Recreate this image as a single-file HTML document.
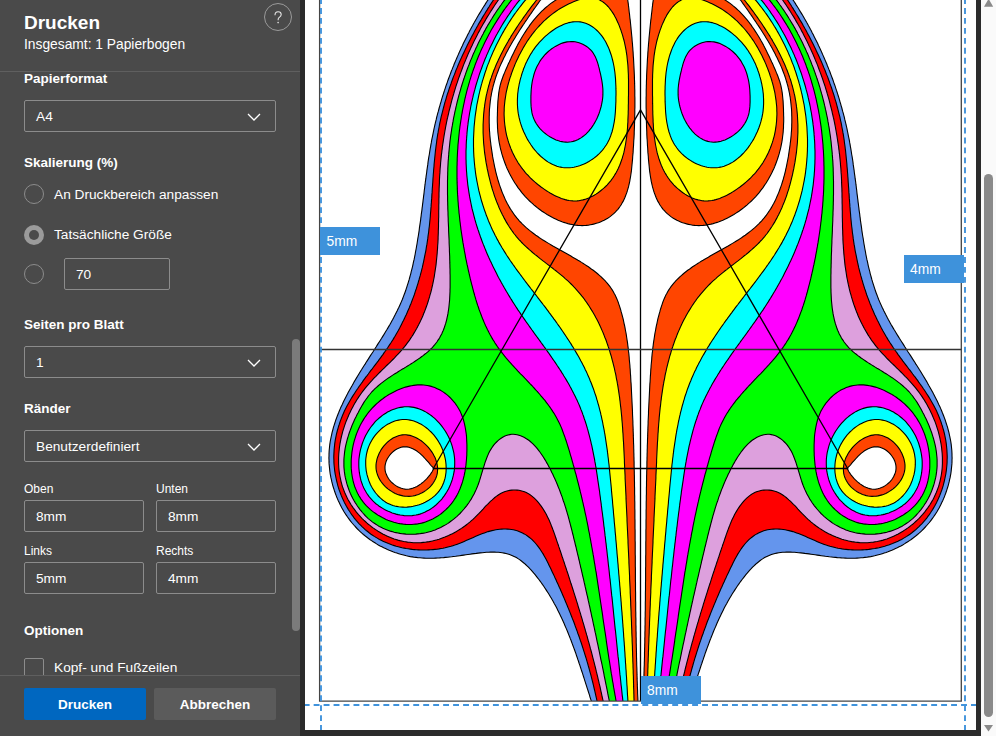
<!DOCTYPE html>
<html><head><meta charset="utf-8">
<style>
*{margin:0;padding:0;box-sizing:border-box}
html,body{width:996px;height:736px;overflow:hidden;background:#2b2b2b;font-family:"Liberation Sans",sans-serif}
.abs{position:absolute}
#panel{position:absolute;left:0;top:0;width:300px;height:736px;background:#4a4a4a;color:#fff;overflow:hidden}
.t{position:absolute;white-space:nowrap;line-height:1}
.h{font-weight:bold;font-size:13.5px}
.n{font-size:13.7px}
.s{font-size:12px}
.box{position:absolute;border:1px solid #8c8c8c;border-radius:2px}
.chev{position:absolute;width:14px;height:8px}
.radio{position:absolute;width:20px;height:20px;border-radius:50%;border:1px solid #8c8c8c}
#page{position:absolute;left:305px;top:0;width:671px;height:730px;background:#fff;overflow:hidden}
#sb{position:absolute;left:981px;top:0;width:15px;height:736px;background:#fafafa}
</style></head><body>
<div id="panel">
  <div class="t" style="left:24px;top:12.5px;font-size:19px;font-weight:bold">Drucken</div>
  <div class="t" style="left:24px;top:38px;font-size:13.8px">Insgesamt: 1 Papierbogen</div>
  <div class="abs" style="left:264px;top:3px;width:28px;height:28px;border:1px solid #9a9a9a;border-radius:50%"></div>
  <svg class="abs" style="left:264px;top:3px" width="28" height="28" viewBox="264 3 28 28"><path d="M275 15.2 C275 12.9 276.4 11.8 278.1 11.8 C279.9 11.8 281.2 13 281.2 14.6 C281.2 16.3 279.8 17 278.9 17.7 C278.2 18.3 278.1 18.8 278.1 20.2" fill="none" stroke="#e6e6e6" stroke-width="1.1"/><circle cx="278.1" cy="22.6" r="0.8" fill="#e6e6e6"/></svg>
  <div class="abs" style="left:0;top:71px;width:300px;height:1px;background:#5f5f5f"></div>

  <div class="t h" style="left:24px;top:72px">Papierformat</div>
  <div class="box" style="left:24px;top:100px;width:252px;height:32px"></div>
  <div class="t n" style="left:36px;top:110px">A4</div>
  <svg class="chev" style="left:247px;top:113px" viewBox="0 0 14 8"><path d="M1 1 L7 7 L13 1" fill="none" stroke="#fff" stroke-width="1.3"/></svg>

  <div class="t h" style="left:24px;top:156px">Skalierung (%)</div>
  <div class="radio" style="left:24px;top:184px"></div>
  <div class="t n" style="left:54px;top:188px">An Druckbereich anpassen</div>
  <div class="radio" style="left:24px;top:224.5px;border:none;background:#9b9b9b"></div>
  <div class="abs" style="left:29px;top:229.5px;width:10px;height:10px;border-radius:50%;background:#4a4a4a"></div>
  <div class="t n" style="left:54px;top:228px">Tatsächliche Größe</div>
  <div class="radio" style="left:24px;top:264px"></div>
  <div class="box" style="left:64px;top:258px;width:106px;height:32px"></div>
  <div class="t n" style="left:76px;top:268px">70</div>

  <div class="t h" style="left:24px;top:318px">Seiten pro Blatt</div>
  <div class="box" style="left:24px;top:346px;width:252px;height:32px"></div>
  <div class="t n" style="left:36px;top:356px">1</div>
  <svg class="chev" style="left:247px;top:359px" viewBox="0 0 14 8"><path d="M1 1 L7 7 L13 1" fill="none" stroke="#fff" stroke-width="1.3"/></svg>

  <div class="t h" style="left:24px;top:402px">Ränder</div>
  <div class="box" style="left:24px;top:430px;width:252px;height:32px"></div>
  <div class="t n" style="left:36px;top:440px">Benutzerdefiniert</div>
  <svg class="chev" style="left:247px;top:443px" viewBox="0 0 14 8"><path d="M1 1 L7 7 L13 1" fill="none" stroke="#fff" stroke-width="1.3"/></svg>

  <div class="t s" style="left:24px;top:483px">Oben</div>
  <div class="t s" style="left:156px;top:483px">Unten</div>
  <div class="box" style="left:24px;top:500px;width:120px;height:32px"></div>
  <div class="box" style="left:156px;top:500px;width:120px;height:32px"></div>
  <div class="t n" style="left:36px;top:510px">8mm</div>
  <div class="t n" style="left:168px;top:510px">8mm</div>
  <div class="t s" style="left:24px;top:545px">Links</div>
  <div class="t s" style="left:156px;top:545px">Rechts</div>
  <div class="box" style="left:24px;top:562px;width:120px;height:32px"></div>
  <div class="box" style="left:156px;top:562px;width:120px;height:32px"></div>
  <div class="t n" style="left:36px;top:572px">5mm</div>
  <div class="t n" style="left:168px;top:572px">4mm</div>

  <div class="t h" style="left:24px;top:624px">Optionen</div>
  <div class="abs" style="left:0;top:650px;width:300px;height:25px;overflow:hidden">
    <div class="box" style="left:24px;top:8px;width:20px;height:20px"></div>
    <div class="t n" style="left:54px;top:11px">Kopf- und Fußzeilen</div>
  </div>
  <div class="abs" style="left:292px;top:339px;width:8px;height:292px;border-radius:4px;background:#7b7b7b"></div>
  <div class="abs" style="left:0;top:675px;width:300px;height:1px;background:#5f5f5f"></div>
  <div class="abs" style="left:24px;top:688px;width:122px;height:32px;background:#0067c0;border-radius:2px"></div>
  <div class="t h" style="left:24px;top:698px;width:122px;text-align:center">Drucken</div>
  <div class="abs" style="left:154px;top:688px;width:122px;height:32px;background:#5b5b5b;border-radius:2px"></div>
  <div class="t h" style="left:154px;top:698px;width:122px;text-align:center">Abbrechen</div>
</div>

<div id="page">
<svg width="671" height="730" viewBox="305 0 671 730" style="position:absolute;left:0;top:0">
  <defs><clipPath id="cc"><rect x="320" y="-10" width="642" height="711"/></clipPath></defs>
  <g clip-path="url(#cc)">
<path fill="#6495ED" stroke="#000" stroke-width="1.1" d="M538.1 -40.0 L487.9 0.0 L486.8 1.7 L485.7 3.4 L484.7 5.1 L483.6 6.8 L482.5 8.5 L481.5 10.2 L480.5 11.9 L479.4 13.6 L478.4 15.3 L477.4 17.0 L476.4 18.8 L475.4 20.5 L474.4 22.3 L473.4 24.0 L472.5 25.8 L471.5 27.5 L470.6 29.3 L469.6 31.1 L468.7 32.9 L467.8 34.6 L466.9 36.4 L466.0 38.2 L465.1 40.0 L464.2 41.8 L463.3 43.6 L462.5 45.5 L461.6 47.3 L460.8 49.1 L459.9 50.9 L459.1 52.8 L458.3 54.6 L457.5 56.4 L456.7 58.3 L455.9 60.1 L455.1 62.0 L454.3 63.8 L453.6 65.7 L452.8 67.6 L452.1 69.4 L451.3 71.3 L450.6 73.2 L449.9 75.1 L449.2 77.0 L448.5 78.8 L447.8 80.7 L447.2 82.6 L446.5 84.5 L445.8 86.4 L445.2 88.3 L444.6 90.2 L443.9 92.2 L443.3 94.1 L442.7 96.0 L442.1 97.9 L441.5 99.8 L441.0 101.8 L440.4 103.7 L439.9 105.6 L439.3 107.5 L438.8 109.5 L438.3 111.4 L437.7 113.4 L437.2 115.3 L436.7 117.2 L436.3 119.2 L435.8 121.1 L435.3 123.1 L434.9 125.0 L434.4 127.0 L434.0 128.9 L433.6 130.9 L433.2 132.9 L432.8 134.8 L432.4 136.8 L432.0 138.7 L431.6 140.7 L431.3 142.7 L430.9 144.6 L430.6 146.6 L430.2 148.6 L429.9 150.5 L429.6 152.5 L429.3 154.5 L428.9 156.5 L428.6 158.4 L428.3 160.4 L428.0 162.4 L427.8 164.4 L427.5 166.3 L427.2 168.3 L426.9 170.3 L426.7 172.3 L426.4 174.3 L426.1 176.3 L425.9 178.2 L425.6 180.2 L425.3 182.2 L425.1 184.2 L424.8 186.2 L424.6 188.2 L424.3 190.2 L424.1 192.2 L423.9 194.1 L423.6 196.1 L423.4 198.1 L423.1 200.1 L422.9 202.1 L422.6 204.1 L422.4 206.1 L422.1 208.1 L421.9 210.1 L421.6 212.1 L421.3 214.1 L421.1 216.1 L420.8 218.1 L420.6 220.1 L420.3 222.1 L420.0 224.1 L419.7 226.1 L419.4 228.1 L419.2 230.1 L418.9 232.1 L418.6 234.0 L418.3 236.0 L417.9 238.0 L417.6 240.0 L417.3 242.0 L417.0 244.0 L416.6 246.0 L416.3 248.0 L415.9 250.0 L415.5 252.0 L415.2 254.0 L414.8 256.0 L414.4 258.0 L414.0 259.9 L413.5 261.9 L413.1 263.9 L412.7 265.8 L412.2 267.8 L411.7 269.8 L411.2 271.7 L410.8 273.6 L410.2 275.6 L409.7 277.5 L409.2 279.4 L408.6 281.4 L408.0 283.3 L407.4 285.2 L406.8 287.1 L406.2 288.9 L405.6 290.8 L404.9 292.7 L404.2 294.5 L403.5 296.4 L402.8 298.2 L402.1 300.0 L401.3 301.9 L400.5 303.7 L399.7 305.4 L398.9 307.2 L398.0 309.0 L397.2 310.8 L396.3 312.5 L395.4 314.3 L394.5 316.0 L393.6 317.8 L392.7 319.5 L391.7 321.2 L390.8 322.9 L389.8 324.7 L388.8 326.4 L387.8 328.1 L386.8 329.8 L385.7 331.5 L384.7 333.2 L383.7 334.9 L382.6 336.6 L381.6 338.3 L380.5 340.0 L379.4 341.7 L378.3 343.4 L377.2 345.1 L376.2 346.8 L375.1 348.5 L374.0 350.2 L372.9 352.0 L371.7 353.7 L370.6 355.4 L369.5 357.1 L368.4 358.9 L367.3 360.6 L366.2 362.3 L365.1 364.1 L364.0 365.8 L362.9 367.5 L361.8 369.3 L360.7 371.0 L359.6 372.8 L358.6 374.5 L357.5 376.3 L356.4 378.1 L355.4 379.8 L354.3 381.6 L353.3 383.4 L352.3 385.2 L351.3 386.9 L350.3 388.7 L349.3 390.5 L348.3 392.3 L347.4 394.1 L346.4 395.9 L345.5 397.7 L344.6 399.5 L343.7 401.3 L342.8 403.2 L342.0 405.0 L341.1 406.8 L340.3 408.6 L339.5 410.5 L338.8 412.3 L338.0 414.2 L337.3 416.0 L336.6 417.9 L335.9 419.7 L335.3 421.6 L334.7 423.5 L334.1 425.3 L333.5 427.2 L333.0 429.1 L332.5 431.0 L332.0 432.9 L331.6 434.8 L331.2 436.7 L330.8 438.6 L330.4 440.5 L330.1 442.4 L329.8 444.4 L329.6 446.3 L329.4 448.2 L329.2 450.2 L329.1 452.1 L329.0 454.1 L329.0 456.0 L328.9 458.0 L329.0 460.0 L329.0 461.9 L329.1 463.9 L329.3 465.9 L329.5 467.9 L329.7 469.9 L329.9 471.8 L330.2 473.8 L330.6 475.8 L330.9 477.7 L331.4 479.7 L331.8 481.7 L332.3 483.6 L332.8 485.6 L333.4 487.5 L334.0 489.4 L334.6 491.3 L335.3 493.2 L336.0 495.1 L336.7 497.0 L337.5 498.9 L338.3 500.7 L339.2 502.6 L340.1 504.4 L341.0 506.2 L341.9 508.0 L342.9 509.7 L343.9 511.5 L345.0 513.2 L346.1 514.9 L347.2 516.5 L348.4 518.2 L349.6 519.8 L350.8 521.4 L352.1 523.0 L353.4 524.5 L354.7 526.0 L356.1 527.5 L357.5 529.0 L358.9 530.4 L360.4 531.8 L361.9 533.2 L363.4 534.5 L365.0 535.8 L366.6 537.0 L368.2 538.3 L369.8 539.5 L371.5 540.6 L373.2 541.7 L374.9 542.8 L376.6 543.9 L378.3 544.9 L380.1 545.9 L381.9 546.8 L383.7 547.8 L385.5 548.6 L387.4 549.5 L389.2 550.3 L391.1 551.0 L393.0 551.8 L394.9 552.5 L396.8 553.1 L398.7 553.7 L400.6 554.3 L402.5 554.8 L404.5 555.3 L406.4 555.8 L408.3 556.2 L410.3 556.6 L412.2 556.9 L414.2 557.2 L416.1 557.4 L418.1 557.7 L420.0 557.8 L422.0 558.0 L423.9 558.1 L425.9 558.2 L427.8 558.2 L429.8 558.2 L431.8 558.2 L433.7 558.2 L435.7 558.1 L437.7 558.0 L439.6 557.9 L441.6 557.7 L443.6 557.6 L445.6 557.4 L447.6 557.2 L449.6 557.0 L451.6 556.8 L453.6 556.5 L455.6 556.3 L457.7 556.0 L459.7 555.7 L461.7 555.4 L463.8 555.1 L465.9 554.8 L467.9 554.5 L470.0 554.2 L472.0 553.9 L474.1 553.6 L476.2 553.4 L478.3 553.1 L480.3 552.9 L482.4 552.7 L484.4 552.5 L486.5 552.3 L488.5 552.2 L490.5 552.1 L492.5 552.1 L494.5 552.1 L496.5 552.2 L498.4 552.3 L500.3 552.5 L502.2 552.8 L504.1 553.1 L506.0 553.5 L507.8 554.0 L509.6 554.5 L511.3 555.2 L513.0 555.9 L514.7 556.7 L516.4 557.6 L518.0 558.6 L519.6 559.6 L521.1 560.8 L522.6 562.0 L524.1 563.2 L525.6 564.5 L527.0 565.8 L528.4 567.2 L529.8 568.7 L531.2 570.1 L532.5 571.6 L533.8 573.2 L535.1 574.7 L536.4 576.3 L537.6 577.9 L538.9 579.5 L540.1 581.1 L541.3 582.7 L542.4 584.4 L543.6 586.0 L544.7 587.7 L545.8 589.4 L546.9 591.1 L548.0 592.8 L549.1 594.5 L550.1 596.2 L551.2 598.0 L552.2 599.7 L553.2 601.5 L554.1 603.3 L555.1 605.0 L556.1 606.8 L557.0 608.6 L557.9 610.4 L558.8 612.3 L559.7 614.1 L560.6 615.9 L561.5 617.8 L562.3 619.6 L563.2 621.5 L564.0 623.3 L564.8 625.2 L565.6 627.1 L566.4 628.9 L567.2 630.8 L568.0 632.7 L568.7 634.6 L569.5 636.5 L570.2 638.4 L571.0 640.3 L571.7 642.2 L572.4 644.1 L573.1 646.0 L573.8 647.9 L574.5 649.8 L575.2 651.7 L575.9 653.6 L576.5 655.6 L577.2 657.5 L577.8 659.4 L578.5 661.3 L579.1 663.2 L579.8 665.1 L580.4 667.0 L581.0 668.9 L581.6 670.8 L582.3 672.7 L582.9 674.6 L583.5 676.5 L584.1 678.4 L584.7 680.3 L585.3 682.2 L585.9 684.1 L586.5 685.9 L587.1 687.8 L587.7 689.7 L588.3 691.5 L588.9 693.4 L589.5 695.2 L590.0 697.0 L590.6 698.9 L591.2 700.7 L597.3 731.0 L683.7 731.0 L689.8 700.7 L690.4 698.9 L691.0 697.0 L691.5 695.2 L692.1 693.4 L692.7 691.5 L693.3 689.7 L693.9 687.8 L694.5 685.9 L695.1 684.1 L695.7 682.2 L696.3 680.3 L696.9 678.4 L697.5 676.5 L698.1 674.6 L698.7 672.7 L699.4 670.8 L700.0 668.9 L700.6 667.0 L701.2 665.1 L701.9 663.2 L702.5 661.3 L703.2 659.4 L703.8 657.5 L704.5 655.6 L705.1 653.6 L705.8 651.7 L706.5 649.8 L707.2 647.9 L707.9 646.0 L708.6 644.1 L709.3 642.2 L710.0 640.3 L710.8 638.4 L711.5 636.5 L712.3 634.6 L713.0 632.7 L713.8 630.8 L714.6 628.9 L715.4 627.1 L716.2 625.2 L717.0 623.3 L717.8 621.5 L718.7 619.6 L719.5 617.8 L720.4 615.9 L721.3 614.1 L722.2 612.3 L723.1 610.4 L724.0 608.6 L724.9 606.8 L725.9 605.0 L726.9 603.3 L727.8 601.5 L728.8 599.7 L729.8 598.0 L730.9 596.2 L731.9 594.5 L733.0 592.8 L734.1 591.1 L735.2 589.4 L736.3 587.7 L737.4 586.0 L738.6 584.4 L739.7 582.7 L740.9 581.1 L742.1 579.5 L743.4 577.9 L744.6 576.3 L745.9 574.7 L747.2 573.2 L748.5 571.6 L749.8 570.1 L751.2 568.7 L752.6 567.2 L754.0 565.8 L755.4 564.5 L756.9 563.2 L758.4 562.0 L759.9 560.8 L761.4 559.6 L763.0 558.6 L764.6 557.6 L766.3 556.7 L768.0 555.9 L769.7 555.2 L771.4 554.5 L773.2 554.0 L775.0 553.5 L776.9 553.1 L778.8 552.8 L780.7 552.5 L782.6 552.3 L784.5 552.2 L786.5 552.1 L788.5 552.1 L790.5 552.1 L792.5 552.2 L794.5 552.3 L796.6 552.5 L798.6 552.7 L800.7 552.9 L802.7 553.1 L804.8 553.4 L806.9 553.6 L809.0 553.9 L811.0 554.2 L813.1 554.5 L815.1 554.8 L817.2 555.1 L819.3 555.4 L821.3 555.7 L823.3 556.0 L825.4 556.3 L827.4 556.5 L829.4 556.8 L831.4 557.0 L833.4 557.2 L835.4 557.4 L837.4 557.6 L839.4 557.7 L841.4 557.9 L843.3 558.0 L845.3 558.1 L847.3 558.2 L849.2 558.2 L851.2 558.2 L853.2 558.2 L855.1 558.2 L857.1 558.1 L859.0 558.0 L861.0 557.8 L862.9 557.7 L864.9 557.4 L866.8 557.2 L868.8 556.9 L870.7 556.6 L872.7 556.2 L874.6 555.8 L876.5 555.3 L878.5 554.8 L880.4 554.3 L882.3 553.7 L884.2 553.1 L886.1 552.5 L888.0 551.8 L889.9 551.0 L891.8 550.3 L893.6 549.5 L895.5 548.6 L897.3 547.8 L899.1 546.8 L900.9 545.9 L902.7 544.9 L904.4 543.9 L906.1 542.8 L907.8 541.7 L909.5 540.6 L911.2 539.5 L912.8 538.3 L914.4 537.0 L916.0 535.8 L917.6 534.5 L919.1 533.2 L920.6 531.8 L922.1 530.4 L923.5 529.0 L924.9 527.5 L926.3 526.0 L927.6 524.5 L928.9 523.0 L930.2 521.4 L931.4 519.8 L932.6 518.2 L933.8 516.5 L934.9 514.9 L936.0 513.2 L937.1 511.5 L938.1 509.7 L939.1 508.0 L940.0 506.2 L940.9 504.4 L941.8 502.6 L942.7 500.7 L943.5 498.9 L944.3 497.0 L945.0 495.1 L945.7 493.2 L946.4 491.3 L947.0 489.4 L947.6 487.5 L948.2 485.6 L948.7 483.6 L949.2 481.7 L949.6 479.7 L950.1 477.7 L950.4 475.8 L950.8 473.8 L951.1 471.8 L951.3 469.9 L951.5 467.9 L951.7 465.9 L951.9 463.9 L952.0 461.9 L952.0 460.0 L952.1 458.0 L952.0 456.0 L952.0 454.1 L951.9 452.1 L951.8 450.2 L951.6 448.2 L951.4 446.3 L951.2 444.4 L950.9 442.4 L950.6 440.5 L950.2 438.6 L949.8 436.7 L949.4 434.8 L949.0 432.9 L948.5 431.0 L948.0 429.1 L947.5 427.2 L946.9 425.3 L946.3 423.5 L945.7 421.6 L945.1 419.7 L944.4 417.9 L943.7 416.0 L943.0 414.2 L942.2 412.3 L941.5 410.5 L940.7 408.6 L939.9 406.8 L939.0 405.0 L938.2 403.2 L937.3 401.3 L936.4 399.5 L935.5 397.7 L934.6 395.9 L933.6 394.1 L932.7 392.3 L931.7 390.5 L930.7 388.7 L929.7 386.9 L928.7 385.2 L927.7 383.4 L926.7 381.6 L925.6 379.8 L924.6 378.1 L923.5 376.3 L922.4 374.5 L921.4 372.8 L920.3 371.0 L919.2 369.3 L918.1 367.5 L917.0 365.8 L915.9 364.1 L914.8 362.3 L913.7 360.6 L912.6 358.9 L911.5 357.1 L910.4 355.4 L909.3 353.7 L908.1 352.0 L907.0 350.2 L905.9 348.5 L904.8 346.8 L903.8 345.1 L902.7 343.4 L901.6 341.7 L900.5 340.0 L899.4 338.3 L898.4 336.6 L897.3 334.9 L896.3 333.2 L895.3 331.5 L894.2 329.8 L893.2 328.1 L892.2 326.4 L891.2 324.7 L890.2 322.9 L889.3 321.2 L888.3 319.5 L887.4 317.8 L886.5 316.0 L885.6 314.3 L884.7 312.5 L883.8 310.8 L883.0 309.0 L882.1 307.2 L881.3 305.4 L880.5 303.7 L879.7 301.9 L878.9 300.0 L878.2 298.2 L877.5 296.4 L876.8 294.5 L876.1 292.7 L875.4 290.8 L874.8 288.9 L874.2 287.1 L873.6 285.2 L873.0 283.3 L872.4 281.4 L871.8 279.4 L871.3 277.5 L870.8 275.6 L870.2 273.6 L869.8 271.7 L869.3 269.8 L868.8 267.8 L868.3 265.8 L867.9 263.9 L867.5 261.9 L867.0 259.9 L866.6 258.0 L866.2 256.0 L865.8 254.0 L865.5 252.0 L865.1 250.0 L864.7 248.0 L864.4 246.0 L864.0 244.0 L863.7 242.0 L863.4 240.0 L863.1 238.0 L862.7 236.0 L862.4 234.0 L862.1 232.1 L861.8 230.1 L861.6 228.1 L861.3 226.1 L861.0 224.1 L860.7 222.1 L860.4 220.1 L860.2 218.1 L859.9 216.1 L859.7 214.1 L859.4 212.1 L859.1 210.1 L858.9 208.1 L858.6 206.1 L858.4 204.1 L858.1 202.1 L857.9 200.1 L857.6 198.1 L857.4 196.1 L857.1 194.1 L856.9 192.2 L856.7 190.2 L856.4 188.2 L856.2 186.2 L855.9 184.2 L855.7 182.2 L855.4 180.2 L855.1 178.2 L854.9 176.3 L854.6 174.3 L854.3 172.3 L854.1 170.3 L853.8 168.3 L853.5 166.3 L853.2 164.4 L853.0 162.4 L852.7 160.4 L852.4 158.4 L852.1 156.5 L851.7 154.5 L851.4 152.5 L851.1 150.5 L850.8 148.6 L850.4 146.6 L850.1 144.6 L849.7 142.7 L849.4 140.7 L849.0 138.7 L848.6 136.8 L848.2 134.8 L847.8 132.9 L847.4 130.9 L847.0 128.9 L846.6 127.0 L846.1 125.0 L845.7 123.1 L845.2 121.1 L844.7 119.2 L844.3 117.2 L843.8 115.3 L843.3 113.4 L842.7 111.4 L842.2 109.5 L841.7 107.5 L841.1 105.6 L840.6 103.7 L840.0 101.8 L839.5 99.8 L838.9 97.9 L838.3 96.0 L837.7 94.1 L837.1 92.2 L836.4 90.2 L835.8 88.3 L835.2 86.4 L834.5 84.5 L833.8 82.6 L833.2 80.7 L832.5 78.8 L831.8 77.0 L831.1 75.1 L830.4 73.2 L829.7 71.3 L828.9 69.4 L828.2 67.6 L827.4 65.7 L826.7 63.8 L825.9 62.0 L825.1 60.1 L824.3 58.3 L823.5 56.4 L822.7 54.6 L821.9 52.8 L821.1 50.9 L820.2 49.1 L819.4 47.3 L818.5 45.5 L817.7 43.6 L816.8 41.8 L815.9 40.0 L815.0 38.2 L814.1 36.4 L813.2 34.6 L812.3 32.9 L811.4 31.1 L810.4 29.3 L809.5 27.5 L808.5 25.8 L807.6 24.0 L806.6 22.3 L805.6 20.5 L804.6 18.8 L803.6 17.0 L802.6 15.3 L801.6 13.6 L800.5 11.9 L799.5 10.2 L798.5 8.5 L797.4 6.8 L796.3 5.1 L795.3 3.4 L794.2 1.7 L793.1 0.0 L742.9 -40.0 Z"/>
<path fill="#FF0000" stroke="#000" stroke-width="1.1" d="M544.8 -40.0 L493.4 0.0 L492.3 1.7 L491.2 3.4 L490.1 5.0 L489.1 6.7 L488.0 8.4 L487.0 10.1 L485.9 11.8 L484.9 13.5 L483.8 15.2 L482.8 16.9 L481.8 18.6 L480.8 20.4 L479.7 22.1 L478.7 23.8 L477.8 25.6 L476.8 27.3 L475.8 29.1 L474.8 30.8 L473.9 32.6 L472.9 34.4 L472.0 36.1 L471.0 37.9 L470.1 39.7 L469.2 41.5 L468.3 43.3 L467.4 45.1 L466.5 46.9 L465.6 48.7 L464.8 50.5 L463.9 52.4 L463.0 54.2 L462.2 56.0 L461.4 57.8 L460.5 59.7 L459.7 61.5 L458.9 63.4 L458.1 65.2 L457.4 67.1 L456.6 68.9 L455.8 70.8 L455.1 72.7 L454.4 74.6 L453.6 76.4 L452.9 78.3 L452.2 80.2 L451.5 82.1 L450.9 84.0 L450.2 85.9 L449.5 87.8 L448.9 89.7 L448.3 91.6 L447.6 93.5 L447.0 95.4 L446.4 97.3 L445.9 99.3 L445.3 101.2 L444.7 103.1 L444.2 105.1 L443.7 107.0 L443.2 108.9 L442.7 110.9 L442.2 112.8 L441.7 114.8 L441.2 116.7 L440.8 118.7 L440.4 120.6 L439.9 122.6 L439.5 124.6 L439.2 126.5 L438.8 128.5 L438.4 130.5 L438.1 132.4 L437.7 134.4 L437.4 136.4 L437.1 138.4 L436.8 140.3 L436.6 142.3 L436.3 144.3 L436.0 146.3 L435.8 148.3 L435.5 150.3 L435.3 152.3 L435.1 154.3 L434.9 156.3 L434.7 158.3 L434.5 160.3 L434.3 162.3 L434.1 164.3 L434.0 166.3 L433.8 168.3 L433.6 170.3 L433.5 172.3 L433.3 174.3 L433.2 176.3 L433.0 178.3 L432.9 180.3 L432.8 182.3 L432.6 184.3 L432.5 186.4 L432.3 188.4 L432.2 190.4 L432.1 192.4 L431.9 194.4 L431.8 196.4 L431.7 198.4 L431.5 200.4 L431.4 202.4 L431.2 204.4 L431.1 206.4 L430.9 208.5 L430.8 210.5 L430.6 212.5 L430.4 214.5 L430.3 216.5 L430.1 218.5 L429.9 220.5 L429.7 222.5 L429.5 224.5 L429.3 226.5 L429.0 228.5 L428.8 230.5 L428.6 232.5 L428.3 234.4 L428.0 236.4 L427.8 238.4 L427.5 240.4 L427.2 242.4 L426.9 244.4 L426.5 246.3 L426.2 248.3 L425.9 250.3 L425.5 252.3 L425.1 254.2 L424.7 256.2 L424.3 258.2 L423.9 260.1 L423.5 262.1 L423.1 264.0 L422.6 266.0 L422.2 267.9 L421.7 269.9 L421.2 271.8 L420.7 273.7 L420.2 275.7 L419.6 277.6 L419.1 279.5 L418.5 281.4 L418.0 283.3 L417.4 285.2 L416.8 287.1 L416.2 289.0 L415.5 290.9 L414.9 292.8 L414.3 294.7 L413.6 296.6 L412.9 298.4 L412.2 300.3 L411.5 302.1 L410.8 304.0 L410.0 305.8 L409.3 307.7 L408.5 309.5 L407.7 311.3 L406.9 313.2 L406.1 315.0 L405.2 316.8 L404.4 318.6 L403.5 320.4 L402.6 322.1 L401.7 323.9 L400.8 325.7 L399.9 327.5 L399.0 329.2 L398.0 331.0 L397.0 332.7 L396.0 334.4 L395.0 336.2 L394.0 337.9 L393.0 339.6 L391.9 341.3 L390.8 343.0 L389.7 344.6 L388.6 346.3 L387.5 348.0 L386.4 349.6 L385.2 351.3 L384.0 352.9 L382.9 354.6 L381.7 356.2 L380.5 357.8 L379.3 359.4 L378.1 361.1 L376.9 362.7 L375.6 364.3 L374.4 365.9 L373.2 367.5 L372.0 369.1 L370.7 370.7 L369.5 372.3 L368.3 374.0 L367.1 375.6 L365.8 377.2 L364.6 378.8 L363.4 380.4 L362.3 382.1 L361.1 383.7 L359.9 385.4 L358.7 387.0 L357.6 388.7 L356.5 390.3 L355.4 392.0 L354.3 393.7 L353.2 395.4 L352.1 397.1 L351.1 398.8 L350.1 400.5 L349.1 402.2 L348.1 404.0 L347.1 405.8 L346.2 407.5 L345.3 409.3 L344.4 411.1 L343.6 413.0 L342.8 414.8 L342.0 416.7 L341.3 418.5 L340.6 420.4 L339.9 422.3 L339.3 424.2 L338.6 426.1 L338.1 428.1 L337.5 430.0 L337.0 432.0 L336.5 433.9 L336.1 435.9 L335.7 437.9 L335.3 439.9 L335.0 441.9 L334.7 443.9 L334.5 445.9 L334.3 447.9 L334.1 449.9 L334.0 451.9 L333.9 453.9 L333.8 455.9 L333.8 458.0 L333.9 460.0 L333.9 462.0 L334.0 464.0 L334.2 466.0 L334.4 468.0 L334.6 470.1 L334.9 472.1 L335.2 474.1 L335.6 476.0 L336.0 478.0 L336.4 480.0 L336.9 482.0 L337.4 483.9 L337.9 485.9 L338.5 487.8 L339.1 489.7 L339.8 491.6 L340.5 493.5 L341.2 495.4 L342.0 497.2 L342.8 499.0 L343.7 500.9 L344.5 502.7 L345.5 504.4 L346.4 506.2 L347.4 507.9 L348.4 509.6 L349.5 511.3 L350.6 513.0 L351.7 514.6 L352.9 516.2 L354.1 517.8 L355.3 519.3 L356.6 520.8 L357.9 522.3 L359.2 523.8 L360.6 525.2 L362.0 526.6 L363.4 527.9 L364.9 529.3 L366.3 530.5 L367.9 531.8 L369.4 533.0 L371.0 534.2 L372.6 535.3 L374.3 536.4 L376.0 537.4 L377.7 538.4 L379.4 539.4 L381.2 540.3 L383.0 541.2 L384.8 542.0 L386.7 542.8 L388.5 543.6 L390.4 544.3 L392.3 545.0 L394.3 545.6 L396.2 546.2 L398.2 546.7 L400.1 547.2 L402.1 547.7 L404.1 548.1 L406.2 548.5 L408.2 548.8 L410.2 549.1 L412.3 549.4 L414.3 549.6 L416.4 549.8 L418.4 549.9 L420.5 550.0 L422.6 550.0 L424.6 550.0 L426.7 550.0 L428.8 549.9 L430.8 549.8 L432.9 549.6 L434.9 549.4 L437.0 549.2 L439.0 548.9 L441.0 548.5 L443.0 548.2 L445.0 547.8 L447.0 547.3 L449.0 546.8 L451.0 546.3 L452.9 545.7 L454.8 545.1 L456.7 544.4 L458.6 543.7 L460.5 543.0 L462.4 542.2 L464.2 541.4 L466.1 540.6 L467.9 539.8 L469.7 539.0 L471.5 538.2 L473.4 537.4 L475.2 536.6 L477.0 535.8 L478.8 535.0 L480.7 534.3 L482.5 533.6 L484.4 532.9 L486.2 532.2 L488.1 531.6 L490.0 531.1 L491.9 530.6 L493.9 530.2 L495.8 529.8 L497.8 529.5 L499.7 529.3 L501.7 529.1 L503.7 529.0 L505.7 529.0 L507.6 529.1 L509.6 529.3 L511.5 529.5 L513.4 529.8 L515.3 530.3 L517.2 530.8 L519.0 531.4 L520.8 532.2 L522.5 533.0 L524.2 533.9 L525.9 534.9 L527.5 536.0 L529.1 537.2 L530.6 538.4 L532.1 539.7 L533.5 541.1 L534.8 542.5 L536.1 544.0 L537.4 545.6 L538.6 547.2 L539.8 548.8 L540.9 550.5 L542.0 552.2 L543.1 553.9 L544.1 555.7 L545.1 557.5 L546.1 559.3 L547.1 561.2 L548.0 563.0 L548.9 564.9 L549.8 566.7 L550.7 568.6 L551.6 570.5 L552.5 572.4 L553.4 574.2 L554.3 576.1 L555.1 578.0 L556.0 579.8 L556.8 581.7 L557.7 583.6 L558.5 585.4 L559.3 587.3 L560.2 589.1 L561.0 591.0 L561.8 592.8 L562.6 594.7 L563.4 596.5 L564.2 598.4 L565.0 600.2 L565.7 602.0 L566.5 603.9 L567.3 605.7 L568.0 607.6 L568.8 609.4 L569.5 611.3 L570.3 613.1 L571.0 615.0 L571.7 616.8 L572.4 618.6 L573.2 620.5 L573.9 622.3 L574.6 624.2 L575.2 626.0 L575.9 627.9 L576.6 629.8 L577.3 631.6 L577.9 633.5 L578.6 635.3 L579.3 637.2 L579.9 639.1 L580.5 640.9 L581.2 642.8 L581.8 644.7 L582.4 646.5 L583.0 648.4 L583.6 650.3 L584.2 652.2 L584.8 654.1 L585.4 656.0 L586.0 657.9 L586.6 659.8 L587.1 661.7 L587.7 663.6 L588.2 665.5 L588.8 667.5 L589.3 669.4 L589.8 671.3 L590.4 673.3 L590.9 675.2 L591.4 677.1 L591.9 679.1 L592.4 681.1 L592.9 683.0 L593.4 685.0 L593.8 687.0 L594.3 689.0 L594.8 691.0 L595.2 693.0 L595.7 695.0 L596.1 697.0 L596.6 699.0 L597.0 701.0 L604.1 731.0 L676.9 731.0 L684.0 701.0 L684.4 699.0 L684.9 697.0 L685.3 695.0 L685.8 693.0 L686.2 691.0 L686.7 689.0 L687.2 687.0 L687.6 685.0 L688.1 683.0 L688.6 681.1 L689.1 679.1 L689.6 677.1 L690.1 675.2 L690.6 673.3 L691.2 671.3 L691.7 669.4 L692.2 667.5 L692.8 665.5 L693.3 663.6 L693.9 661.7 L694.4 659.8 L695.0 657.9 L695.6 656.0 L696.2 654.1 L696.8 652.2 L697.4 650.3 L698.0 648.4 L698.6 646.5 L699.2 644.7 L699.8 642.8 L700.5 640.9 L701.1 639.1 L701.7 637.2 L702.4 635.3 L703.1 633.5 L703.7 631.6 L704.4 629.8 L705.1 627.9 L705.8 626.0 L706.4 624.2 L707.1 622.3 L707.8 620.5 L708.6 618.6 L709.3 616.8 L710.0 615.0 L710.7 613.1 L711.5 611.3 L712.2 609.4 L713.0 607.6 L713.7 605.7 L714.5 603.9 L715.3 602.0 L716.0 600.2 L716.8 598.4 L717.6 596.5 L718.4 594.7 L719.2 592.8 L720.0 591.0 L720.8 589.1 L721.7 587.3 L722.5 585.4 L723.3 583.6 L724.2 581.7 L725.0 579.8 L725.9 578.0 L726.7 576.1 L727.6 574.2 L728.5 572.4 L729.4 570.5 L730.3 568.6 L731.2 566.7 L732.1 564.9 L733.0 563.0 L733.9 561.2 L734.9 559.3 L735.9 557.5 L736.9 555.7 L737.9 553.9 L739.0 552.2 L740.1 550.5 L741.2 548.8 L742.4 547.2 L743.6 545.6 L744.9 544.0 L746.2 542.5 L747.5 541.1 L748.9 539.7 L750.4 538.4 L751.9 537.2 L753.5 536.0 L755.1 534.9 L756.8 533.9 L758.5 533.0 L760.2 532.2 L762.0 531.4 L763.8 530.8 L765.7 530.3 L767.6 529.8 L769.5 529.5 L771.4 529.3 L773.4 529.1 L775.3 529.0 L777.3 529.0 L779.3 529.1 L781.3 529.3 L783.2 529.5 L785.2 529.8 L787.1 530.2 L789.1 530.6 L791.0 531.1 L792.9 531.6 L794.8 532.2 L796.6 532.9 L798.5 533.6 L800.3 534.3 L802.2 535.0 L804.0 535.8 L805.8 536.6 L807.6 537.4 L809.5 538.2 L811.3 539.0 L813.1 539.8 L814.9 540.6 L816.8 541.4 L818.6 542.2 L820.5 543.0 L822.4 543.7 L824.3 544.4 L826.2 545.1 L828.1 545.7 L830.0 546.3 L832.0 546.8 L834.0 547.3 L836.0 547.8 L838.0 548.2 L840.0 548.5 L842.0 548.9 L844.0 549.2 L846.1 549.4 L848.1 549.6 L850.2 549.8 L852.2 549.9 L854.3 550.0 L856.4 550.0 L858.4 550.0 L860.5 550.0 L862.6 549.9 L864.6 549.8 L866.7 549.6 L868.7 549.4 L870.8 549.1 L872.8 548.8 L874.8 548.5 L876.9 548.1 L878.9 547.7 L880.9 547.2 L882.8 546.7 L884.8 546.2 L886.7 545.6 L888.7 545.0 L890.6 544.3 L892.5 543.6 L894.3 542.8 L896.2 542.0 L898.0 541.2 L899.8 540.3 L901.6 539.4 L903.3 538.4 L905.0 537.4 L906.7 536.4 L908.4 535.3 L910.0 534.2 L911.6 533.0 L913.1 531.8 L914.7 530.5 L916.1 529.3 L917.6 527.9 L919.0 526.6 L920.4 525.2 L921.8 523.8 L923.1 522.3 L924.4 520.8 L925.7 519.3 L926.9 517.8 L928.1 516.2 L929.3 514.6 L930.4 513.0 L931.5 511.3 L932.6 509.6 L933.6 507.9 L934.6 506.2 L935.5 504.4 L936.5 502.7 L937.3 500.9 L938.2 499.0 L939.0 497.2 L939.8 495.4 L940.5 493.5 L941.2 491.6 L941.9 489.7 L942.5 487.8 L943.1 485.9 L943.6 483.9 L944.1 482.0 L944.6 480.0 L945.0 478.0 L945.4 476.0 L945.8 474.1 L946.1 472.1 L946.4 470.1 L946.6 468.0 L946.8 466.0 L947.0 464.0 L947.1 462.0 L947.1 460.0 L947.2 458.0 L947.2 455.9 L947.1 453.9 L947.0 451.9 L946.9 449.9 L946.7 447.9 L946.5 445.9 L946.3 443.9 L946.0 441.9 L945.7 439.9 L945.3 437.9 L944.9 435.9 L944.5 433.9 L944.0 432.0 L943.5 430.0 L942.9 428.1 L942.4 426.1 L941.7 424.2 L941.1 422.3 L940.4 420.4 L939.7 418.5 L939.0 416.7 L938.2 414.8 L937.4 413.0 L936.6 411.1 L935.7 409.3 L934.8 407.5 L933.9 405.8 L932.9 404.0 L931.9 402.2 L930.9 400.5 L929.9 398.8 L928.9 397.1 L927.8 395.4 L926.7 393.7 L925.6 392.0 L924.5 390.3 L923.4 388.7 L922.3 387.0 L921.1 385.4 L919.9 383.7 L918.7 382.1 L917.6 380.4 L916.4 378.8 L915.2 377.2 L913.9 375.6 L912.7 374.0 L911.5 372.3 L910.3 370.7 L909.0 369.1 L907.8 367.5 L906.6 365.9 L905.4 364.3 L904.1 362.7 L902.9 361.1 L901.7 359.4 L900.5 357.8 L899.3 356.2 L898.1 354.6 L897.0 352.9 L895.8 351.3 L894.6 349.6 L893.5 348.0 L892.4 346.3 L891.3 344.6 L890.2 343.0 L889.1 341.3 L888.0 339.6 L887.0 337.9 L886.0 336.2 L885.0 334.4 L884.0 332.7 L883.0 331.0 L882.0 329.2 L881.1 327.5 L880.2 325.7 L879.3 323.9 L878.4 322.1 L877.5 320.4 L876.6 318.6 L875.8 316.8 L874.9 315.0 L874.1 313.2 L873.3 311.3 L872.5 309.5 L871.7 307.7 L871.0 305.8 L870.2 304.0 L869.5 302.1 L868.8 300.3 L868.1 298.4 L867.4 296.6 L866.7 294.7 L866.1 292.8 L865.5 290.9 L864.8 289.0 L864.2 287.1 L863.6 285.2 L863.0 283.3 L862.5 281.4 L861.9 279.5 L861.4 277.6 L860.8 275.7 L860.3 273.7 L859.8 271.8 L859.3 269.9 L858.8 267.9 L858.4 266.0 L857.9 264.0 L857.5 262.1 L857.1 260.1 L856.7 258.2 L856.3 256.2 L855.9 254.2 L855.5 252.3 L855.1 250.3 L854.8 248.3 L854.5 246.3 L854.1 244.4 L853.8 242.4 L853.5 240.4 L853.2 238.4 L853.0 236.4 L852.7 234.4 L852.4 232.5 L852.2 230.5 L852.0 228.5 L851.7 226.5 L851.5 224.5 L851.3 222.5 L851.1 220.5 L850.9 218.5 L850.7 216.5 L850.6 214.5 L850.4 212.5 L850.2 210.5 L850.1 208.5 L849.9 206.4 L849.8 204.4 L849.6 202.4 L849.5 200.4 L849.3 198.4 L849.2 196.4 L849.1 194.4 L848.9 192.4 L848.8 190.4 L848.7 188.4 L848.5 186.4 L848.4 184.3 L848.2 182.3 L848.1 180.3 L848.0 178.3 L847.8 176.3 L847.7 174.3 L847.5 172.3 L847.4 170.3 L847.2 168.3 L847.0 166.3 L846.9 164.3 L846.7 162.3 L846.5 160.3 L846.3 158.3 L846.1 156.3 L845.9 154.3 L845.7 152.3 L845.5 150.3 L845.2 148.3 L845.0 146.3 L844.7 144.3 L844.4 142.3 L844.2 140.3 L843.9 138.4 L843.6 136.4 L843.3 134.4 L842.9 132.4 L842.6 130.5 L842.2 128.5 L841.8 126.5 L841.5 124.6 L841.1 122.6 L840.6 120.6 L840.2 118.7 L839.8 116.7 L839.3 114.8 L838.8 112.8 L838.3 110.9 L837.8 108.9 L837.3 107.0 L836.8 105.1 L836.3 103.1 L835.7 101.2 L835.1 99.3 L834.6 97.3 L834.0 95.4 L833.4 93.5 L832.7 91.6 L832.1 89.7 L831.5 87.8 L830.8 85.9 L830.1 84.0 L829.5 82.1 L828.8 80.2 L828.1 78.3 L827.4 76.4 L826.6 74.6 L825.9 72.7 L825.2 70.8 L824.4 68.9 L823.6 67.1 L822.9 65.2 L822.1 63.4 L821.3 61.5 L820.5 59.7 L819.6 57.8 L818.8 56.0 L818.0 54.2 L817.1 52.4 L816.2 50.5 L815.4 48.7 L814.5 46.9 L813.6 45.1 L812.7 43.3 L811.8 41.5 L810.9 39.7 L810.0 37.9 L809.0 36.1 L808.1 34.4 L807.1 32.6 L806.2 30.8 L805.2 29.1 L804.2 27.3 L803.2 25.6 L802.3 23.8 L801.3 22.1 L800.2 20.4 L799.2 18.6 L798.2 16.9 L797.2 15.2 L796.1 13.5 L795.1 11.8 L794.0 10.1 L793.0 8.4 L791.9 6.7 L790.9 5.0 L789.8 3.4 L788.7 1.7 L787.6 0.0 L736.2 -40.0 Z"/>
<path fill="#DDA0DD" stroke="#000" stroke-width="1.1" d="M549.7 -40.0 L498.3 0.0 L497.2 1.7 L496.0 3.4 L494.9 5.0 L493.8 6.7 L492.7 8.4 L491.6 10.1 L490.5 11.8 L489.5 13.5 L488.4 15.2 L487.3 16.9 L486.3 18.6 L485.3 20.4 L484.3 22.1 L483.3 23.8 L482.3 25.6 L481.3 27.3 L480.3 29.1 L479.4 30.9 L478.4 32.6 L477.5 34.4 L476.6 36.2 L475.7 38.0 L474.8 39.8 L473.9 41.6 L473.0 43.4 L472.2 45.2 L471.3 47.0 L470.5 48.8 L469.6 50.7 L468.8 52.5 L468.0 54.3 L467.2 56.2 L466.4 58.0 L465.7 59.9 L464.9 61.7 L464.1 63.6 L463.4 65.4 L462.7 67.3 L462.0 69.2 L461.3 71.1 L460.6 72.9 L459.9 74.8 L459.2 76.7 L458.5 78.6 L457.9 80.5 L457.3 82.4 L456.6 84.3 L456.0 86.2 L455.4 88.1 L454.8 90.1 L454.2 92.0 L453.7 93.9 L453.1 95.8 L452.5 97.8 L452.0 99.7 L451.5 101.6 L451.0 103.6 L450.5 105.5 L450.0 107.5 L449.5 109.4 L449.0 111.4 L448.6 113.3 L448.1 115.3 L447.7 117.2 L447.2 119.2 L446.8 121.2 L446.4 123.1 L446.0 125.1 L445.6 127.1 L445.3 129.0 L444.9 131.0 L444.6 133.0 L444.2 135.0 L443.9 137.0 L443.6 139.0 L443.3 140.9 L443.0 142.9 L442.7 144.9 L442.4 146.9 L442.2 148.9 L441.9 150.9 L441.7 152.9 L441.4 154.9 L441.2 156.9 L441.0 158.9 L440.8 160.9 L440.6 162.9 L440.5 164.9 L440.3 166.9 L440.1 168.9 L440.0 170.9 L439.9 172.9 L439.7 174.9 L439.6 176.9 L439.5 178.9 L439.4 180.9 L439.4 182.9 L439.3 184.9 L439.2 186.9 L439.1 188.9 L439.1 190.9 L439.0 192.9 L439.0 195.0 L439.0 197.0 L438.9 199.0 L438.9 201.0 L438.9 203.0 L438.8 205.0 L438.8 207.0 L438.8 209.0 L438.7 211.0 L438.7 213.0 L438.7 215.0 L438.7 217.0 L438.6 219.0 L438.6 221.1 L438.5 223.1 L438.5 225.1 L438.5 227.1 L438.4 229.1 L438.3 231.1 L438.3 233.1 L438.2 235.1 L438.1 237.1 L438.1 239.1 L438.0 241.1 L437.9 243.1 L437.7 245.1 L437.6 247.1 L437.5 249.1 L437.3 251.1 L437.2 253.1 L437.0 255.1 L436.8 257.1 L436.6 259.1 L436.4 261.1 L436.2 263.1 L436.0 265.1 L435.7 267.1 L435.4 269.0 L435.1 271.0 L434.8 273.0 L434.5 275.0 L434.2 277.0 L433.8 279.0 L433.4 281.0 L433.0 282.9 L432.6 284.9 L432.1 286.9 L431.7 288.9 L431.2 290.8 L430.7 292.8 L430.1 294.7 L429.6 296.7 L429.0 298.6 L428.4 300.6 L427.8 302.5 L427.2 304.4 L426.5 306.3 L425.8 308.2 L425.1 310.1 L424.4 312.0 L423.6 313.8 L422.9 315.7 L422.1 317.5 L421.2 319.4 L420.4 321.2 L419.5 323.0 L418.6 324.8 L417.7 326.5 L416.8 328.3 L415.8 330.0 L414.8 331.7 L413.8 333.4 L412.8 335.1 L411.7 336.8 L410.6 338.4 L409.5 340.1 L408.4 341.7 L407.2 343.2 L406.0 344.8 L404.8 346.4 L403.5 347.9 L402.3 349.4 L401.0 350.9 L399.7 352.3 L398.3 353.8 L397.0 355.2 L395.6 356.6 L394.3 358.1 L392.9 359.5 L391.5 360.9 L390.1 362.3 L388.7 363.7 L387.2 365.0 L385.8 366.4 L384.4 367.8 L383.0 369.2 L381.5 370.6 L380.1 372.0 L378.7 373.4 L377.3 374.8 L375.9 376.3 L374.5 377.7 L373.1 379.1 L371.8 380.6 L370.4 382.1 L369.1 383.6 L367.8 385.1 L366.5 386.6 L365.2 388.2 L363.9 389.8 L362.7 391.4 L361.5 393.0 L360.3 394.7 L359.1 396.4 L358.0 398.1 L356.9 399.8 L355.8 401.6 L354.8 403.3 L353.8 405.1 L352.8 406.9 L351.8 408.7 L350.9 410.6 L350.0 412.4 L349.1 414.3 L348.3 416.2 L347.5 418.1 L346.7 420.0 L345.9 421.9 L345.2 423.9 L344.5 425.8 L343.9 427.8 L343.3 429.7 L342.7 431.7 L342.2 433.7 L341.7 435.7 L341.2 437.7 L340.8 439.7 L340.4 441.7 L340.0 443.7 L339.7 445.7 L339.4 447.7 L339.2 449.7 L339.0 451.7 L338.8 453.7 L338.7 455.7 L338.6 457.7 L338.6 459.7 L338.6 461.7 L338.6 463.7 L338.7 465.7 L338.8 467.7 L339.0 469.7 L339.2 471.6 L339.5 473.6 L339.8 475.5 L340.2 477.5 L340.6 479.4 L341.0 481.3 L341.5 483.2 L342.0 485.1 L342.6 487.0 L343.3 488.9 L344.0 490.7 L344.7 492.5 L345.5 494.3 L346.3 496.1 L347.2 497.9 L348.1 499.7 L349.1 501.4 L350.1 503.1 L351.1 504.8 L352.2 506.4 L353.4 508.1 L354.6 509.7 L355.8 511.3 L357.0 512.8 L358.3 514.4 L359.7 515.9 L361.0 517.3 L362.4 518.8 L363.8 520.2 L365.3 521.5 L366.8 522.9 L368.3 524.2 L369.9 525.4 L371.5 526.7 L373.1 527.9 L374.7 529.0 L376.4 530.1 L378.1 531.2 L379.8 532.2 L381.5 533.2 L383.2 534.2 L385.0 535.1 L386.8 535.9 L388.6 536.7 L390.5 537.5 L392.3 538.2 L394.2 538.9 L396.0 539.5 L397.9 540.1 L399.8 540.6 L401.8 541.0 L403.7 541.5 L405.6 541.8 L407.6 542.1 L409.5 542.3 L411.5 542.5 L413.4 542.7 L415.4 542.7 L417.4 542.7 L419.4 542.7 L421.3 542.6 L423.3 542.4 L425.3 542.2 L427.3 541.9 L429.3 541.6 L431.2 541.2 L433.2 540.8 L435.2 540.3 L437.1 539.8 L439.1 539.2 L441.0 538.5 L442.9 537.8 L444.9 537.1 L446.8 536.3 L448.6 535.5 L450.5 534.6 L452.4 533.7 L454.2 532.7 L456.0 531.7 L457.8 530.6 L459.6 529.5 L461.4 528.4 L463.1 527.2 L464.8 526.0 L466.5 524.7 L468.2 523.4 L469.8 522.1 L471.4 520.7 L473.0 519.3 L474.5 517.9 L476.0 516.4 L477.5 514.9 L479.0 513.4 L480.5 511.8 L481.9 510.3 L483.3 508.8 L484.7 507.2 L486.1 505.7 L487.6 504.3 L489.0 502.8 L490.4 501.4 L491.9 500.1 L493.3 498.8 L494.8 497.5 L496.3 496.4 L497.9 495.3 L499.4 494.3 L501.1 493.3 L502.7 492.5 L504.4 491.8 L506.1 491.2 L507.9 490.7 L509.7 490.4 L511.6 490.1 L513.4 490.0 L515.3 490.0 L517.2 490.1 L519.0 490.3 L520.9 490.7 L522.7 491.2 L524.5 491.8 L526.3 492.6 L528.0 493.4 L529.7 494.5 L531.3 495.6 L532.8 496.8 L534.3 498.2 L535.8 499.6 L537.2 501.1 L538.5 502.7 L539.8 504.3 L541.0 505.9 L542.2 507.6 L543.3 509.3 L544.4 511.1 L545.4 512.8 L546.4 514.6 L547.3 516.4 L548.2 518.3 L549.1 520.1 L549.9 522.0 L550.7 523.9 L551.4 525.8 L552.2 527.7 L552.9 529.6 L553.6 531.5 L554.3 533.4 L555.0 535.3 L555.6 537.3 L556.3 539.2 L556.9 541.1 L557.6 543.1 L558.3 545.0 L558.9 546.9 L559.6 548.8 L560.2 550.8 L560.9 552.7 L561.5 554.6 L562.1 556.5 L562.8 558.4 L563.4 560.4 L564.1 562.3 L564.7 564.2 L565.3 566.1 L566.0 568.0 L566.6 569.9 L567.2 571.8 L567.9 573.7 L568.5 575.6 L569.1 577.5 L569.7 579.4 L570.3 581.4 L570.9 583.3 L571.6 585.2 L572.2 587.1 L572.8 589.0 L573.4 590.9 L574.0 592.8 L574.6 594.7 L575.2 596.6 L575.8 598.5 L576.4 600.4 L577.0 602.3 L577.6 604.2 L578.1 606.1 L578.7 608.0 L579.3 609.9 L579.9 611.8 L580.5 613.7 L581.0 615.6 L581.6 617.5 L582.2 619.4 L582.7 621.3 L583.3 623.2 L583.9 625.2 L584.4 627.1 L585.0 629.0 L585.5 630.9 L586.1 632.8 L586.6 634.7 L587.2 636.6 L587.7 638.6 L588.2 640.5 L588.8 642.4 L589.3 644.3 L589.8 646.2 L590.3 648.2 L590.9 650.1 L591.4 652.0 L591.9 653.9 L592.4 655.9 L592.9 657.8 L593.4 659.8 L593.9 661.7 L594.4 663.6 L594.9 665.6 L595.4 667.5 L595.9 669.5 L596.3 671.4 L596.8 673.4 L597.3 675.3 L597.8 677.3 L598.2 679.3 L598.7 681.2 L599.1 683.2 L599.6 685.2 L600.1 687.1 L600.5 689.1 L600.9 691.1 L601.4 693.1 L601.8 695.1 L602.2 697.0 L602.7 699.0 L603.1 701.0 L611.8 731.0 L669.2 731.0 L677.9 701.0 L678.3 699.0 L678.8 697.0 L679.2 695.1 L679.6 693.1 L680.1 691.1 L680.5 689.1 L680.9 687.1 L681.4 685.2 L681.9 683.2 L682.3 681.2 L682.8 679.3 L683.2 677.3 L683.7 675.3 L684.2 673.4 L684.7 671.4 L685.1 669.5 L685.6 667.5 L686.1 665.6 L686.6 663.6 L687.1 661.7 L687.6 659.8 L688.1 657.8 L688.6 655.9 L689.1 653.9 L689.6 652.0 L690.1 650.1 L690.7 648.2 L691.2 646.2 L691.7 644.3 L692.2 642.4 L692.8 640.5 L693.3 638.6 L693.8 636.6 L694.4 634.7 L694.9 632.8 L695.5 630.9 L696.0 629.0 L696.6 627.1 L697.1 625.2 L697.7 623.2 L698.3 621.3 L698.8 619.4 L699.4 617.5 L700.0 615.6 L700.5 613.7 L701.1 611.8 L701.7 609.9 L702.3 608.0 L702.9 606.1 L703.4 604.2 L704.0 602.3 L704.6 600.4 L705.2 598.5 L705.8 596.6 L706.4 594.7 L707.0 592.8 L707.6 590.9 L708.2 589.0 L708.8 587.1 L709.4 585.2 L710.1 583.3 L710.7 581.4 L711.3 579.4 L711.9 577.5 L712.5 575.6 L713.1 573.7 L713.8 571.8 L714.4 569.9 L715.0 568.0 L715.7 566.1 L716.3 564.2 L716.9 562.3 L717.6 560.4 L718.2 558.4 L718.9 556.5 L719.5 554.6 L720.1 552.7 L720.8 550.8 L721.4 548.8 L722.1 546.9 L722.7 545.0 L723.4 543.1 L724.1 541.1 L724.7 539.2 L725.4 537.3 L726.0 535.3 L726.7 533.4 L727.4 531.5 L728.1 529.6 L728.8 527.7 L729.6 525.8 L730.3 523.9 L731.1 522.0 L731.9 520.1 L732.8 518.3 L733.7 516.4 L734.6 514.6 L735.6 512.8 L736.6 511.1 L737.7 509.3 L738.8 507.6 L740.0 505.9 L741.2 504.3 L742.5 502.7 L743.8 501.1 L745.2 499.6 L746.7 498.2 L748.2 496.8 L749.7 495.6 L751.3 494.5 L753.0 493.4 L754.7 492.6 L756.5 491.8 L758.3 491.2 L760.1 490.7 L762.0 490.3 L763.8 490.1 L765.7 490.0 L767.6 490.0 L769.4 490.1 L771.3 490.4 L773.1 490.7 L774.9 491.2 L776.6 491.8 L778.3 492.5 L779.9 493.3 L781.6 494.3 L783.1 495.3 L784.7 496.4 L786.2 497.5 L787.7 498.8 L789.1 500.1 L790.6 501.4 L792.0 502.8 L793.4 504.3 L794.9 505.7 L796.3 507.2 L797.7 508.8 L799.1 510.3 L800.5 511.8 L802.0 513.4 L803.5 514.9 L805.0 516.4 L806.5 517.9 L808.0 519.3 L809.6 520.7 L811.2 522.1 L812.8 523.4 L814.5 524.7 L816.2 526.0 L817.9 527.2 L819.6 528.4 L821.4 529.5 L823.2 530.6 L825.0 531.7 L826.8 532.7 L828.6 533.7 L830.5 534.6 L832.4 535.5 L834.2 536.3 L836.1 537.1 L838.1 537.8 L840.0 538.5 L841.9 539.2 L843.9 539.8 L845.8 540.3 L847.8 540.8 L849.8 541.2 L851.7 541.6 L853.7 541.9 L855.7 542.2 L857.7 542.4 L859.7 542.6 L861.6 542.7 L863.6 542.7 L865.6 542.7 L867.6 542.7 L869.5 542.5 L871.5 542.3 L873.4 542.1 L875.4 541.8 L877.3 541.5 L879.2 541.0 L881.2 540.6 L883.1 540.1 L885.0 539.5 L886.8 538.9 L888.7 538.2 L890.5 537.5 L892.4 536.7 L894.2 535.9 L896.0 535.1 L897.8 534.2 L899.5 533.2 L901.2 532.2 L902.9 531.2 L904.6 530.1 L906.3 529.0 L907.9 527.9 L909.5 526.7 L911.1 525.4 L912.7 524.2 L914.2 522.9 L915.7 521.5 L917.2 520.2 L918.6 518.8 L920.0 517.3 L921.3 515.9 L922.7 514.4 L924.0 512.8 L925.2 511.3 L926.4 509.7 L927.6 508.1 L928.8 506.4 L929.9 504.8 L930.9 503.1 L931.9 501.4 L932.9 499.7 L933.8 497.9 L934.7 496.1 L935.5 494.3 L936.3 492.5 L937.0 490.7 L937.7 488.9 L938.4 487.0 L939.0 485.1 L939.5 483.2 L940.0 481.3 L940.4 479.4 L940.8 477.5 L941.2 475.5 L941.5 473.6 L941.8 471.6 L942.0 469.7 L942.2 467.7 L942.3 465.7 L942.4 463.7 L942.4 461.7 L942.4 459.7 L942.4 457.7 L942.3 455.7 L942.2 453.7 L942.0 451.7 L941.8 449.7 L941.6 447.7 L941.3 445.7 L941.0 443.7 L940.6 441.7 L940.2 439.7 L939.8 437.7 L939.3 435.7 L938.8 433.7 L938.3 431.7 L937.7 429.7 L937.1 427.8 L936.5 425.8 L935.8 423.9 L935.1 421.9 L934.3 420.0 L933.5 418.1 L932.7 416.2 L931.9 414.3 L931.0 412.4 L930.1 410.6 L929.2 408.7 L928.2 406.9 L927.2 405.1 L926.2 403.3 L925.2 401.6 L924.1 399.8 L923.0 398.1 L921.9 396.4 L920.7 394.7 L919.5 393.0 L918.3 391.4 L917.1 389.8 L915.8 388.2 L914.5 386.6 L913.2 385.1 L911.9 383.6 L910.6 382.1 L909.2 380.6 L907.9 379.1 L906.5 377.7 L905.1 376.3 L903.7 374.8 L902.3 373.4 L900.9 372.0 L899.5 370.6 L898.0 369.2 L896.6 367.8 L895.2 366.4 L893.8 365.0 L892.3 363.7 L890.9 362.3 L889.5 360.9 L888.1 359.5 L886.7 358.1 L885.4 356.6 L884.0 355.2 L882.7 353.8 L881.3 352.3 L880.0 350.9 L878.7 349.4 L877.5 347.9 L876.2 346.4 L875.0 344.8 L873.8 343.2 L872.6 341.7 L871.5 340.1 L870.4 338.4 L869.3 336.8 L868.2 335.1 L867.2 333.4 L866.2 331.7 L865.2 330.0 L864.2 328.3 L863.3 326.5 L862.4 324.8 L861.5 323.0 L860.6 321.2 L859.8 319.4 L858.9 317.5 L858.1 315.7 L857.4 313.8 L856.6 312.0 L855.9 310.1 L855.2 308.2 L854.5 306.3 L853.8 304.4 L853.2 302.5 L852.6 300.6 L852.0 298.6 L851.4 296.7 L850.9 294.7 L850.3 292.8 L849.8 290.8 L849.3 288.9 L848.9 286.9 L848.4 284.9 L848.0 282.9 L847.6 281.0 L847.2 279.0 L846.8 277.0 L846.5 275.0 L846.2 273.0 L845.9 271.0 L845.6 269.0 L845.3 267.1 L845.0 265.1 L844.8 263.1 L844.6 261.1 L844.4 259.1 L844.2 257.1 L844.0 255.1 L843.8 253.1 L843.7 251.1 L843.5 249.1 L843.4 247.1 L843.3 245.1 L843.1 243.1 L843.0 241.1 L842.9 239.1 L842.9 237.1 L842.8 235.1 L842.7 233.1 L842.7 231.1 L842.6 229.1 L842.5 227.1 L842.5 225.1 L842.5 223.1 L842.4 221.1 L842.4 219.0 L842.3 217.0 L842.3 215.0 L842.3 213.0 L842.3 211.0 L842.2 209.0 L842.2 207.0 L842.2 205.0 L842.1 203.0 L842.1 201.0 L842.1 199.0 L842.0 197.0 L842.0 195.0 L842.0 192.9 L841.9 190.9 L841.9 188.9 L841.8 186.9 L841.7 184.9 L841.6 182.9 L841.6 180.9 L841.5 178.9 L841.4 176.9 L841.3 174.9 L841.1 172.9 L841.0 170.9 L840.9 168.9 L840.7 166.9 L840.5 164.9 L840.4 162.9 L840.2 160.9 L840.0 158.9 L839.8 156.9 L839.6 154.9 L839.3 152.9 L839.1 150.9 L838.8 148.9 L838.6 146.9 L838.3 144.9 L838.0 142.9 L837.7 140.9 L837.4 139.0 L837.1 137.0 L836.8 135.0 L836.4 133.0 L836.1 131.0 L835.7 129.0 L835.4 127.1 L835.0 125.1 L834.6 123.1 L834.2 121.2 L833.8 119.2 L833.3 117.2 L832.9 115.3 L832.4 113.3 L832.0 111.4 L831.5 109.4 L831.0 107.5 L830.5 105.5 L830.0 103.6 L829.5 101.6 L829.0 99.7 L828.5 97.8 L827.9 95.8 L827.3 93.9 L826.8 92.0 L826.2 90.1 L825.6 88.1 L825.0 86.2 L824.4 84.3 L823.7 82.4 L823.1 80.5 L822.5 78.6 L821.8 76.7 L821.1 74.8 L820.4 72.9 L819.7 71.1 L819.0 69.2 L818.3 67.3 L817.6 65.4 L816.9 63.6 L816.1 61.7 L815.3 59.9 L814.6 58.0 L813.8 56.2 L813.0 54.3 L812.2 52.5 L811.4 50.7 L810.5 48.8 L809.7 47.0 L808.8 45.2 L808.0 43.4 L807.1 41.6 L806.2 39.8 L805.3 38.0 L804.4 36.2 L803.5 34.4 L802.6 32.6 L801.6 30.9 L800.7 29.1 L799.7 27.3 L798.7 25.6 L797.7 23.8 L796.7 22.1 L795.7 20.4 L794.7 18.6 L793.7 16.9 L792.6 15.2 L791.5 13.5 L790.5 11.8 L789.4 10.1 L788.3 8.4 L787.2 6.7 L786.1 5.0 L785.0 3.4 L783.8 1.7 L782.7 0.0 L731.3 -40.0 Z"/>
<path fill="#00FF00" stroke="#000" stroke-width="1.1" d="M557.0 -40.0 L504.5 0.1 L503.3 1.7 L502.2 3.3 L501.0 5.0 L499.8 6.6 L498.7 8.2 L497.5 9.9 L496.4 11.5 L495.3 13.2 L494.2 14.9 L493.1 16.6 L492.1 18.3 L491.0 20.0 L490.0 21.7 L489.0 23.4 L487.9 25.1 L486.9 26.9 L485.9 28.6 L485.0 30.4 L484.0 32.1 L483.1 33.9 L482.1 35.7 L481.2 37.5 L480.3 39.2 L479.4 41.0 L478.5 42.8 L477.6 44.7 L476.8 46.5 L475.9 48.3 L475.1 50.1 L474.3 52.0 L473.4 53.8 L472.6 55.7 L471.9 57.5 L471.1 59.4 L470.3 61.2 L469.6 63.1 L468.9 65.0 L468.1 66.9 L467.4 68.8 L466.7 70.7 L466.0 72.6 L465.4 74.5 L464.7 76.4 L464.1 78.3 L463.4 80.2 L462.8 82.1 L462.2 84.0 L461.6 86.0 L461.0 87.9 L460.5 89.8 L459.9 91.8 L459.4 93.7 L458.8 95.7 L458.3 97.6 L457.8 99.6 L457.3 101.5 L456.8 103.5 L456.4 105.4 L455.9 107.4 L455.5 109.4 L455.0 111.3 L454.6 113.3 L454.2 115.3 L453.8 117.2 L453.4 119.2 L453.1 121.2 L452.7 123.2 L452.4 125.2 L452.0 127.1 L451.7 129.1 L451.4 131.1 L451.1 133.1 L450.8 135.1 L450.5 137.1 L450.3 139.0 L450.0 141.0 L449.8 143.0 L449.6 145.0 L449.4 147.0 L449.2 149.0 L449.0 151.0 L448.8 153.0 L448.7 154.9 L448.5 156.9 L448.4 158.9 L448.2 160.9 L448.1 162.9 L448.0 164.9 L447.9 166.8 L447.8 168.8 L447.8 170.8 L447.7 172.8 L447.7 174.8 L447.6 176.8 L447.6 178.7 L447.5 180.7 L447.5 182.7 L447.5 184.7 L447.5 186.7 L447.5 188.7 L447.5 190.6 L447.5 192.6 L447.5 194.6 L447.6 196.6 L447.6 198.6 L447.6 200.6 L447.7 202.6 L447.7 204.6 L447.8 206.5 L447.8 208.5 L447.9 210.5 L448.0 212.5 L448.0 214.5 L448.1 216.5 L448.2 218.5 L448.2 220.5 L448.3 222.5 L448.4 224.5 L448.5 226.5 L448.6 228.5 L448.6 230.5 L448.7 232.6 L448.8 234.6 L448.9 236.6 L449.0 238.6 L449.1 240.6 L449.1 242.6 L449.2 244.6 L449.3 246.7 L449.4 248.7 L449.4 250.7 L449.5 252.8 L449.6 254.8 L449.7 256.8 L449.7 258.9 L449.8 260.9 L449.8 262.9 L449.9 265.0 L449.9 267.0 L450.0 269.1 L450.0 271.1 L450.0 273.2 L450.1 275.2 L450.1 277.3 L450.1 279.4 L450.1 281.4 L450.1 283.5 L450.1 285.6 L450.1 287.6 L450.0 289.7 L450.0 291.8 L449.9 293.8 L449.8 295.9 L449.7 297.9 L449.6 300.0 L449.4 302.0 L449.2 304.0 L449.0 306.0 L448.8 308.0 L448.5 310.0 L448.2 311.9 L447.9 313.9 L447.5 315.8 L447.1 317.7 L446.7 319.6 L446.2 321.5 L445.7 323.4 L445.1 325.2 L444.5 327.0 L443.9 328.8 L443.2 330.5 L442.4 332.2 L441.7 333.9 L440.8 335.6 L439.9 337.3 L439.0 338.9 L437.9 340.4 L436.9 342.0 L435.7 343.5 L434.6 344.9 L433.3 346.4 L432.0 347.8 L430.6 349.1 L429.2 350.5 L427.8 351.8 L426.3 353.1 L424.7 354.3 L423.1 355.6 L421.5 356.8 L419.9 358.0 L418.2 359.1 L416.5 360.3 L414.7 361.5 L413.0 362.6 L411.2 363.7 L409.4 364.9 L407.6 366.0 L405.8 367.1 L404.0 368.2 L402.1 369.3 L400.3 370.4 L398.5 371.5 L396.7 372.7 L394.9 373.8 L393.1 374.9 L391.3 376.1 L389.6 377.3 L387.8 378.4 L386.1 379.6 L384.4 380.9 L382.8 382.1 L381.1 383.4 L379.5 384.7 L378.0 386.0 L376.5 387.3 L375.0 388.7 L373.6 390.1 L372.2 391.5 L370.9 393.0 L369.7 394.5 L368.4 396.0 L367.3 397.6 L366.1 399.2 L365.0 400.8 L363.9 402.4 L362.9 404.1 L361.9 405.8 L360.9 407.5 L359.9 409.2 L359.0 410.9 L358.1 412.7 L357.1 414.5 L356.3 416.2 L355.4 418.0 L354.5 419.8 L353.7 421.7 L352.9 423.5 L352.1 425.3 L351.4 427.2 L350.7 429.0 L350.0 430.9 L349.3 432.8 L348.7 434.7 L348.1 436.6 L347.5 438.5 L347.0 440.4 L346.5 442.4 L346.0 444.3 L345.6 446.2 L345.2 448.2 L344.9 450.1 L344.6 452.1 L344.4 454.1 L344.2 456.0 L344.0 458.0 L343.9 460.0 L343.9 462.0 L343.9 464.0 L343.9 466.0 L344.0 467.9 L344.2 469.9 L344.4 471.9 L344.7 473.9 L345.0 475.9 L345.4 477.9 L345.9 479.9 L346.4 481.9 L346.9 483.9 L347.5 485.8 L348.2 487.8 L348.9 489.7 L349.6 491.6 L350.4 493.5 L351.3 495.4 L352.2 497.2 L353.1 499.0 L354.1 500.8 L355.2 502.6 L356.3 504.3 L357.4 506.0 L358.6 507.7 L359.8 509.3 L361.1 510.9 L362.4 512.5 L363.7 514.0 L365.1 515.5 L366.5 516.9 L368.0 518.3 L369.5 519.6 L371.1 520.9 L372.6 522.1 L374.3 523.2 L375.9 524.3 L377.6 525.4 L379.3 526.4 L381.1 527.3 L382.9 528.2 L384.7 529.0 L386.5 529.7 L388.4 530.4 L390.3 531.1 L392.2 531.6 L394.1 532.2 L396.0 532.6 L398.0 533.0 L399.9 533.4 L401.9 533.7 L403.9 533.9 L405.9 534.1 L407.9 534.2 L409.9 534.3 L411.9 534.3 L413.9 534.2 L415.8 534.1 L417.8 533.9 L419.8 533.7 L421.8 533.4 L423.7 533.1 L425.7 532.7 L427.6 532.2 L429.6 531.7 L431.5 531.2 L433.3 530.5 L435.2 529.9 L437.0 529.1 L438.9 528.3 L440.7 527.5 L442.4 526.6 L444.2 525.6 L445.9 524.6 L447.6 523.6 L449.2 522.5 L450.8 521.3 L452.4 520.1 L454.0 518.9 L455.5 517.6 L457.0 516.3 L458.5 514.9 L460.0 513.5 L461.4 512.0 L462.7 510.5 L464.0 509.0 L465.3 507.4 L466.6 505.8 L467.8 504.2 L469.0 502.5 L470.1 500.8 L471.2 499.1 L472.2 497.3 L473.2 495.5 L474.2 493.7 L475.1 491.8 L476.0 489.9 L476.8 488.0 L477.6 486.1 L478.3 484.2 L479.0 482.2 L479.7 480.2 L480.3 478.2 L480.9 476.2 L481.5 474.2 L482.1 472.2 L482.7 470.2 L483.3 468.2 L483.9 466.3 L484.5 464.3 L485.1 462.4 L485.8 460.5 L486.5 458.6 L487.2 456.7 L488.0 454.9 L488.8 453.1 L489.7 451.3 L490.7 449.6 L491.7 448.0 L492.8 446.4 L493.9 444.9 L495.2 443.4 L496.6 442.0 L498.0 440.6 L499.5 439.4 L501.1 438.2 L502.7 437.2 L504.4 436.3 L506.2 435.6 L508.0 435.0 L509.8 434.6 L511.6 434.3 L513.4 434.3 L515.3 434.5 L517.1 434.8 L518.9 435.2 L520.6 435.8 L522.3 436.5 L524.0 437.3 L525.6 438.2 L527.2 439.2 L528.8 440.3 L530.3 441.5 L531.8 442.8 L533.2 444.2 L534.6 445.6 L536.0 447.1 L537.3 448.7 L538.6 450.3 L539.9 452.0 L541.1 453.7 L542.3 455.5 L543.5 457.3 L544.6 459.1 L545.8 461.0 L546.8 462.9 L547.9 464.8 L548.9 466.7 L549.9 468.6 L550.9 470.5 L551.8 472.4 L552.8 474.3 L553.6 476.2 L554.5 478.1 L555.4 480.0 L556.2 481.9 L557.0 483.8 L557.8 485.7 L558.5 487.6 L559.3 489.4 L560.0 491.3 L560.7 493.2 L561.4 495.1 L562.1 496.9 L562.7 498.8 L563.3 500.7 L564.0 502.6 L564.6 504.4 L565.2 506.3 L565.8 508.2 L566.3 510.1 L566.9 511.9 L567.4 513.8 L568.0 515.7 L568.5 517.6 L569.0 519.4 L569.5 521.3 L570.0 523.2 L570.5 525.1 L571.0 527.0 L571.5 528.9 L572.0 530.8 L572.4 532.6 L572.9 534.5 L573.4 536.4 L573.8 538.3 L574.3 540.3 L574.8 542.2 L575.2 544.1 L575.7 546.0 L576.2 547.9 L576.6 549.8 L577.1 551.8 L577.5 553.7 L578.0 555.6 L578.5 557.6 L578.9 559.5 L579.4 561.4 L579.8 563.4 L580.3 565.3 L580.7 567.3 L581.2 569.2 L581.6 571.2 L582.1 573.1 L582.5 575.1 L583.0 577.1 L583.5 579.0 L583.9 581.0 L584.3 582.9 L584.8 584.9 L585.2 586.9 L585.7 588.9 L586.1 590.8 L586.6 592.8 L587.0 594.8 L587.5 596.7 L587.9 598.7 L588.3 600.7 L588.8 602.7 L589.2 604.7 L589.7 606.6 L590.1 608.6 L590.5 610.6 L591.0 612.6 L591.4 614.6 L591.8 616.6 L592.3 618.5 L592.7 620.5 L593.1 622.5 L593.5 624.5 L594.0 626.5 L594.4 628.5 L594.8 630.4 L595.2 632.4 L595.7 634.4 L596.1 636.4 L596.5 638.4 L596.9 640.4 L597.3 642.3 L597.8 644.3 L598.2 646.3 L598.6 648.3 L599.0 650.2 L599.4 652.2 L599.8 654.2 L600.2 656.2 L600.6 658.1 L601.0 660.1 L601.5 662.1 L601.9 664.0 L602.3 666.0 L602.7 668.0 L603.1 669.9 L603.5 671.9 L603.9 673.8 L604.2 675.8 L604.6 677.7 L605.0 679.7 L605.4 681.6 L605.8 683.6 L606.2 685.5 L606.6 687.4 L607.0 689.4 L607.4 691.3 L607.7 693.2 L608.1 695.2 L608.5 697.1 L608.9 699.0 L609.3 700.9 L616.7 731.0 L664.3 731.0 L671.7 700.9 L672.1 699.0 L672.5 697.1 L672.9 695.2 L673.3 693.2 L673.6 691.3 L674.0 689.4 L674.4 687.4 L674.8 685.5 L675.2 683.6 L675.6 681.6 L676.0 679.7 L676.4 677.7 L676.8 675.8 L677.1 673.8 L677.5 671.9 L677.9 669.9 L678.3 668.0 L678.7 666.0 L679.1 664.0 L679.5 662.1 L680.0 660.1 L680.4 658.1 L680.8 656.2 L681.2 654.2 L681.6 652.2 L682.0 650.2 L682.4 648.3 L682.8 646.3 L683.2 644.3 L683.7 642.3 L684.1 640.4 L684.5 638.4 L684.9 636.4 L685.3 634.4 L685.8 632.4 L686.2 630.4 L686.6 628.5 L687.0 626.5 L687.5 624.5 L687.9 622.5 L688.3 620.5 L688.7 618.5 L689.2 616.6 L689.6 614.6 L690.0 612.6 L690.5 610.6 L690.9 608.6 L691.3 606.6 L691.8 604.7 L692.2 602.7 L692.7 600.7 L693.1 598.7 L693.5 596.7 L694.0 594.8 L694.4 592.8 L694.9 590.8 L695.3 588.9 L695.8 586.9 L696.2 584.9 L696.7 582.9 L697.1 581.0 L697.5 579.0 L698.0 577.1 L698.5 575.1 L698.9 573.1 L699.4 571.2 L699.8 569.2 L700.3 567.3 L700.7 565.3 L701.2 563.4 L701.6 561.4 L702.1 559.5 L702.5 557.6 L703.0 555.6 L703.5 553.7 L703.9 551.8 L704.4 549.8 L704.8 547.9 L705.3 546.0 L705.8 544.1 L706.2 542.2 L706.7 540.3 L707.2 538.3 L707.6 536.4 L708.1 534.5 L708.6 532.6 L709.0 530.8 L709.5 528.9 L710.0 527.0 L710.5 525.1 L711.0 523.2 L711.5 521.3 L712.0 519.4 L712.5 517.6 L713.0 515.7 L713.6 513.8 L714.1 511.9 L714.7 510.1 L715.2 508.2 L715.8 506.3 L716.4 504.4 L717.0 502.6 L717.7 500.7 L718.3 498.8 L718.9 496.9 L719.6 495.1 L720.3 493.2 L721.0 491.3 L721.7 489.4 L722.5 487.6 L723.2 485.7 L724.0 483.8 L724.8 481.9 L725.6 480.0 L726.5 478.1 L727.4 476.2 L728.2 474.3 L729.2 472.4 L730.1 470.5 L731.1 468.6 L732.1 466.7 L733.1 464.8 L734.2 462.9 L735.2 461.0 L736.4 459.1 L737.5 457.3 L738.7 455.5 L739.9 453.7 L741.1 452.0 L742.4 450.3 L743.7 448.7 L745.0 447.1 L746.4 445.6 L747.8 444.2 L749.2 442.8 L750.7 441.5 L752.2 440.3 L753.8 439.2 L755.4 438.2 L757.0 437.3 L758.7 436.5 L760.4 435.8 L762.1 435.2 L763.9 434.8 L765.7 434.5 L767.6 434.3 L769.4 434.3 L771.2 434.6 L773.0 435.0 L774.8 435.6 L776.6 436.3 L778.3 437.2 L779.9 438.2 L781.5 439.4 L783.0 440.6 L784.4 442.0 L785.8 443.4 L787.1 444.9 L788.2 446.4 L789.3 448.0 L790.3 449.6 L791.3 451.3 L792.2 453.1 L793.0 454.9 L793.8 456.7 L794.5 458.6 L795.2 460.5 L795.9 462.4 L796.5 464.3 L797.1 466.3 L797.7 468.2 L798.3 470.2 L798.9 472.2 L799.5 474.2 L800.1 476.2 L800.7 478.2 L801.3 480.2 L802.0 482.2 L802.7 484.2 L803.4 486.1 L804.2 488.0 L805.0 489.9 L805.9 491.8 L806.8 493.7 L807.8 495.5 L808.8 497.3 L809.8 499.1 L810.9 500.8 L812.0 502.5 L813.2 504.2 L814.4 505.8 L815.7 507.4 L817.0 509.0 L818.3 510.5 L819.6 512.0 L821.0 513.5 L822.5 514.9 L824.0 516.3 L825.5 517.6 L827.0 518.9 L828.6 520.1 L830.2 521.3 L831.8 522.5 L833.4 523.6 L835.1 524.6 L836.8 525.6 L838.6 526.6 L840.3 527.5 L842.1 528.3 L844.0 529.1 L845.8 529.9 L847.7 530.5 L849.5 531.2 L851.4 531.7 L853.4 532.2 L855.3 532.7 L857.3 533.1 L859.2 533.4 L861.2 533.7 L863.2 533.9 L865.2 534.1 L867.1 534.2 L869.1 534.3 L871.1 534.3 L873.1 534.2 L875.1 534.1 L877.1 533.9 L879.1 533.7 L881.1 533.4 L883.0 533.0 L885.0 532.6 L886.9 532.2 L888.8 531.6 L890.7 531.1 L892.6 530.4 L894.5 529.7 L896.3 529.0 L898.1 528.2 L899.9 527.3 L901.7 526.4 L903.4 525.4 L905.1 524.3 L906.7 523.2 L908.4 522.1 L909.9 520.9 L911.5 519.6 L913.0 518.3 L914.5 516.9 L915.9 515.5 L917.3 514.0 L918.6 512.5 L919.9 510.9 L921.2 509.3 L922.4 507.7 L923.6 506.0 L924.7 504.3 L925.8 502.6 L926.9 500.8 L927.9 499.0 L928.8 497.2 L929.7 495.4 L930.6 493.5 L931.4 491.6 L932.1 489.7 L932.8 487.8 L933.5 485.8 L934.1 483.9 L934.6 481.9 L935.1 479.9 L935.6 477.9 L936.0 475.9 L936.3 473.9 L936.6 471.9 L936.8 469.9 L937.0 467.9 L937.1 466.0 L937.1 464.0 L937.1 462.0 L937.1 460.0 L937.0 458.0 L936.8 456.0 L936.6 454.1 L936.4 452.1 L936.1 450.1 L935.8 448.2 L935.4 446.2 L935.0 444.3 L934.5 442.4 L934.0 440.4 L933.5 438.5 L932.9 436.6 L932.3 434.7 L931.7 432.8 L931.0 430.9 L930.3 429.0 L929.6 427.2 L928.9 425.3 L928.1 423.5 L927.3 421.7 L926.5 419.8 L925.6 418.0 L924.7 416.2 L923.9 414.5 L922.9 412.7 L922.0 410.9 L921.1 409.2 L920.1 407.5 L919.1 405.8 L918.1 404.1 L917.1 402.4 L916.0 400.8 L914.9 399.2 L913.7 397.6 L912.6 396.0 L911.3 394.5 L910.1 393.0 L908.8 391.5 L907.4 390.1 L906.0 388.7 L904.5 387.3 L903.0 386.0 L901.5 384.7 L899.9 383.4 L898.2 382.1 L896.6 380.9 L894.9 379.6 L893.2 378.4 L891.4 377.3 L889.7 376.1 L887.9 374.9 L886.1 373.8 L884.3 372.7 L882.5 371.5 L880.7 370.4 L878.9 369.3 L877.0 368.2 L875.2 367.1 L873.4 366.0 L871.6 364.9 L869.8 363.7 L868.0 362.6 L866.3 361.5 L864.5 360.3 L862.8 359.1 L861.1 358.0 L859.5 356.8 L857.9 355.6 L856.3 354.3 L854.7 353.1 L853.2 351.8 L851.8 350.5 L850.4 349.1 L849.0 347.8 L847.7 346.4 L846.4 344.9 L845.3 343.5 L844.1 342.0 L843.1 340.4 L842.0 338.9 L841.1 337.3 L840.2 335.6 L839.3 333.9 L838.6 332.2 L837.8 330.5 L837.1 328.8 L836.5 327.0 L835.9 325.2 L835.3 323.4 L834.8 321.5 L834.3 319.6 L833.9 317.7 L833.5 315.8 L833.1 313.9 L832.8 311.9 L832.5 310.0 L832.2 308.0 L832.0 306.0 L831.8 304.0 L831.6 302.0 L831.4 300.0 L831.3 297.9 L831.2 295.9 L831.1 293.8 L831.0 291.8 L831.0 289.7 L830.9 287.6 L830.9 285.6 L830.9 283.5 L830.9 281.4 L830.9 279.4 L830.9 277.3 L830.9 275.2 L831.0 273.2 L831.0 271.1 L831.0 269.1 L831.1 267.0 L831.1 265.0 L831.2 262.9 L831.2 260.9 L831.3 258.9 L831.3 256.8 L831.4 254.8 L831.5 252.8 L831.6 250.7 L831.6 248.7 L831.7 246.7 L831.8 244.6 L831.9 242.6 L831.9 240.6 L832.0 238.6 L832.1 236.6 L832.2 234.6 L832.3 232.6 L832.4 230.5 L832.4 228.5 L832.5 226.5 L832.6 224.5 L832.7 222.5 L832.8 220.5 L832.8 218.5 L832.9 216.5 L833.0 214.5 L833.0 212.5 L833.1 210.5 L833.2 208.5 L833.2 206.5 L833.3 204.6 L833.3 202.6 L833.4 200.6 L833.4 198.6 L833.4 196.6 L833.5 194.6 L833.5 192.6 L833.5 190.6 L833.5 188.7 L833.5 186.7 L833.5 184.7 L833.5 182.7 L833.5 180.7 L833.4 178.7 L833.4 176.8 L833.3 174.8 L833.3 172.8 L833.2 170.8 L833.2 168.8 L833.1 166.8 L833.0 164.9 L832.9 162.9 L832.8 160.9 L832.6 158.9 L832.5 156.9 L832.3 154.9 L832.2 153.0 L832.0 151.0 L831.8 149.0 L831.6 147.0 L831.4 145.0 L831.2 143.0 L831.0 141.0 L830.7 139.0 L830.5 137.1 L830.2 135.1 L829.9 133.1 L829.6 131.1 L829.3 129.1 L829.0 127.1 L828.6 125.2 L828.3 123.2 L827.9 121.2 L827.6 119.2 L827.2 117.2 L826.8 115.3 L826.4 113.3 L826.0 111.3 L825.5 109.4 L825.1 107.4 L824.6 105.4 L824.2 103.5 L823.7 101.5 L823.2 99.6 L822.7 97.6 L822.2 95.7 L821.6 93.7 L821.1 91.8 L820.5 89.8 L820.0 87.9 L819.4 86.0 L818.8 84.0 L818.2 82.1 L817.6 80.2 L816.9 78.3 L816.3 76.4 L815.6 74.5 L815.0 72.6 L814.3 70.7 L813.6 68.8 L812.9 66.9 L812.1 65.0 L811.4 63.1 L810.7 61.2 L809.9 59.4 L809.1 57.5 L808.4 55.7 L807.6 53.8 L806.7 52.0 L805.9 50.1 L805.1 48.3 L804.2 46.5 L803.4 44.7 L802.5 42.8 L801.6 41.0 L800.7 39.2 L799.8 37.5 L798.9 35.7 L797.9 33.9 L797.0 32.1 L796.0 30.4 L795.1 28.6 L794.1 26.9 L793.1 25.1 L792.0 23.4 L791.0 21.7 L790.0 20.0 L788.9 18.3 L787.9 16.6 L786.8 14.9 L785.7 13.2 L784.6 11.5 L783.5 9.9 L782.3 8.2 L781.2 6.6 L780.0 5.0 L778.8 3.3 L777.7 1.7 L776.5 0.1 L724.0 -40.0 Z"/>
<path fill="#FF00FF" stroke="#000" stroke-width="1.1" d="M563.7 -40.0 L511.6 0.0 L510.3 1.7 L509.0 3.3 L507.8 5.0 L506.5 6.6 L505.3 8.3 L504.1 9.9 L502.9 11.6 L501.8 13.3 L500.6 15.0 L499.5 16.7 L498.4 18.4 L497.3 20.1 L496.2 21.9 L495.1 23.6 L494.1 25.3 L493.0 27.1 L492.0 28.8 L491.0 30.6 L490.0 32.4 L489.1 34.1 L488.1 35.9 L487.2 37.7 L486.3 39.5 L485.4 41.3 L484.5 43.1 L483.6 44.9 L482.8 46.7 L481.9 48.5 L481.1 50.3 L480.3 52.1 L479.5 54.0 L478.7 55.8 L477.9 57.7 L477.2 59.5 L476.5 61.4 L475.7 63.2 L475.0 65.1 L474.4 67.0 L473.7 68.8 L473.0 70.7 L472.4 72.6 L471.7 74.5 L471.1 76.4 L470.5 78.3 L469.9 80.2 L469.4 82.1 L468.8 84.0 L468.3 85.9 L467.7 87.8 L467.2 89.7 L466.7 91.7 L466.2 93.6 L465.7 95.5 L465.3 97.5 L464.8 99.4 L464.4 101.3 L464.0 103.3 L463.6 105.2 L463.2 107.2 L462.8 109.1 L462.4 111.1 L462.1 113.1 L461.7 115.0 L461.4 117.0 L461.1 119.0 L460.8 120.9 L460.5 122.9 L460.2 124.9 L459.9 126.9 L459.7 128.8 L459.4 130.8 L459.2 132.8 L459.0 134.8 L458.8 136.8 L458.6 138.8 L458.4 140.8 L458.2 142.8 L458.0 144.8 L457.9 146.8 L457.8 148.8 L457.6 150.8 L457.5 152.8 L457.4 154.8 L457.3 156.8 L457.2 158.8 L457.2 160.8 L457.1 162.8 L457.1 164.8 L457.0 166.8 L457.0 168.8 L457.0 170.8 L457.0 172.8 L457.0 174.8 L457.0 176.9 L457.0 178.9 L457.1 180.9 L457.1 182.9 L457.2 184.9 L457.3 186.9 L457.3 188.9 L457.4 190.9 L457.5 192.9 L457.6 194.9 L457.8 196.9 L457.9 199.0 L458.0 201.0 L458.2 203.0 L458.3 205.0 L458.5 207.0 L458.7 209.0 L458.9 211.0 L459.0 213.0 L459.3 215.0 L459.5 217.0 L459.7 219.0 L459.9 221.0 L460.2 223.0 L460.4 225.0 L460.7 227.0 L460.9 229.0 L461.2 231.0 L461.5 233.0 L461.8 235.0 L462.1 237.0 L462.4 238.9 L462.7 240.9 L463.0 242.9 L463.4 244.9 L463.7 246.9 L464.1 248.9 L464.4 250.9 L464.8 252.8 L465.2 254.8 L465.5 256.8 L465.9 258.8 L466.3 260.7 L466.7 262.7 L467.1 264.7 L467.6 266.6 L468.0 268.6 L468.4 270.6 L468.9 272.5 L469.3 274.5 L469.8 276.5 L470.2 278.4 L470.7 280.4 L471.2 282.3 L471.7 284.3 L472.2 286.2 L472.7 288.2 L473.2 290.1 L473.7 292.0 L474.3 294.0 L474.8 295.9 L475.4 297.8 L475.9 299.7 L476.5 301.6 L477.1 303.5 L477.7 305.4 L478.4 307.3 L479.0 309.2 L479.7 311.1 L480.4 312.9 L481.1 314.8 L481.8 316.6 L482.5 318.5 L483.3 320.3 L484.0 322.1 L484.8 323.9 L485.6 325.7 L486.5 327.5 L487.3 329.3 L488.2 331.0 L489.1 332.8 L490.0 334.5 L491.0 336.2 L491.9 337.9 L492.9 339.6 L494.0 341.3 L495.0 343.0 L496.1 344.6 L497.2 346.3 L498.3 347.9 L499.5 349.5 L500.7 351.1 L501.9 352.6 L503.1 354.2 L504.4 355.8 L505.6 357.3 L506.9 358.8 L508.2 360.4 L509.5 361.9 L510.9 363.4 L512.2 364.9 L513.6 366.4 L515.0 367.9 L516.4 369.3 L517.7 370.8 L519.1 372.3 L520.5 373.8 L521.9 375.2 L523.4 376.7 L524.8 378.2 L526.2 379.6 L527.6 381.1 L529.0 382.6 L530.4 384.1 L531.8 385.5 L533.1 387.0 L534.5 388.5 L535.9 390.0 L537.2 391.5 L538.6 393.0 L539.9 394.5 L541.2 396.1 L542.5 397.6 L543.8 399.2 L545.1 400.7 L546.3 402.3 L547.5 403.9 L548.7 405.5 L549.9 407.1 L551.0 408.7 L552.1 410.4 L553.2 412.1 L554.3 413.7 L555.3 415.4 L556.3 417.2 L557.2 418.9 L558.1 420.7 L559.0 422.5 L559.9 424.3 L560.7 426.1 L561.5 427.9 L562.2 429.8 L562.9 431.7 L563.6 433.6 L564.3 435.5 L565.0 437.4 L565.6 439.3 L566.3 441.2 L566.9 443.1 L567.5 445.1 L568.1 447.0 L568.7 448.9 L569.3 450.9 L569.9 452.8 L570.4 454.8 L571.0 456.7 L571.6 458.7 L572.1 460.6 L572.7 462.6 L573.2 464.5 L573.8 466.5 L574.3 468.4 L574.8 470.4 L575.3 472.3 L575.9 474.2 L576.4 476.2 L576.9 478.1 L577.4 480.1 L577.9 482.0 L578.4 483.9 L578.9 485.9 L579.4 487.8 L579.9 489.8 L580.3 491.7 L580.8 493.6 L581.3 495.6 L581.7 497.5 L582.2 499.5 L582.6 501.4 L583.1 503.4 L583.5 505.3 L584.0 507.3 L584.4 509.2 L584.8 511.2 L585.2 513.1 L585.7 515.1 L586.1 517.0 L586.5 519.0 L586.9 521.0 L587.3 522.9 L587.7 524.9 L588.1 526.8 L588.4 528.8 L588.8 530.8 L589.2 532.7 L589.6 534.7 L589.9 536.7 L590.3 538.6 L590.7 540.6 L591.0 542.6 L591.4 544.5 L591.7 546.5 L592.1 548.5 L592.4 550.5 L592.8 552.4 L593.1 554.4 L593.5 556.4 L593.8 558.4 L594.1 560.3 L594.4 562.3 L594.8 564.3 L595.1 566.3 L595.4 568.3 L595.7 570.2 L596.1 572.2 L596.4 574.2 L596.7 576.2 L597.0 578.2 L597.3 580.1 L597.6 582.1 L597.9 584.1 L598.2 586.1 L598.5 588.1 L598.8 590.0 L599.1 592.0 L599.4 594.0 L599.7 596.0 L600.0 598.0 L600.3 600.0 L600.6 602.0 L600.9 603.9 L601.2 605.9 L601.5 607.9 L601.8 609.9 L602.1 611.9 L602.4 613.9 L602.7 615.9 L602.9 617.8 L603.2 619.8 L603.5 621.8 L603.8 623.8 L604.1 625.8 L604.4 627.8 L604.7 629.8 L605.0 631.7 L605.3 633.7 L605.6 635.7 L605.9 637.7 L606.2 639.7 L606.4 641.7 L606.7 643.7 L607.0 645.6 L607.3 647.6 L607.6 649.6 L607.9 651.6 L608.2 653.6 L608.5 655.5 L608.8 657.5 L609.1 659.5 L609.5 661.5 L609.8 663.5 L610.1 665.5 L610.4 667.4 L610.7 669.4 L611.0 671.4 L611.3 673.4 L611.7 675.3 L612.0 677.3 L612.3 679.3 L612.6 681.3 L613.0 683.2 L613.3 685.2 L613.6 687.2 L614.0 689.2 L614.3 691.1 L614.7 693.1 L615.0 695.1 L615.4 697.0 L615.7 699.0 L616.1 701.0 L621.3 731.0 L659.7 731.0 L664.9 701.0 L665.3 699.0 L665.6 697.0 L666.0 695.1 L666.3 693.1 L666.7 691.1 L667.0 689.2 L667.4 687.2 L667.7 685.2 L668.0 683.2 L668.4 681.3 L668.7 679.3 L669.0 677.3 L669.3 675.3 L669.7 673.4 L670.0 671.4 L670.3 669.4 L670.6 667.4 L670.9 665.5 L671.2 663.5 L671.5 661.5 L671.9 659.5 L672.2 657.5 L672.5 655.5 L672.8 653.6 L673.1 651.6 L673.4 649.6 L673.7 647.6 L674.0 645.6 L674.3 643.7 L674.6 641.7 L674.8 639.7 L675.1 637.7 L675.4 635.7 L675.7 633.7 L676.0 631.7 L676.3 629.8 L676.6 627.8 L676.9 625.8 L677.2 623.8 L677.5 621.8 L677.8 619.8 L678.1 617.8 L678.3 615.9 L678.6 613.9 L678.9 611.9 L679.2 609.9 L679.5 607.9 L679.8 605.9 L680.1 603.9 L680.4 602.0 L680.7 600.0 L681.0 598.0 L681.3 596.0 L681.6 594.0 L681.9 592.0 L682.2 590.0 L682.5 588.1 L682.8 586.1 L683.1 584.1 L683.4 582.1 L683.7 580.1 L684.0 578.2 L684.3 576.2 L684.6 574.2 L684.9 572.2 L685.3 570.2 L685.6 568.3 L685.9 566.3 L686.2 564.3 L686.6 562.3 L686.9 560.3 L687.2 558.4 L687.5 556.4 L687.9 554.4 L688.2 552.4 L688.6 550.5 L688.9 548.5 L689.3 546.5 L689.6 544.5 L690.0 542.6 L690.3 540.6 L690.7 538.6 L691.1 536.7 L691.4 534.7 L691.8 532.7 L692.2 530.8 L692.6 528.8 L692.9 526.8 L693.3 524.9 L693.7 522.9 L694.1 521.0 L694.5 519.0 L694.9 517.0 L695.3 515.1 L695.8 513.1 L696.2 511.2 L696.6 509.2 L697.0 507.3 L697.5 505.3 L697.9 503.4 L698.4 501.4 L698.8 499.5 L699.3 497.5 L699.7 495.6 L700.2 493.6 L700.7 491.7 L701.1 489.8 L701.6 487.8 L702.1 485.9 L702.6 483.9 L703.1 482.0 L703.6 480.1 L704.1 478.1 L704.6 476.2 L705.1 474.2 L705.7 472.3 L706.2 470.4 L706.7 468.4 L707.2 466.5 L707.8 464.5 L708.3 462.6 L708.9 460.6 L709.4 458.7 L710.0 456.7 L710.6 454.8 L711.1 452.8 L711.7 450.9 L712.3 448.9 L712.9 447.0 L713.5 445.1 L714.1 443.1 L714.7 441.2 L715.4 439.3 L716.0 437.4 L716.7 435.5 L717.4 433.6 L718.1 431.7 L718.8 429.8 L719.5 427.9 L720.3 426.1 L721.1 424.3 L722.0 422.5 L722.9 420.7 L723.8 418.9 L724.7 417.2 L725.7 415.4 L726.7 413.7 L727.8 412.1 L728.9 410.4 L730.0 408.7 L731.1 407.1 L732.3 405.5 L733.5 403.9 L734.7 402.3 L735.9 400.7 L737.2 399.2 L738.5 397.6 L739.8 396.1 L741.1 394.5 L742.4 393.0 L743.8 391.5 L745.1 390.0 L746.5 388.5 L747.9 387.0 L749.2 385.5 L750.6 384.1 L752.0 382.6 L753.4 381.1 L754.8 379.6 L756.2 378.2 L757.6 376.7 L759.1 375.2 L760.5 373.8 L761.9 372.3 L763.3 370.8 L764.6 369.3 L766.0 367.9 L767.4 366.4 L768.8 364.9 L770.1 363.4 L771.5 361.9 L772.8 360.4 L774.1 358.8 L775.4 357.3 L776.6 355.8 L777.9 354.2 L779.1 352.6 L780.3 351.1 L781.5 349.5 L782.7 347.9 L783.8 346.3 L784.9 344.6 L786.0 343.0 L787.0 341.3 L788.1 339.6 L789.1 337.9 L790.0 336.2 L791.0 334.5 L791.9 332.8 L792.8 331.0 L793.7 329.3 L794.5 327.5 L795.4 325.7 L796.2 323.9 L797.0 322.1 L797.7 320.3 L798.5 318.5 L799.2 316.6 L799.9 314.8 L800.6 312.9 L801.3 311.1 L802.0 309.2 L802.6 307.3 L803.3 305.4 L803.9 303.5 L804.5 301.6 L805.1 299.7 L805.6 297.8 L806.2 295.9 L806.7 294.0 L807.3 292.0 L807.8 290.1 L808.3 288.2 L808.8 286.2 L809.3 284.3 L809.8 282.3 L810.3 280.4 L810.8 278.4 L811.2 276.5 L811.7 274.5 L812.1 272.5 L812.6 270.6 L813.0 268.6 L813.4 266.6 L813.9 264.7 L814.3 262.7 L814.7 260.7 L815.1 258.8 L815.5 256.8 L815.8 254.8 L816.2 252.8 L816.6 250.9 L816.9 248.9 L817.3 246.9 L817.6 244.9 L818.0 242.9 L818.3 240.9 L818.6 238.9 L818.9 237.0 L819.2 235.0 L819.5 233.0 L819.8 231.0 L820.1 229.0 L820.3 227.0 L820.6 225.0 L820.8 223.0 L821.1 221.0 L821.3 219.0 L821.5 217.0 L821.7 215.0 L822.0 213.0 L822.1 211.0 L822.3 209.0 L822.5 207.0 L822.7 205.0 L822.8 203.0 L823.0 201.0 L823.1 199.0 L823.2 196.9 L823.4 194.9 L823.5 192.9 L823.6 190.9 L823.7 188.9 L823.7 186.9 L823.8 184.9 L823.9 182.9 L823.9 180.9 L824.0 178.9 L824.0 176.9 L824.0 174.8 L824.0 172.8 L824.0 170.8 L824.0 168.8 L824.0 166.8 L823.9 164.8 L823.9 162.8 L823.8 160.8 L823.8 158.8 L823.7 156.8 L823.6 154.8 L823.5 152.8 L823.4 150.8 L823.2 148.8 L823.1 146.8 L823.0 144.8 L822.8 142.8 L822.6 140.8 L822.4 138.8 L822.2 136.8 L822.0 134.8 L821.8 132.8 L821.6 130.8 L821.3 128.8 L821.1 126.9 L820.8 124.9 L820.5 122.9 L820.2 120.9 L819.9 119.0 L819.6 117.0 L819.3 115.0 L818.9 113.1 L818.6 111.1 L818.2 109.1 L817.8 107.2 L817.4 105.2 L817.0 103.3 L816.6 101.3 L816.2 99.4 L815.7 97.5 L815.3 95.5 L814.8 93.6 L814.3 91.7 L813.8 89.7 L813.3 87.8 L812.7 85.9 L812.2 84.0 L811.6 82.1 L811.1 80.2 L810.5 78.3 L809.9 76.4 L809.3 74.5 L808.6 72.6 L808.0 70.7 L807.3 68.8 L806.6 67.0 L806.0 65.1 L805.3 63.2 L804.5 61.4 L803.8 59.5 L803.1 57.7 L802.3 55.8 L801.5 54.0 L800.7 52.1 L799.9 50.3 L799.1 48.5 L798.2 46.7 L797.4 44.9 L796.5 43.1 L795.6 41.3 L794.7 39.5 L793.8 37.7 L792.9 35.9 L791.9 34.1 L791.0 32.4 L790.0 30.6 L789.0 28.8 L788.0 27.1 L786.9 25.3 L785.9 23.6 L784.8 21.9 L783.7 20.1 L782.6 18.4 L781.5 16.7 L780.4 15.0 L779.2 13.3 L778.1 11.6 L776.9 9.9 L775.7 8.3 L774.5 6.6 L773.2 5.0 L772.0 3.3 L770.7 1.7 L769.4 0.0 L717.3 -40.0 Z"/>
<path fill="#00FFFF" stroke="#000" stroke-width="1.1" d="M573.2 -40.0 L519.4 0.3 L518.1 1.8 L516.9 3.4 L515.7 5.0 L514.5 6.6 L513.3 8.2 L512.2 9.8 L511.0 11.4 L509.9 13.1 L508.8 14.7 L507.6 16.4 L506.6 18.0 L505.5 19.7 L504.4 21.4 L503.3 23.1 L502.3 24.8 L501.3 26.5 L500.3 28.2 L499.3 30.0 L498.3 31.7 L497.3 33.5 L496.3 35.2 L495.4 37.0 L494.5 38.8 L493.6 40.6 L492.7 42.4 L491.8 44.2 L490.9 46.0 L490.0 47.8 L489.2 49.6 L488.4 51.4 L487.6 53.3 L486.7 55.1 L486.0 57.0 L485.2 58.8 L484.4 60.7 L483.7 62.6 L483.0 64.4 L482.3 66.3 L481.6 68.2 L480.9 70.1 L480.2 72.0 L479.5 73.9 L478.9 75.8 L478.3 77.8 L477.7 79.7 L477.1 81.6 L476.5 83.5 L475.9 85.5 L475.4 87.4 L474.9 89.4 L474.3 91.3 L473.8 93.3 L473.3 95.2 L472.9 97.2 L472.4 99.1 L472.0 101.1 L471.5 103.1 L471.1 105.1 L470.7 107.0 L470.4 109.0 L470.0 111.0 L469.6 113.0 L469.3 115.0 L469.0 117.0 L468.7 118.9 L468.4 120.9 L468.1 122.9 L467.9 124.9 L467.6 126.9 L467.4 128.9 L467.2 130.9 L467.0 132.9 L466.9 134.9 L466.7 136.9 L466.6 138.9 L466.4 141.0 L466.3 143.0 L466.2 145.0 L466.2 147.0 L466.1 149.0 L466.0 151.0 L466.0 153.0 L466.0 155.0 L466.0 157.0 L466.0 159.0 L466.1 161.0 L466.1 163.0 L466.2 165.0 L466.3 167.0 L466.4 169.0 L466.5 171.0 L466.7 173.0 L466.8 175.0 L467.0 177.0 L467.2 178.9 L467.4 180.9 L467.6 182.9 L467.8 184.9 L468.1 186.9 L468.4 188.8 L468.7 190.8 L469.0 192.8 L469.3 194.7 L469.6 196.7 L470.0 198.6 L470.4 200.6 L470.8 202.5 L471.2 204.5 L471.6 206.4 L472.0 208.4 L472.5 210.3 L473.0 212.2 L473.5 214.2 L474.0 216.1 L474.5 218.0 L475.0 219.9 L475.6 221.8 L476.1 223.7 L476.7 225.6 L477.3 227.5 L477.9 229.4 L478.6 231.3 L479.2 233.2 L479.9 235.1 L480.5 237.0 L481.2 238.8 L481.9 240.7 L482.6 242.6 L483.3 244.4 L484.1 246.3 L484.8 248.1 L485.6 250.0 L486.3 251.8 L487.1 253.7 L487.9 255.5 L488.7 257.3 L489.6 259.2 L490.4 261.0 L491.3 262.8 L492.1 264.6 L493.0 266.4 L493.9 268.2 L494.8 270.0 L495.7 271.8 L496.6 273.6 L497.5 275.4 L498.4 277.2 L499.4 279.0 L500.4 280.7 L501.3 282.5 L502.3 284.3 L503.3 286.0 L504.3 287.8 L505.3 289.5 L506.3 291.3 L507.4 293.0 L508.4 294.7 L509.4 296.4 L510.5 298.2 L511.6 299.9 L512.6 301.6 L513.7 303.3 L514.8 305.0 L515.9 306.7 L517.0 308.4 L518.1 310.1 L519.3 311.8 L520.4 313.4 L521.5 315.1 L522.7 316.8 L523.8 318.4 L525.0 320.1 L526.1 321.7 L527.3 323.4 L528.5 325.0 L529.6 326.7 L530.8 328.3 L532.0 330.0 L533.2 331.6 L534.3 333.2 L535.5 334.9 L536.7 336.5 L537.9 338.1 L539.1 339.7 L540.3 341.4 L541.4 343.0 L542.6 344.6 L543.8 346.3 L545.0 347.9 L546.1 349.5 L547.3 351.2 L548.5 352.8 L549.6 354.4 L550.8 356.1 L551.9 357.7 L553.0 359.4 L554.2 361.0 L555.3 362.6 L556.4 364.3 L557.5 366.0 L558.6 367.6 L559.7 369.3 L560.8 370.9 L561.8 372.6 L562.9 374.3 L563.9 376.0 L565.0 377.7 L566.0 379.4 L567.0 381.1 L568.0 382.8 L569.0 384.5 L569.9 386.2 L570.9 387.9 L571.8 389.7 L572.7 391.4 L573.6 393.2 L574.5 394.9 L575.4 396.7 L576.2 398.5 L577.1 400.3 L577.9 402.1 L578.7 403.9 L579.5 405.7 L580.2 407.5 L580.9 409.4 L581.7 411.2 L582.4 413.1 L583.0 414.9 L583.7 416.8 L584.3 418.7 L585.0 420.6 L585.6 422.5 L586.2 424.4 L586.8 426.3 L587.3 428.2 L587.9 430.1 L588.4 432.1 L588.9 434.0 L589.4 435.9 L589.9 437.9 L590.4 439.8 L590.9 441.8 L591.3 443.8 L591.8 445.7 L592.2 447.7 L592.6 449.7 L593.0 451.7 L593.4 453.7 L593.8 455.7 L594.2 457.7 L594.6 459.7 L594.9 461.7 L595.3 463.7 L595.6 465.7 L596.0 467.7 L596.3 469.7 L596.6 471.7 L596.9 473.7 L597.2 475.7 L597.5 477.7 L597.8 479.8 L598.1 481.8 L598.4 483.8 L598.7 485.8 L599.0 487.8 L599.3 489.9 L599.6 491.9 L599.8 493.9 L600.1 495.9 L600.4 497.9 L600.6 499.9 L600.9 501.9 L601.2 503.9 L601.4 505.9 L601.7 508.0 L601.9 510.0 L602.2 512.0 L602.5 514.0 L602.7 516.0 L603.0 518.0 L603.2 520.0 L603.5 522.0 L603.7 524.0 L603.9 526.0 L604.2 527.9 L604.4 529.9 L604.7 531.9 L604.9 533.9 L605.1 535.9 L605.4 537.9 L605.6 539.9 L605.8 541.9 L606.1 543.9 L606.3 545.9 L606.5 547.8 L606.8 549.8 L607.0 551.8 L607.2 553.8 L607.4 555.8 L607.7 557.8 L607.9 559.8 L608.1 561.7 L608.3 563.7 L608.5 565.7 L608.8 567.7 L609.0 569.7 L609.2 571.6 L609.4 573.6 L609.6 575.6 L609.8 577.6 L610.1 579.6 L610.3 581.5 L610.5 583.5 L610.7 585.5 L610.9 587.5 L611.1 589.5 L611.3 591.4 L611.5 593.4 L611.7 595.4 L612.0 597.4 L612.2 599.4 L612.4 601.3 L612.6 603.3 L612.8 605.3 L613.0 607.3 L613.2 609.3 L613.4 611.2 L613.6 613.2 L613.8 615.2 L614.0 617.2 L614.2 619.2 L614.4 621.2 L614.6 623.1 L614.8 625.1 L615.0 627.1 L615.2 629.1 L615.5 631.1 L615.7 633.1 L615.9 635.0 L616.1 637.0 L616.3 639.0 L616.5 641.0 L616.7 643.0 L616.9 645.0 L617.1 647.0 L617.3 649.0 L617.5 651.0 L617.7 653.0 L617.9 654.9 L618.1 656.9 L618.4 658.9 L618.6 660.9 L618.8 662.9 L619.0 664.9 L619.2 666.9 L619.4 668.9 L619.6 670.9 L619.8 672.9 L620.0 674.9 L620.3 676.9 L620.5 679.0 L620.7 681.0 L620.9 683.0 L621.1 685.0 L621.4 687.0 L621.6 689.0 L621.8 691.0 L622.0 693.0 L622.2 695.1 L622.5 697.1 L622.7 699.1 L622.9 701.1 L626.7 731.0 L654.3 731.0 L658.1 701.1 L658.3 699.1 L658.5 697.1 L658.8 695.1 L659.0 693.0 L659.2 691.0 L659.4 689.0 L659.6 687.0 L659.9 685.0 L660.1 683.0 L660.3 681.0 L660.5 679.0 L660.7 676.9 L661.0 674.9 L661.2 672.9 L661.4 670.9 L661.6 668.9 L661.8 666.9 L662.0 664.9 L662.2 662.9 L662.4 660.9 L662.6 658.9 L662.9 656.9 L663.1 654.9 L663.3 653.0 L663.5 651.0 L663.7 649.0 L663.9 647.0 L664.1 645.0 L664.3 643.0 L664.5 641.0 L664.7 639.0 L664.9 637.0 L665.1 635.0 L665.3 633.1 L665.5 631.1 L665.8 629.1 L666.0 627.1 L666.2 625.1 L666.4 623.1 L666.6 621.2 L666.8 619.2 L667.0 617.2 L667.2 615.2 L667.4 613.2 L667.6 611.2 L667.8 609.3 L668.0 607.3 L668.2 605.3 L668.4 603.3 L668.6 601.3 L668.8 599.4 L669.0 597.4 L669.3 595.4 L669.5 593.4 L669.7 591.4 L669.9 589.5 L670.1 587.5 L670.3 585.5 L670.5 583.5 L670.7 581.5 L670.9 579.6 L671.2 577.6 L671.4 575.6 L671.6 573.6 L671.8 571.6 L672.0 569.7 L672.2 567.7 L672.5 565.7 L672.7 563.7 L672.9 561.7 L673.1 559.8 L673.3 557.8 L673.6 555.8 L673.8 553.8 L674.0 551.8 L674.2 549.8 L674.5 547.8 L674.7 545.9 L674.9 543.9 L675.2 541.9 L675.4 539.9 L675.6 537.9 L675.9 535.9 L676.1 533.9 L676.3 531.9 L676.6 529.9 L676.8 527.9 L677.1 526.0 L677.3 524.0 L677.5 522.0 L677.8 520.0 L678.0 518.0 L678.3 516.0 L678.5 514.0 L678.8 512.0 L679.1 510.0 L679.3 508.0 L679.6 505.9 L679.8 503.9 L680.1 501.9 L680.4 499.9 L680.6 497.9 L680.9 495.9 L681.2 493.9 L681.4 491.9 L681.7 489.9 L682.0 487.8 L682.3 485.8 L682.6 483.8 L682.9 481.8 L683.2 479.8 L683.5 477.7 L683.8 475.7 L684.1 473.7 L684.4 471.7 L684.7 469.7 L685.0 467.7 L685.4 465.7 L685.7 463.7 L686.1 461.7 L686.4 459.7 L686.8 457.7 L687.2 455.7 L687.6 453.7 L688.0 451.7 L688.4 449.7 L688.8 447.7 L689.2 445.7 L689.7 443.8 L690.1 441.8 L690.6 439.8 L691.1 437.9 L691.6 435.9 L692.1 434.0 L692.6 432.1 L693.1 430.1 L693.7 428.2 L694.2 426.3 L694.8 424.4 L695.4 422.5 L696.0 420.6 L696.7 418.7 L697.3 416.8 L698.0 414.9 L698.6 413.1 L699.3 411.2 L700.1 409.4 L700.8 407.5 L701.5 405.7 L702.3 403.9 L703.1 402.1 L703.9 400.3 L704.8 398.5 L705.6 396.7 L706.5 394.9 L707.4 393.2 L708.3 391.4 L709.2 389.7 L710.1 387.9 L711.1 386.2 L712.0 384.5 L713.0 382.8 L714.0 381.1 L715.0 379.4 L716.0 377.7 L717.1 376.0 L718.1 374.3 L719.2 372.6 L720.2 370.9 L721.3 369.3 L722.4 367.6 L723.5 366.0 L724.6 364.3 L725.7 362.6 L726.8 361.0 L728.0 359.4 L729.1 357.7 L730.2 356.1 L731.4 354.4 L732.5 352.8 L733.7 351.2 L734.9 349.5 L736.0 347.9 L737.2 346.3 L738.4 344.6 L739.6 343.0 L740.7 341.4 L741.9 339.7 L743.1 338.1 L744.3 336.5 L745.5 334.9 L746.7 333.2 L747.8 331.6 L749.0 330.0 L750.2 328.3 L751.4 326.7 L752.5 325.0 L753.7 323.4 L754.9 321.7 L756.0 320.1 L757.2 318.4 L758.3 316.8 L759.5 315.1 L760.6 313.4 L761.7 311.8 L762.9 310.1 L764.0 308.4 L765.1 306.7 L766.2 305.0 L767.3 303.3 L768.4 301.6 L769.4 299.9 L770.5 298.2 L771.6 296.4 L772.6 294.7 L773.6 293.0 L774.7 291.3 L775.7 289.5 L776.7 287.8 L777.7 286.0 L778.7 284.3 L779.7 282.5 L780.6 280.7 L781.6 279.0 L782.6 277.2 L783.5 275.4 L784.4 273.6 L785.3 271.8 L786.2 270.0 L787.1 268.2 L788.0 266.4 L788.9 264.6 L789.7 262.8 L790.6 261.0 L791.4 259.2 L792.3 257.3 L793.1 255.5 L793.9 253.7 L794.7 251.8 L795.4 250.0 L796.2 248.1 L796.9 246.3 L797.7 244.4 L798.4 242.6 L799.1 240.7 L799.8 238.8 L800.5 237.0 L801.1 235.1 L801.8 233.2 L802.4 231.3 L803.1 229.4 L803.7 227.5 L804.3 225.6 L804.9 223.7 L805.4 221.8 L806.0 219.9 L806.5 218.0 L807.0 216.1 L807.5 214.2 L808.0 212.2 L808.5 210.3 L809.0 208.4 L809.4 206.4 L809.8 204.5 L810.2 202.5 L810.6 200.6 L811.0 198.6 L811.4 196.7 L811.7 194.7 L812.0 192.8 L812.3 190.8 L812.6 188.8 L812.9 186.9 L813.2 184.9 L813.4 182.9 L813.6 180.9 L813.8 178.9 L814.0 177.0 L814.2 175.0 L814.3 173.0 L814.5 171.0 L814.6 169.0 L814.7 167.0 L814.8 165.0 L814.9 163.0 L814.9 161.0 L815.0 159.0 L815.0 157.0 L815.0 155.0 L815.0 153.0 L815.0 151.0 L814.9 149.0 L814.8 147.0 L814.8 145.0 L814.7 143.0 L814.6 141.0 L814.4 138.9 L814.3 136.9 L814.1 134.9 L814.0 132.9 L813.8 130.9 L813.6 128.9 L813.4 126.9 L813.1 124.9 L812.9 122.9 L812.6 120.9 L812.3 118.9 L812.0 117.0 L811.7 115.0 L811.4 113.0 L811.0 111.0 L810.6 109.0 L810.3 107.0 L809.9 105.1 L809.5 103.1 L809.0 101.1 L808.6 99.1 L808.1 97.2 L807.7 95.2 L807.2 93.3 L806.7 91.3 L806.1 89.4 L805.6 87.4 L805.1 85.5 L804.5 83.5 L803.9 81.6 L803.3 79.7 L802.7 77.8 L802.1 75.8 L801.5 73.9 L800.8 72.0 L800.1 70.1 L799.4 68.2 L798.7 66.3 L798.0 64.4 L797.3 62.6 L796.6 60.7 L795.8 58.8 L795.0 57.0 L794.3 55.1 L793.4 53.3 L792.6 51.4 L791.8 49.6 L791.0 47.8 L790.1 46.0 L789.2 44.2 L788.3 42.4 L787.4 40.6 L786.5 38.8 L785.6 37.0 L784.7 35.2 L783.7 33.5 L782.7 31.7 L781.7 30.0 L780.7 28.2 L779.7 26.5 L778.7 24.8 L777.7 23.1 L776.6 21.4 L775.5 19.7 L774.4 18.0 L773.4 16.4 L772.2 14.7 L771.1 13.1 L770.0 11.4 L768.8 9.8 L767.7 8.2 L766.5 6.6 L765.3 5.0 L764.1 3.4 L762.9 1.8 L761.6 0.3 L707.8 -40.0 Z"/>
<path fill="#FFFF00" stroke="#000" stroke-width="1.1" d="M582.3 -40.0 L525.4 0.1 L524.1 1.7 L522.9 3.2 L521.6 4.8 L520.4 6.4 L519.1 8.0 L517.9 9.6 L516.7 11.2 L515.6 12.8 L514.4 14.4 L513.2 16.1 L512.1 17.7 L511.0 19.4 L509.9 21.1 L508.8 22.8 L507.7 24.5 L506.7 26.2 L505.6 27.9 L504.6 29.6 L503.6 31.4 L502.6 33.1 L501.6 34.9 L500.7 36.6 L499.7 38.4 L498.8 40.2 L497.9 42.0 L497.0 43.8 L496.1 45.6 L495.2 47.4 L494.4 49.2 L493.5 51.0 L492.7 52.9 L491.9 54.7 L491.1 56.6 L490.3 58.4 L489.6 60.3 L488.9 62.2 L488.1 64.1 L487.4 65.9 L486.7 67.8 L486.1 69.7 L485.4 71.6 L484.8 73.5 L484.2 75.5 L483.6 77.4 L483.0 79.3 L482.4 81.2 L481.9 83.2 L481.3 85.1 L480.8 87.1 L480.3 89.0 L479.8 91.0 L479.4 92.9 L478.9 94.9 L478.5 96.8 L478.1 98.8 L477.7 100.8 L477.3 102.8 L476.9 104.7 L476.6 106.7 L476.3 108.7 L476.0 110.7 L475.7 112.7 L475.4 114.7 L475.1 116.7 L474.9 118.7 L474.7 120.7 L474.5 122.7 L474.3 124.7 L474.1 126.7 L474.0 128.7 L473.9 130.7 L473.8 132.7 L473.7 134.7 L473.6 136.7 L473.5 138.7 L473.5 140.7 L473.5 142.7 L473.5 144.7 L473.5 146.7 L473.6 148.7 L473.6 150.7 L473.7 152.7 L473.8 154.7 L473.9 156.7 L474.1 158.7 L474.2 160.7 L474.4 162.7 L474.6 164.7 L474.8 166.7 L475.0 168.7 L475.3 170.7 L475.5 172.7 L475.8 174.6 L476.1 176.6 L476.5 178.6 L476.8 180.6 L477.2 182.5 L477.6 184.5 L478.0 186.5 L478.4 188.4 L478.8 190.4 L479.3 192.3 L479.8 194.3 L480.3 196.2 L480.8 198.1 L481.3 200.1 L481.9 202.0 L482.5 203.9 L483.1 205.8 L483.7 207.7 L484.3 209.6 L485.0 211.5 L485.7 213.4 L486.3 215.3 L487.1 217.1 L487.8 219.0 L488.5 220.9 L489.3 222.7 L490.1 224.5 L490.9 226.4 L491.7 228.2 L492.5 230.0 L493.4 231.8 L494.3 233.6 L495.2 235.4 L496.1 237.1 L497.0 238.9 L498.0 240.6 L498.9 242.4 L499.9 244.1 L500.9 245.8 L501.9 247.5 L503.0 249.2 L504.0 250.9 L505.1 252.6 L506.1 254.3 L507.2 256.0 L508.3 257.6 L509.4 259.3 L510.5 261.0 L511.7 262.6 L512.8 264.3 L514.0 265.9 L515.1 267.5 L516.3 269.2 L517.5 270.8 L518.7 272.4 L519.9 274.0 L521.1 275.6 L522.3 277.2 L523.5 278.9 L524.7 280.5 L525.9 282.1 L527.1 283.7 L528.4 285.3 L529.6 286.9 L530.8 288.5 L532.1 290.1 L533.3 291.7 L534.5 293.3 L535.8 294.9 L537.0 296.5 L538.2 298.1 L539.4 299.7 L540.7 301.3 L541.9 302.9 L543.1 304.5 L544.4 306.1 L545.6 307.7 L546.8 309.3 L548.0 310.9 L549.2 312.6 L550.4 314.2 L551.6 315.8 L552.8 317.4 L554.0 319.1 L555.2 320.7 L556.4 322.3 L557.5 324.0 L558.7 325.6 L559.9 327.2 L561.0 328.9 L562.1 330.5 L563.3 332.2 L564.4 333.9 L565.5 335.5 L566.6 337.2 L567.7 338.9 L568.8 340.5 L569.9 342.2 L571.0 343.9 L572.0 345.6 L573.1 347.3 L574.1 349.0 L575.1 350.7 L576.1 352.4 L577.1 354.1 L578.1 355.8 L579.1 357.6 L580.0 359.3 L580.9 361.1 L581.9 362.8 L582.8 364.6 L583.7 366.3 L584.6 368.1 L585.4 369.9 L586.3 371.6 L587.1 373.4 L587.9 375.2 L588.7 377.0 L589.5 378.8 L590.2 380.7 L591.0 382.5 L591.7 384.3 L592.4 386.2 L593.1 388.0 L593.8 389.9 L594.4 391.8 L595.0 393.6 L595.7 395.5 L596.3 397.4 L596.8 399.3 L597.4 401.2 L597.9 403.1 L598.5 405.0 L599.0 406.9 L599.5 408.9 L600.0 410.8 L600.5 412.7 L600.9 414.7 L601.4 416.6 L601.8 418.6 L602.2 420.5 L602.7 422.5 L603.0 424.5 L603.4 426.4 L603.8 428.4 L604.2 430.4 L604.5 432.4 L604.9 434.4 L605.2 436.4 L605.5 438.4 L605.8 440.4 L606.1 442.4 L606.4 444.4 L606.7 446.4 L607.0 448.4 L607.3 450.4 L607.5 452.4 L607.8 454.4 L608.0 456.5 L608.3 458.5 L608.5 460.5 L608.7 462.5 L609.0 464.5 L609.2 466.6 L609.4 468.6 L609.6 470.6 L609.8 472.7 L610.0 474.7 L610.2 476.7 L610.4 478.7 L610.6 480.8 L610.8 482.8 L611.0 484.8 L611.2 486.9 L611.4 488.9 L611.5 490.9 L611.7 492.9 L611.9 495.0 L612.1 497.0 L612.3 499.0 L612.5 501.0 L612.6 503.0 L612.8 505.0 L613.0 507.1 L613.2 509.1 L613.4 511.1 L613.5 513.1 L613.7 515.1 L613.9 517.1 L614.1 519.1 L614.2 521.1 L614.4 523.1 L614.6 525.1 L614.8 527.1 L615.0 529.1 L615.1 531.1 L615.3 533.1 L615.5 535.1 L615.7 537.1 L615.8 539.1 L616.0 541.1 L616.2 543.1 L616.4 545.1 L616.5 547.1 L616.7 549.1 L616.9 551.1 L617.0 553.1 L617.2 555.1 L617.4 557.1 L617.6 559.1 L617.7 561.1 L617.9 563.1 L618.1 565.0 L618.2 567.0 L618.4 569.0 L618.6 571.0 L618.7 573.0 L618.9 575.0 L619.1 577.0 L619.2 579.0 L619.4 580.9 L619.6 582.9 L619.7 584.9 L619.9 586.9 L620.1 588.9 L620.2 590.9 L620.4 592.9 L620.5 594.9 L620.7 596.8 L620.9 598.8 L621.0 600.8 L621.2 602.8 L621.3 604.8 L621.5 606.8 L621.6 608.8 L621.8 610.8 L622.0 612.7 L622.1 614.7 L622.3 616.7 L622.4 618.7 L622.6 620.7 L622.7 622.7 L622.9 624.7 L623.0 626.7 L623.2 628.7 L623.3 630.7 L623.5 632.7 L623.6 634.7 L623.7 636.7 L623.9 638.6 L624.0 640.6 L624.2 642.6 L624.3 644.6 L624.5 646.6 L624.6 648.6 L624.7 650.6 L624.9 652.6 L625.0 654.6 L625.1 656.7 L625.3 658.7 L625.4 660.7 L625.5 662.7 L625.7 664.7 L625.8 666.7 L625.9 668.7 L626.1 670.7 L626.2 672.7 L626.3 674.7 L626.5 676.8 L626.6 678.8 L626.7 680.8 L626.8 682.8 L626.9 684.8 L627.1 686.9 L627.2 688.9 L627.3 690.9 L627.4 692.9 L627.5 695.0 L627.7 697.0 L627.8 699.0 L627.9 701.1 L630.3 731.0 L650.7 731.0 L653.1 701.1 L653.2 699.0 L653.3 697.0 L653.5 695.0 L653.6 692.9 L653.7 690.9 L653.8 688.9 L653.9 686.9 L654.1 684.8 L654.2 682.8 L654.3 680.8 L654.4 678.8 L654.5 676.8 L654.7 674.7 L654.8 672.7 L654.9 670.7 L655.1 668.7 L655.2 666.7 L655.3 664.7 L655.5 662.7 L655.6 660.7 L655.7 658.7 L655.9 656.7 L656.0 654.6 L656.1 652.6 L656.3 650.6 L656.4 648.6 L656.5 646.6 L656.7 644.6 L656.8 642.6 L657.0 640.6 L657.1 638.6 L657.3 636.7 L657.4 634.7 L657.5 632.7 L657.7 630.7 L657.8 628.7 L658.0 626.7 L658.1 624.7 L658.3 622.7 L658.4 620.7 L658.6 618.7 L658.7 616.7 L658.9 614.7 L659.0 612.7 L659.2 610.8 L659.4 608.8 L659.5 606.8 L659.7 604.8 L659.8 602.8 L660.0 600.8 L660.1 598.8 L660.3 596.8 L660.5 594.9 L660.6 592.9 L660.8 590.9 L660.9 588.9 L661.1 586.9 L661.3 584.9 L661.4 582.9 L661.6 580.9 L661.8 579.0 L661.9 577.0 L662.1 575.0 L662.3 573.0 L662.4 571.0 L662.6 569.0 L662.8 567.0 L662.9 565.0 L663.1 563.1 L663.3 561.1 L663.4 559.1 L663.6 557.1 L663.8 555.1 L664.0 553.1 L664.1 551.1 L664.3 549.1 L664.5 547.1 L664.6 545.1 L664.8 543.1 L665.0 541.1 L665.2 539.1 L665.3 537.1 L665.5 535.1 L665.7 533.1 L665.9 531.1 L666.0 529.1 L666.2 527.1 L666.4 525.1 L666.6 523.1 L666.8 521.1 L666.9 519.1 L667.1 517.1 L667.3 515.1 L667.5 513.1 L667.6 511.1 L667.8 509.1 L668.0 507.1 L668.2 505.0 L668.4 503.0 L668.5 501.0 L668.7 499.0 L668.9 497.0 L669.1 495.0 L669.3 492.9 L669.5 490.9 L669.6 488.9 L669.8 486.9 L670.0 484.8 L670.2 482.8 L670.4 480.8 L670.6 478.7 L670.8 476.7 L671.0 474.7 L671.2 472.7 L671.4 470.6 L671.6 468.6 L671.8 466.6 L672.0 464.5 L672.3 462.5 L672.5 460.5 L672.7 458.5 L673.0 456.5 L673.2 454.4 L673.5 452.4 L673.7 450.4 L674.0 448.4 L674.3 446.4 L674.6 444.4 L674.9 442.4 L675.2 440.4 L675.5 438.4 L675.8 436.4 L676.1 434.4 L676.5 432.4 L676.8 430.4 L677.2 428.4 L677.6 426.4 L678.0 424.5 L678.3 422.5 L678.8 420.5 L679.2 418.6 L679.6 416.6 L680.1 414.7 L680.5 412.7 L681.0 410.8 L681.5 408.9 L682.0 406.9 L682.5 405.0 L683.1 403.1 L683.6 401.2 L684.2 399.3 L684.7 397.4 L685.3 395.5 L686.0 393.6 L686.6 391.8 L687.2 389.9 L687.9 388.0 L688.6 386.2 L689.3 384.3 L690.0 382.5 L690.8 380.7 L691.5 378.8 L692.3 377.0 L693.1 375.2 L693.9 373.4 L694.7 371.6 L695.6 369.9 L696.4 368.1 L697.3 366.3 L698.2 364.6 L699.1 362.8 L700.1 361.1 L701.0 359.3 L701.9 357.6 L702.9 355.8 L703.9 354.1 L704.9 352.4 L705.9 350.7 L706.9 349.0 L707.9 347.3 L709.0 345.6 L710.0 343.9 L711.1 342.2 L712.2 340.5 L713.3 338.9 L714.4 337.2 L715.5 335.5 L716.6 333.9 L717.7 332.2 L718.9 330.5 L720.0 328.9 L721.1 327.2 L722.3 325.6 L723.5 324.0 L724.6 322.3 L725.8 320.7 L727.0 319.1 L728.2 317.4 L729.4 315.8 L730.6 314.2 L731.8 312.6 L733.0 310.9 L734.2 309.3 L735.4 307.7 L736.6 306.1 L737.9 304.5 L739.1 302.9 L740.3 301.3 L741.6 299.7 L742.8 298.1 L744.0 296.5 L745.2 294.9 L746.5 293.3 L747.7 291.7 L748.9 290.1 L750.2 288.5 L751.4 286.9 L752.6 285.3 L753.9 283.7 L755.1 282.1 L756.3 280.5 L757.5 278.9 L758.7 277.2 L759.9 275.6 L761.1 274.0 L762.3 272.4 L763.5 270.8 L764.7 269.2 L765.9 267.5 L767.0 265.9 L768.2 264.3 L769.3 262.6 L770.5 261.0 L771.6 259.3 L772.7 257.6 L773.8 256.0 L774.9 254.3 L775.9 252.6 L777.0 250.9 L778.0 249.2 L779.1 247.5 L780.1 245.8 L781.1 244.1 L782.1 242.4 L783.0 240.6 L784.0 238.9 L784.9 237.1 L785.8 235.4 L786.7 233.6 L787.6 231.8 L788.5 230.0 L789.3 228.2 L790.1 226.4 L790.9 224.5 L791.7 222.7 L792.5 220.9 L793.2 219.0 L793.9 217.1 L794.7 215.3 L795.3 213.4 L796.0 211.5 L796.7 209.6 L797.3 207.7 L797.9 205.8 L798.5 203.9 L799.1 202.0 L799.7 200.1 L800.2 198.1 L800.7 196.2 L801.2 194.3 L801.7 192.3 L802.2 190.4 L802.6 188.4 L803.0 186.5 L803.4 184.5 L803.8 182.5 L804.2 180.6 L804.5 178.6 L804.9 176.6 L805.2 174.6 L805.5 172.7 L805.7 170.7 L806.0 168.7 L806.2 166.7 L806.4 164.7 L806.6 162.7 L806.8 160.7 L806.9 158.7 L807.1 156.7 L807.2 154.7 L807.3 152.7 L807.4 150.7 L807.4 148.7 L807.5 146.7 L807.5 144.7 L807.5 142.7 L807.5 140.7 L807.5 138.7 L807.4 136.7 L807.3 134.7 L807.2 132.7 L807.1 130.7 L807.0 128.7 L806.9 126.7 L806.7 124.7 L806.5 122.7 L806.3 120.7 L806.1 118.7 L805.9 116.7 L805.6 114.7 L805.3 112.7 L805.0 110.7 L804.7 108.7 L804.4 106.7 L804.1 104.7 L803.7 102.8 L803.3 100.8 L802.9 98.8 L802.5 96.8 L802.1 94.9 L801.6 92.9 L801.2 91.0 L800.7 89.0 L800.2 87.1 L799.7 85.1 L799.1 83.2 L798.6 81.2 L798.0 79.3 L797.4 77.4 L796.8 75.5 L796.2 73.5 L795.6 71.6 L794.9 69.7 L794.3 67.8 L793.6 65.9 L792.9 64.1 L792.1 62.2 L791.4 60.3 L790.7 58.4 L789.9 56.6 L789.1 54.7 L788.3 52.9 L787.5 51.0 L786.6 49.2 L785.8 47.4 L784.9 45.6 L784.0 43.8 L783.1 42.0 L782.2 40.2 L781.3 38.4 L780.3 36.6 L779.4 34.9 L778.4 33.1 L777.4 31.4 L776.4 29.6 L775.4 27.9 L774.3 26.2 L773.3 24.5 L772.2 22.8 L771.1 21.1 L770.0 19.4 L768.9 17.7 L767.8 16.1 L766.6 14.4 L765.4 12.8 L764.3 11.2 L763.1 9.6 L761.9 8.0 L760.6 6.4 L759.4 4.8 L758.1 3.2 L756.9 1.7 L755.6 0.1 L698.7 -40.0 Z"/>
<path fill="#FF4500" stroke="#000" stroke-width="1.1" d="M598.6 -40.0 L536.6 -0.0 L535.4 1.5 L534.2 3.1 L533.0 4.6 L531.8 6.2 L530.7 7.7 L529.5 9.3 L528.3 10.9 L527.1 12.5 L526.0 14.1 L524.8 15.7 L523.6 17.4 L522.5 19.0 L521.3 20.7 L520.2 22.3 L519.0 24.0 L517.9 25.7 L516.8 27.4 L515.7 29.1 L514.6 30.8 L513.5 32.5 L512.4 34.2 L511.3 35.9 L510.3 37.7 L509.2 39.4 L508.2 41.2 L507.2 42.9 L506.2 44.7 L505.2 46.5 L504.2 48.3 L503.3 50.1 L502.3 51.9 L501.4 53.7 L500.5 55.5 L499.6 57.4 L498.7 59.2 L497.9 61.0 L497.0 62.9 L496.2 64.7 L495.4 66.6 L494.7 68.5 L493.9 70.3 L493.2 72.2 L492.5 74.1 L491.8 76.0 L491.2 77.9 L490.5 79.8 L489.9 81.7 L489.4 83.6 L488.8 85.5 L488.3 87.4 L487.8 89.4 L487.3 91.3 L486.9 93.2 L486.4 95.2 L486.0 97.1 L485.7 99.1 L485.3 101.0 L485.0 103.0 L484.7 105.0 L484.5 106.9 L484.2 108.9 L484.0 110.9 L483.8 112.9 L483.6 114.8 L483.5 116.8 L483.4 118.8 L483.3 120.8 L483.2 122.8 L483.1 124.8 L483.1 126.8 L483.1 128.8 L483.1 130.7 L483.1 132.7 L483.2 134.7 L483.3 136.7 L483.4 138.7 L483.5 140.7 L483.6 142.7 L483.8 144.7 L484.0 146.7 L484.2 148.7 L484.4 150.7 L484.6 152.7 L484.9 154.7 L485.2 156.7 L485.5 158.7 L485.8 160.7 L486.1 162.7 L486.5 164.7 L486.9 166.7 L487.2 168.7 L487.7 170.7 L488.1 172.7 L488.5 174.7 L489.0 176.7 L489.5 178.6 L490.0 180.6 L490.5 182.6 L491.0 184.5 L491.6 186.5 L492.1 188.5 L492.7 190.4 L493.4 192.3 L494.0 194.3 L494.6 196.2 L495.3 198.1 L496.0 200.0 L496.7 201.9 L497.5 203.8 L498.3 205.6 L499.0 207.5 L499.9 209.4 L500.7 211.2 L501.6 213.0 L502.4 214.8 L503.4 216.6 L504.3 218.4 L505.3 220.1 L506.2 221.9 L507.3 223.6 L508.3 225.3 L509.4 227.0 L510.5 228.6 L511.6 230.3 L512.8 231.9 L513.9 233.5 L515.2 235.0 L516.4 236.6 L517.7 238.1 L519.0 239.6 L520.4 241.0 L521.7 242.5 L523.1 243.9 L524.6 245.3 L526.0 246.7 L527.5 248.0 L529.0 249.4 L530.5 250.7 L532.0 252.0 L533.5 253.3 L535.1 254.6 L536.7 255.8 L538.3 257.1 L539.8 258.4 L541.4 259.6 L543.0 260.9 L544.7 262.1 L546.3 263.4 L547.9 264.6 L549.5 265.8 L551.1 267.1 L552.7 268.3 L554.3 269.6 L555.9 270.8 L557.5 272.1 L559.1 273.4 L560.6 274.6 L562.2 275.9 L563.7 277.2 L565.2 278.6 L566.7 279.9 L568.2 281.2 L569.7 282.6 L571.1 284.0 L572.5 285.4 L573.9 286.9 L575.3 288.3 L576.6 289.8 L577.9 291.3 L579.2 292.8 L580.5 294.3 L581.7 295.9 L583.0 297.4 L584.2 299.0 L585.3 300.6 L586.5 302.2 L587.6 303.9 L588.7 305.5 L589.8 307.2 L590.8 308.9 L591.9 310.6 L592.9 312.3 L593.9 314.0 L594.9 315.7 L595.8 317.5 L596.8 319.3 L597.7 321.0 L598.6 322.8 L599.4 324.6 L600.3 326.4 L601.1 328.2 L601.9 330.1 L602.7 331.9 L603.5 333.8 L604.2 335.6 L604.9 337.5 L605.7 339.3 L606.4 341.2 L607.0 343.1 L607.7 345.0 L608.3 346.9 L609.0 348.8 L609.6 350.7 L610.1 352.6 L610.7 354.5 L611.3 356.4 L611.8 358.4 L612.3 360.3 L612.8 362.2 L613.3 364.2 L613.8 366.1 L614.3 368.0 L614.7 370.0 L615.1 371.9 L615.6 373.9 L616.0 375.8 L616.3 377.8 L616.7 379.8 L617.1 381.7 L617.4 383.7 L617.8 385.7 L618.1 387.7 L618.4 389.6 L618.7 391.6 L619.0 393.6 L619.3 395.6 L619.6 397.6 L619.8 399.6 L620.1 401.6 L620.3 403.6 L620.5 405.6 L620.8 407.6 L621.0 409.6 L621.2 411.6 L621.4 413.6 L621.6 415.6 L621.8 417.6 L621.9 419.6 L622.1 421.7 L622.3 423.7 L622.4 425.7 L622.6 427.7 L622.7 429.7 L622.8 431.7 L623.0 433.8 L623.1 435.8 L623.2 437.8 L623.3 439.8 L623.5 441.9 L623.6 443.9 L623.7 445.9 L623.8 447.9 L623.9 450.0 L624.0 452.0 L624.1 454.0 L624.2 456.0 L624.3 458.1 L624.4 460.1 L624.4 462.1 L624.5 464.1 L624.6 466.2 L624.7 468.2 L624.8 470.2 L624.9 472.2 L625.0 474.2 L625.1 476.3 L625.1 478.3 L625.2 480.3 L625.3 482.3 L625.4 484.3 L625.5 486.3 L625.6 488.4 L625.7 490.4 L625.8 492.4 L625.9 494.4 L626.0 496.4 L626.0 498.4 L626.1 500.4 L626.2 502.4 L626.3 504.4 L626.4 506.5 L626.5 508.5 L626.6 510.5 L626.7 512.5 L626.8 514.5 L626.9 516.5 L627.0 518.5 L627.0 520.5 L627.1 522.5 L627.2 524.5 L627.3 526.5 L627.4 528.5 L627.5 530.5 L627.6 532.5 L627.7 534.5 L627.8 536.5 L627.9 538.5 L628.0 540.5 L628.0 542.5 L628.1 544.5 L628.2 546.5 L628.3 548.5 L628.4 550.5 L628.5 552.5 L628.6 554.5 L628.7 556.5 L628.8 558.5 L628.9 560.5 L628.9 562.5 L629.0 564.5 L629.1 566.5 L629.2 568.5 L629.3 570.5 L629.4 572.5 L629.5 574.5 L629.6 576.5 L629.6 578.5 L629.7 580.5 L629.8 582.5 L629.9 584.5 L630.0 586.5 L630.1 588.5 L630.2 590.5 L630.2 592.5 L630.3 594.5 L630.4 596.5 L630.5 598.5 L630.6 600.5 L630.7 602.5 L630.7 604.5 L630.8 606.5 L630.9 608.5 L631.0 610.5 L631.1 612.5 L631.1 614.5 L631.2 616.5 L631.3 618.5 L631.4 620.5 L631.5 622.5 L631.5 624.5 L631.6 626.5 L631.7 628.6 L631.8 630.6 L631.8 632.6 L631.9 634.6 L632.0 636.6 L632.1 638.6 L632.1 640.6 L632.2 642.6 L632.3 644.6 L632.4 646.6 L632.4 648.6 L632.5 650.6 L632.6 652.6 L632.6 654.6 L632.7 656.7 L632.8 658.7 L632.8 660.7 L632.9 662.7 L633.0 664.7 L633.0 666.7 L633.1 668.7 L633.2 670.7 L633.2 672.8 L633.3 674.8 L633.4 676.8 L633.4 678.8 L633.5 680.8 L633.5 682.9 L633.6 684.9 L633.6 686.9 L633.7 688.9 L633.8 690.9 L633.8 693.0 L633.9 695.0 L633.9 697.0 L634.0 699.0 L634.0 701.1 L635.0 731.0 L646.0 731.0 L647.0 701.1 L647.0 699.0 L647.1 697.0 L647.1 695.0 L647.2 693.0 L647.2 690.9 L647.3 688.9 L647.4 686.9 L647.4 684.9 L647.5 682.9 L647.5 680.8 L647.6 678.8 L647.6 676.8 L647.7 674.8 L647.8 672.8 L647.8 670.7 L647.9 668.7 L648.0 666.7 L648.0 664.7 L648.1 662.7 L648.2 660.7 L648.2 658.7 L648.3 656.7 L648.4 654.6 L648.4 652.6 L648.5 650.6 L648.6 648.6 L648.6 646.6 L648.7 644.6 L648.8 642.6 L648.9 640.6 L648.9 638.6 L649.0 636.6 L649.1 634.6 L649.2 632.6 L649.2 630.6 L649.3 628.6 L649.4 626.5 L649.5 624.5 L649.5 622.5 L649.6 620.5 L649.7 618.5 L649.8 616.5 L649.9 614.5 L649.9 612.5 L650.0 610.5 L650.1 608.5 L650.2 606.5 L650.3 604.5 L650.3 602.5 L650.4 600.5 L650.5 598.5 L650.6 596.5 L650.7 594.5 L650.8 592.5 L650.8 590.5 L650.9 588.5 L651.0 586.5 L651.1 584.5 L651.2 582.5 L651.3 580.5 L651.4 578.5 L651.4 576.5 L651.5 574.5 L651.6 572.5 L651.7 570.5 L651.8 568.5 L651.9 566.5 L652.0 564.5 L652.1 562.5 L652.1 560.5 L652.2 558.5 L652.3 556.5 L652.4 554.5 L652.5 552.5 L652.6 550.5 L652.7 548.5 L652.8 546.5 L652.9 544.5 L653.0 542.5 L653.0 540.5 L653.1 538.5 L653.2 536.5 L653.3 534.5 L653.4 532.5 L653.5 530.5 L653.6 528.5 L653.7 526.5 L653.8 524.5 L653.9 522.5 L654.0 520.5 L654.0 518.5 L654.1 516.5 L654.2 514.5 L654.3 512.5 L654.4 510.5 L654.5 508.5 L654.6 506.5 L654.7 504.4 L654.8 502.4 L654.9 500.4 L655.0 498.4 L655.0 496.4 L655.1 494.4 L655.2 492.4 L655.3 490.4 L655.4 488.4 L655.5 486.3 L655.6 484.3 L655.7 482.3 L655.8 480.3 L655.9 478.3 L655.9 476.3 L656.0 474.2 L656.1 472.2 L656.2 470.2 L656.3 468.2 L656.4 466.2 L656.5 464.1 L656.6 462.1 L656.6 460.1 L656.7 458.1 L656.8 456.0 L656.9 454.0 L657.0 452.0 L657.1 450.0 L657.2 447.9 L657.3 445.9 L657.4 443.9 L657.5 441.9 L657.7 439.8 L657.8 437.8 L657.9 435.8 L658.0 433.8 L658.2 431.7 L658.3 429.7 L658.4 427.7 L658.6 425.7 L658.7 423.7 L658.9 421.7 L659.1 419.6 L659.2 417.6 L659.4 415.6 L659.6 413.6 L659.8 411.6 L660.0 409.6 L660.2 407.6 L660.5 405.6 L660.7 403.6 L660.9 401.6 L661.2 399.6 L661.4 397.6 L661.7 395.6 L662.0 393.6 L662.3 391.6 L662.6 389.6 L662.9 387.7 L663.2 385.7 L663.6 383.7 L663.9 381.7 L664.3 379.8 L664.7 377.8 L665.0 375.8 L665.4 373.9 L665.9 371.9 L666.3 370.0 L666.7 368.0 L667.2 366.1 L667.7 364.2 L668.2 362.2 L668.7 360.3 L669.2 358.4 L669.7 356.4 L670.3 354.5 L670.9 352.6 L671.4 350.7 L672.0 348.8 L672.7 346.9 L673.3 345.0 L674.0 343.1 L674.6 341.2 L675.3 339.3 L676.1 337.5 L676.8 335.6 L677.5 333.8 L678.3 331.9 L679.1 330.1 L679.9 328.2 L680.7 326.4 L681.6 324.6 L682.4 322.8 L683.3 321.0 L684.2 319.3 L685.2 317.5 L686.1 315.7 L687.1 314.0 L688.1 312.3 L689.1 310.6 L690.2 308.9 L691.2 307.2 L692.3 305.5 L693.4 303.9 L694.5 302.2 L695.7 300.6 L696.8 299.0 L698.0 297.4 L699.3 295.9 L700.5 294.3 L701.8 292.8 L703.1 291.3 L704.4 289.8 L705.7 288.3 L707.1 286.9 L708.5 285.4 L709.9 284.0 L711.3 282.6 L712.8 281.2 L714.3 279.9 L715.8 278.6 L717.3 277.2 L718.8 275.9 L720.4 274.6 L721.9 273.4 L723.5 272.1 L725.1 270.8 L726.7 269.6 L728.3 268.3 L729.9 267.1 L731.5 265.8 L733.1 264.6 L734.7 263.4 L736.3 262.1 L738.0 260.9 L739.6 259.6 L741.2 258.4 L742.7 257.1 L744.3 255.8 L745.9 254.6 L747.5 253.3 L749.0 252.0 L750.5 250.7 L752.0 249.4 L753.5 248.0 L755.0 246.7 L756.4 245.3 L757.9 243.9 L759.3 242.5 L760.6 241.0 L762.0 239.6 L763.3 238.1 L764.6 236.6 L765.8 235.0 L767.1 233.5 L768.2 231.9 L769.4 230.3 L770.5 228.6 L771.6 227.0 L772.7 225.3 L773.7 223.6 L774.8 221.9 L775.7 220.1 L776.7 218.4 L777.6 216.6 L778.6 214.8 L779.4 213.0 L780.3 211.2 L781.1 209.4 L782.0 207.5 L782.7 205.6 L783.5 203.8 L784.3 201.9 L785.0 200.0 L785.7 198.1 L786.4 196.2 L787.0 194.3 L787.6 192.3 L788.3 190.4 L788.9 188.5 L789.4 186.5 L790.0 184.5 L790.5 182.6 L791.0 180.6 L791.5 178.6 L792.0 176.7 L792.5 174.7 L792.9 172.7 L793.3 170.7 L793.8 168.7 L794.1 166.7 L794.5 164.7 L794.9 162.7 L795.2 160.7 L795.5 158.7 L795.8 156.7 L796.1 154.7 L796.4 152.7 L796.6 150.7 L796.8 148.7 L797.0 146.7 L797.2 144.7 L797.4 142.7 L797.5 140.7 L797.6 138.7 L797.7 136.7 L797.8 134.7 L797.9 132.7 L797.9 130.7 L797.9 128.8 L797.9 126.8 L797.9 124.8 L797.8 122.8 L797.7 120.8 L797.6 118.8 L797.5 116.8 L797.4 114.8 L797.2 112.9 L797.0 110.9 L796.8 108.9 L796.5 106.9 L796.3 105.0 L796.0 103.0 L795.7 101.0 L795.3 99.1 L795.0 97.1 L794.6 95.2 L794.1 93.2 L793.7 91.3 L793.2 89.4 L792.7 87.4 L792.2 85.5 L791.6 83.6 L791.1 81.7 L790.5 79.8 L789.8 77.9 L789.2 76.0 L788.5 74.1 L787.8 72.2 L787.1 70.3 L786.3 68.5 L785.6 66.6 L784.8 64.7 L784.0 62.9 L783.1 61.0 L782.3 59.2 L781.4 57.4 L780.5 55.5 L779.6 53.7 L778.7 51.9 L777.7 50.1 L776.8 48.3 L775.8 46.5 L774.8 44.7 L773.8 42.9 L772.8 41.2 L771.8 39.4 L770.7 37.7 L769.7 35.9 L768.6 34.2 L767.5 32.5 L766.4 30.8 L765.3 29.1 L764.2 27.4 L763.1 25.7 L762.0 24.0 L760.8 22.3 L759.7 20.7 L758.5 19.0 L757.4 17.4 L756.2 15.7 L755.0 14.1 L753.9 12.5 L752.7 10.9 L751.5 9.3 L750.3 7.7 L749.2 6.2 L748.0 4.6 L746.8 3.1 L745.6 1.5 L744.4 -0.0 L682.4 -40.0 Z"/>
<path fill="#FFFFFF" stroke="#000" stroke-width="1.1" d="M601.1 -40.0 L540.5 -0.0 L539.4 1.5 L538.3 3.1 L537.2 4.7 L536.1 6.2 L535.0 7.8 L533.8 9.4 L532.7 11.0 L531.6 12.6 L530.5 14.3 L529.3 15.9 L528.2 17.5 L527.1 19.2 L525.9 20.9 L524.8 22.5 L523.7 24.2 L522.5 25.9 L521.4 27.6 L520.3 29.3 L519.2 31.0 L518.1 32.8 L517.0 34.5 L515.9 36.2 L514.9 38.0 L513.8 39.7 L512.7 41.5 L511.7 43.3 L510.7 45.1 L509.7 46.8 L508.7 48.6 L507.7 50.4 L506.7 52.2 L505.8 54.1 L504.9 55.9 L503.9 57.7 L503.1 59.5 L502.2 61.4 L501.3 63.2 L500.5 65.1 L499.7 66.9 L498.9 68.8 L498.2 70.7 L497.5 72.5 L496.8 74.4 L496.1 76.3 L495.5 78.2 L494.9 80.1 L494.3 82.0 L493.8 83.9 L493.2 85.8 L492.8 87.7 L492.3 89.6 L491.9 91.6 L491.5 93.5 L491.2 95.4 L490.8 97.3 L490.6 99.3 L490.3 101.2 L490.1 103.2 L489.9 105.1 L489.7 107.1 L489.5 109.0 L489.4 111.0 L489.3 112.9 L489.3 114.9 L489.2 116.9 L489.2 118.8 L489.2 120.8 L489.2 122.8 L489.3 124.8 L489.3 126.8 L489.4 128.8 L489.5 130.8 L489.7 132.7 L489.8 134.7 L490.0 136.7 L490.2 138.8 L490.4 140.8 L490.7 142.8 L490.9 144.8 L491.2 146.8 L491.5 148.8 L491.8 150.9 L492.1 152.9 L492.4 154.9 L492.7 156.9 L493.1 159.0 L493.5 161.0 L493.9 163.0 L494.3 165.1 L494.7 167.1 L495.2 169.1 L495.6 171.1 L496.1 173.1 L496.6 175.1 L497.2 177.1 L497.7 179.1 L498.3 181.0 L498.9 183.0 L499.5 184.9 L500.2 186.9 L500.9 188.8 L501.6 190.7 L502.3 192.6 L503.1 194.4 L503.9 196.3 L504.7 198.1 L505.5 199.9 L506.4 201.7 L507.3 203.5 L508.3 205.2 L509.2 206.9 L510.2 208.6 L511.3 210.3 L512.4 211.9 L513.5 213.5 L514.6 215.1 L515.8 216.6 L517.0 218.2 L518.3 219.6 L519.5 221.1 L520.9 222.5 L522.2 223.9 L523.6 225.2 L525.1 226.6 L526.5 227.9 L528.0 229.1 L529.5 230.4 L531.1 231.6 L532.6 232.8 L534.2 234.0 L535.8 235.2 L537.5 236.3 L539.1 237.5 L540.8 238.6 L542.5 239.7 L544.2 240.7 L545.9 241.8 L547.7 242.9 L549.4 243.9 L551.2 245.0 L552.9 246.0 L554.7 247.0 L556.5 248.0 L558.3 249.0 L560.1 250.1 L561.9 251.1 L563.7 252.1 L565.5 253.1 L567.3 254.1 L569.1 255.1 L570.9 256.1 L572.7 257.2 L574.5 258.2 L576.3 259.2 L578.0 260.3 L579.8 261.3 L581.5 262.4 L583.3 263.5 L585.0 264.6 L586.7 265.7 L588.4 266.8 L590.0 268.0 L591.6 269.2 L593.3 270.3 L594.8 271.5 L596.4 272.8 L597.9 274.0 L599.4 275.3 L600.9 276.6 L602.3 278.0 L603.7 279.3 L605.0 280.7 L606.3 282.2 L607.6 283.6 L608.8 285.1 L610.0 286.7 L611.1 288.2 L612.2 289.9 L613.2 291.5 L614.1 293.2 L615.1 294.9 L615.9 296.7 L616.7 298.5 L617.5 300.4 L618.2 302.2 L618.8 304.1 L619.5 306.1 L620.1 308.0 L620.7 309.9 L621.2 311.9 L621.8 313.8 L622.3 315.8 L622.8 317.7 L623.3 319.7 L623.7 321.7 L624.1 323.6 L624.6 325.6 L625.0 327.6 L625.3 329.5 L625.7 331.5 L626.1 333.5 L626.4 335.5 L626.7 337.5 L627.0 339.5 L627.3 341.4 L627.6 343.4 L627.8 345.4 L628.1 347.4 L628.3 349.4 L628.5 351.4 L628.8 353.4 L629.0 355.4 L629.2 357.5 L629.3 359.5 L629.5 361.5 L629.7 363.5 L629.9 365.5 L630.0 367.5 L630.2 369.5 L630.3 371.5 L630.4 373.5 L630.6 375.6 L630.7 377.6 L630.8 379.6 L630.9 381.6 L631.1 383.6 L631.2 385.6 L631.3 387.6 L631.4 389.6 L631.5 391.7 L631.6 393.7 L631.7 395.7 L631.8 397.7 L631.9 399.7 L632.0 401.7 L632.1 403.7 L632.2 405.7 L632.3 407.8 L632.4 409.8 L632.5 411.8 L632.5 413.8 L632.6 415.8 L632.7 417.8 L632.8 419.8 L632.9 421.8 L632.9 423.8 L633.0 425.9 L633.1 427.9 L633.1 429.9 L633.2 431.9 L633.3 433.9 L633.3 435.9 L633.4 437.9 L633.5 439.9 L633.5 441.9 L633.6 443.9 L633.7 445.9 L633.7 448.0 L633.8 450.0 L633.8 452.0 L633.9 454.0 L633.9 456.0 L634.0 458.0 L634.0 460.0 L634.1 462.0 L634.1 464.0 L634.1 466.0 L634.2 468.0 L634.2 470.0 L634.3 472.0 L634.3 474.0 L634.4 476.1 L634.4 478.1 L634.4 480.1 L634.5 482.1 L634.5 484.1 L634.5 486.1 L634.6 488.1 L634.6 490.1 L634.6 492.1 L634.6 494.1 L634.7 496.1 L634.7 498.1 L634.7 500.1 L634.8 502.1 L634.8 504.1 L634.8 506.2 L634.8 508.2 L634.9 510.2 L634.9 512.2 L634.9 514.2 L634.9 516.2 L634.9 518.2 L635.0 520.2 L635.0 522.2 L635.0 524.2 L635.0 526.2 L635.0 528.2 L635.1 530.2 L635.1 532.2 L635.1 534.2 L635.1 536.2 L635.1 538.2 L635.1 540.3 L635.2 542.3 L635.2 544.3 L635.2 546.3 L635.2 548.3 L635.2 550.3 L635.2 552.3 L635.2 554.3 L635.3 556.3 L635.3 558.3 L635.3 560.3 L635.3 562.3 L635.3 564.3 L635.3 566.3 L635.4 568.3 L635.4 570.3 L635.4 572.3 L635.4 574.4 L635.4 576.4 L635.4 578.4 L635.4 580.4 L635.5 582.4 L635.5 584.4 L635.5 586.4 L635.5 588.4 L635.5 590.4 L635.6 592.4 L635.6 594.4 L635.6 596.4 L635.6 598.4 L635.6 600.5 L635.7 602.5 L635.7 604.5 L635.7 606.5 L635.7 608.5 L635.7 610.5 L635.8 612.5 L635.8 614.5 L635.8 616.5 L635.9 618.5 L635.9 620.5 L635.9 622.5 L635.9 624.6 L636.0 626.6 L636.0 628.6 L636.0 630.6 L636.1 632.6 L636.1 634.6 L636.1 636.6 L636.2 638.6 L636.2 640.6 L636.2 642.6 L636.3 644.7 L636.3 646.7 L636.4 648.7 L636.4 650.7 L636.5 652.7 L636.5 654.7 L636.5 656.7 L636.6 658.7 L636.6 660.8 L636.7 662.8 L636.7 664.8 L636.8 666.8 L636.9 668.8 L636.9 670.8 L637.0 672.8 L637.0 674.9 L637.1 676.9 L637.1 678.9 L637.2 680.9 L637.3 682.9 L637.3 684.9 L637.4 686.9 L637.5 689.0 L637.6 691.0 L637.6 693.0 L637.7 695.0 L637.8 697.0 L637.9 699.0 L637.9 701.1 L639.0 731.0 L642.0 731.0 L643.1 701.1 L643.1 699.0 L643.2 697.0 L643.3 695.0 L643.4 693.0 L643.4 691.0 L643.5 689.0 L643.6 686.9 L643.7 684.9 L643.7 682.9 L643.8 680.9 L643.9 678.9 L643.9 676.9 L644.0 674.9 L644.0 672.8 L644.1 670.8 L644.1 668.8 L644.2 666.8 L644.3 664.8 L644.3 662.8 L644.4 660.8 L644.4 658.7 L644.5 656.7 L644.5 654.7 L644.5 652.7 L644.6 650.7 L644.6 648.7 L644.7 646.7 L644.7 644.7 L644.8 642.6 L644.8 640.6 L644.8 638.6 L644.9 636.6 L644.9 634.6 L644.9 632.6 L645.0 630.6 L645.0 628.6 L645.0 626.6 L645.1 624.6 L645.1 622.5 L645.1 620.5 L645.1 618.5 L645.2 616.5 L645.2 614.5 L645.2 612.5 L645.3 610.5 L645.3 608.5 L645.3 606.5 L645.3 604.5 L645.3 602.5 L645.4 600.5 L645.4 598.4 L645.4 596.4 L645.4 594.4 L645.4 592.4 L645.5 590.4 L645.5 588.4 L645.5 586.4 L645.5 584.4 L645.5 582.4 L645.6 580.4 L645.6 578.4 L645.6 576.4 L645.6 574.4 L645.6 572.3 L645.6 570.3 L645.6 568.3 L645.7 566.3 L645.7 564.3 L645.7 562.3 L645.7 560.3 L645.7 558.3 L645.7 556.3 L645.8 554.3 L645.8 552.3 L645.8 550.3 L645.8 548.3 L645.8 546.3 L645.8 544.3 L645.8 542.3 L645.9 540.3 L645.9 538.2 L645.9 536.2 L645.9 534.2 L645.9 532.2 L645.9 530.2 L646.0 528.2 L646.0 526.2 L646.0 524.2 L646.0 522.2 L646.0 520.2 L646.1 518.2 L646.1 516.2 L646.1 514.2 L646.1 512.2 L646.1 510.2 L646.2 508.2 L646.2 506.2 L646.2 504.1 L646.2 502.1 L646.3 500.1 L646.3 498.1 L646.3 496.1 L646.4 494.1 L646.4 492.1 L646.4 490.1 L646.4 488.1 L646.5 486.1 L646.5 484.1 L646.5 482.1 L646.6 480.1 L646.6 478.1 L646.6 476.1 L646.7 474.0 L646.7 472.0 L646.8 470.0 L646.8 468.0 L646.9 466.0 L646.9 464.0 L646.9 462.0 L647.0 460.0 L647.0 458.0 L647.1 456.0 L647.1 454.0 L647.2 452.0 L647.2 450.0 L647.3 448.0 L647.3 445.9 L647.4 443.9 L647.5 441.9 L647.5 439.9 L647.6 437.9 L647.7 435.9 L647.7 433.9 L647.8 431.9 L647.9 429.9 L647.9 427.9 L648.0 425.9 L648.1 423.8 L648.1 421.8 L648.2 419.8 L648.3 417.8 L648.4 415.8 L648.5 413.8 L648.5 411.8 L648.6 409.8 L648.7 407.8 L648.8 405.7 L648.9 403.7 L649.0 401.7 L649.1 399.7 L649.2 397.7 L649.3 395.7 L649.4 393.7 L649.5 391.7 L649.6 389.6 L649.7 387.6 L649.8 385.6 L649.9 383.6 L650.1 381.6 L650.2 379.6 L650.3 377.6 L650.4 375.6 L650.6 373.5 L650.7 371.5 L650.8 369.5 L651.0 367.5 L651.1 365.5 L651.3 363.5 L651.5 361.5 L651.7 359.5 L651.8 357.5 L652.0 355.4 L652.2 353.4 L652.5 351.4 L652.7 349.4 L652.9 347.4 L653.2 345.4 L653.4 343.4 L653.7 341.4 L654.0 339.5 L654.3 337.5 L654.6 335.5 L654.9 333.5 L655.3 331.5 L655.7 329.5 L656.0 327.6 L656.4 325.6 L656.9 323.6 L657.3 321.7 L657.7 319.7 L658.2 317.7 L658.7 315.8 L659.2 313.8 L659.8 311.9 L660.3 309.9 L660.9 308.0 L661.5 306.1 L662.2 304.1 L662.8 302.2 L663.5 300.4 L664.3 298.5 L665.1 296.7 L665.9 294.9 L666.9 293.2 L667.8 291.5 L668.8 289.9 L669.9 288.2 L671.0 286.7 L672.2 285.1 L673.4 283.6 L674.7 282.2 L676.0 280.7 L677.3 279.3 L678.7 278.0 L680.1 276.6 L681.6 275.3 L683.1 274.0 L684.6 272.8 L686.2 271.5 L687.7 270.3 L689.4 269.2 L691.0 268.0 L692.6 266.8 L694.3 265.7 L696.0 264.6 L697.7 263.5 L699.5 262.4 L701.2 261.3 L703.0 260.3 L704.7 259.2 L706.5 258.2 L708.3 257.2 L710.1 256.1 L711.9 255.1 L713.7 254.1 L715.5 253.1 L717.3 252.1 L719.1 251.1 L720.9 250.1 L722.7 249.0 L724.5 248.0 L726.3 247.0 L728.1 246.0 L729.8 245.0 L731.6 243.9 L733.3 242.9 L735.1 241.8 L736.8 240.7 L738.5 239.7 L740.2 238.6 L741.9 237.5 L743.5 236.3 L745.2 235.2 L746.8 234.0 L748.4 232.8 L749.9 231.6 L751.5 230.4 L753.0 229.1 L754.5 227.9 L755.9 226.6 L757.4 225.2 L758.8 223.9 L760.1 222.5 L761.5 221.1 L762.7 219.6 L764.0 218.2 L765.2 216.6 L766.4 215.1 L767.5 213.5 L768.6 211.9 L769.7 210.3 L770.8 208.6 L771.8 206.9 L772.7 205.2 L773.7 203.5 L774.6 201.7 L775.5 199.9 L776.3 198.1 L777.1 196.3 L777.9 194.4 L778.7 192.6 L779.4 190.7 L780.1 188.8 L780.8 186.9 L781.5 184.9 L782.1 183.0 L782.7 181.0 L783.3 179.1 L783.8 177.1 L784.4 175.1 L784.9 173.1 L785.4 171.1 L785.8 169.1 L786.3 167.1 L786.7 165.1 L787.1 163.0 L787.5 161.0 L787.9 159.0 L788.3 156.9 L788.6 154.9 L788.9 152.9 L789.2 150.9 L789.5 148.8 L789.8 146.8 L790.1 144.8 L790.3 142.8 L790.6 140.8 L790.8 138.8 L791.0 136.7 L791.2 134.7 L791.3 132.7 L791.5 130.8 L791.6 128.8 L791.7 126.8 L791.7 124.8 L791.8 122.8 L791.8 120.8 L791.8 118.8 L791.8 116.9 L791.7 114.9 L791.7 112.9 L791.6 111.0 L791.5 109.0 L791.3 107.1 L791.1 105.1 L790.9 103.2 L790.7 101.2 L790.4 99.3 L790.2 97.3 L789.8 95.4 L789.5 93.5 L789.1 91.6 L788.7 89.6 L788.2 87.7 L787.8 85.8 L787.2 83.9 L786.7 82.0 L786.1 80.1 L785.5 78.2 L784.9 76.3 L784.2 74.4 L783.5 72.5 L782.8 70.7 L782.1 68.8 L781.3 66.9 L780.5 65.1 L779.7 63.2 L778.8 61.4 L777.9 59.5 L777.1 57.7 L776.1 55.9 L775.2 54.1 L774.3 52.2 L773.3 50.4 L772.3 48.6 L771.3 46.8 L770.3 45.1 L769.3 43.3 L768.3 41.5 L767.2 39.7 L766.1 38.0 L765.1 36.2 L764.0 34.5 L762.9 32.8 L761.8 31.0 L760.7 29.3 L759.6 27.6 L758.5 25.9 L757.3 24.2 L756.2 22.5 L755.1 20.9 L753.9 19.2 L752.8 17.5 L751.7 15.9 L750.5 14.3 L749.4 12.6 L748.3 11.0 L747.2 9.4 L746.0 7.8 L744.9 6.2 L743.8 4.7 L742.7 3.1 L741.6 1.5 L740.5 -0.0 L679.9 -40.0 Z"/>
<path fill="#FF4500" stroke="#000" stroke-width="1.1" d="M592.8 -30.0 L555.9 -0.0 L554.2 1.1 L552.6 2.2 L550.9 3.4 L549.3 4.6 L547.8 5.9 L546.2 7.2 L544.7 8.5 L543.3 9.8 L541.8 11.2 L540.4 12.6 L539.0 14.1 L537.6 15.6 L536.3 17.1 L535.0 18.6 L533.7 20.1 L532.5 21.7 L531.2 23.3 L530.0 24.9 L528.9 26.6 L527.7 28.2 L526.6 29.9 L525.5 31.6 L524.4 33.3 L523.3 35.0 L522.2 36.8 L521.2 38.5 L520.2 40.3 L519.2 42.0 L518.2 43.8 L517.3 45.6 L516.3 47.4 L515.4 49.2 L514.5 51.0 L513.6 52.9 L512.7 54.7 L511.8 56.5 L511.0 58.3 L510.1 60.2 L509.3 62.0 L508.4 63.8 L507.6 65.6 L506.8 67.5 L506.0 69.3 L505.2 71.1 L504.5 72.9 L503.7 74.7 L503.0 76.5 L502.4 78.3 L501.7 80.2 L501.1 82.0 L500.6 83.9 L500.1 85.7 L499.7 87.6 L499.3 89.5 L499.0 91.4 L498.7 93.3 L498.5 95.3 L498.3 97.2 L498.1 99.2 L497.9 101.1 L497.8 103.1 L497.7 105.1 L497.6 107.1 L497.5 109.2 L497.5 111.2 L497.4 113.2 L497.4 115.3 L497.3 117.3 L497.3 119.4 L497.3 121.5 L497.4 123.5 L497.5 125.6 L497.5 127.6 L497.7 129.7 L497.8 131.7 L498.0 133.8 L498.3 135.8 L498.5 137.8 L498.8 139.8 L499.1 141.8 L499.5 143.8 L499.9 145.8 L500.3 147.8 L500.8 149.8 L501.3 151.7 L501.8 153.7 L502.4 155.6 L503.0 157.5 L503.6 159.4 L504.3 161.3 L505.0 163.2 L505.7 165.0 L506.4 166.9 L507.2 168.7 L508.1 170.5 L508.9 172.3 L509.8 174.1 L510.7 175.8 L511.7 177.6 L512.6 179.3 L513.7 181.0 L514.7 182.7 L515.8 184.3 L516.9 185.9 L518.0 187.6 L519.2 189.2 L520.4 190.7 L521.6 192.3 L522.9 193.8 L524.2 195.3 L525.5 196.8 L526.8 198.2 L528.2 199.6 L529.6 201.0 L531.1 202.4 L532.6 203.7 L534.1 205.1 L535.6 206.3 L537.2 207.6 L538.7 208.8 L540.4 210.0 L542.0 211.2 L543.7 212.3 L545.4 213.4 L547.1 214.5 L548.9 215.5 L550.7 216.5 L552.5 217.5 L554.4 218.4 L556.2 219.3 L558.1 220.2 L560.1 220.9 L562.0 221.7 L563.9 222.4 L565.9 223.0 L567.9 223.6 L569.9 224.1 L571.9 224.5 L573.9 224.9 L576.0 225.2 L578.0 225.4 L580.1 225.5 L582.1 225.6 L584.2 225.5 L586.2 225.4 L588.3 225.2 L590.3 224.8 L592.4 224.4 L594.4 223.9 L596.4 223.3 L598.4 222.7 L600.4 221.9 L602.3 221.1 L604.1 220.2 L605.9 219.2 L607.7 218.2 L609.4 217.1 L611.0 215.9 L612.5 214.7 L614.0 213.4 L615.3 212.1 L616.6 210.7 L617.9 209.3 L619.0 207.8 L620.1 206.3 L621.2 204.7 L622.1 203.1 L623.1 201.4 L623.9 199.7 L624.7 198.0 L625.4 196.2 L626.1 194.4 L626.8 192.6 L627.4 190.7 L627.9 188.8 L628.5 186.9 L628.9 185.0 L629.4 183.0 L629.8 181.1 L630.1 179.1 L630.5 177.0 L630.8 175.0 L631.1 173.0 L631.4 170.9 L631.6 168.9 L631.8 166.8 L632.0 164.8 L632.2 162.7 L632.4 160.6 L632.6 158.6 L632.7 156.5 L632.9 154.4 L633.1 152.4 L633.2 150.3 L633.3 148.3 L633.5 146.2 L633.6 144.2 L633.7 142.1 L633.8 140.1 L634.0 138.1 L634.1 136.0 L634.2 134.0 L634.2 132.0 L634.3 129.9 L634.4 127.9 L634.5 125.9 L634.5 123.9 L634.6 121.9 L634.7 119.9 L634.7 117.8 L634.7 115.8 L634.8 113.8 L634.8 111.8 L634.8 109.8 L634.9 107.8 L634.9 105.8 L634.9 103.8 L634.9 101.8 L634.9 99.8 L634.9 97.8 L634.8 95.8 L634.8 93.9 L634.8 91.9 L634.8 89.9 L634.7 87.9 L634.7 85.9 L634.6 83.9 L634.6 81.9 L634.5 79.9 L634.4 77.9 L634.4 76.0 L634.3 74.0 L634.2 72.0 L634.1 70.0 L634.0 68.0 L633.9 66.0 L633.8 64.0 L633.7 62.1 L633.6 60.1 L633.5 58.1 L633.3 56.1 L633.2 54.1 L633.1 52.1 L632.9 50.1 L632.8 48.1 L632.6 46.1 L632.5 44.1 L632.3 42.2 L632.1 40.2 L632.0 38.2 L631.8 36.2 L631.6 34.2 L631.4 32.2 L631.2 30.2 L631.0 28.1 L630.8 26.1 L630.6 24.1 L630.4 22.1 L630.2 20.1 L629.9 18.1 L629.7 16.1 L629.5 14.1 L629.2 12.0 L629.0 10.0 L628.8 8.0 L628.5 5.9 L628.3 3.9 L628.0 1.9 L627.7 -0.2 L621.5 -30.0 Z"/>
<path fill="#FFFF00" stroke="#000" stroke-width="1.1" d="M592.5 -2.1 L594.3 -1.9 L596.0 -1.4 L597.7 -0.9 L599.4 -0.2 L600.9 0.7 L602.5 1.6 L603.9 2.7 L605.3 3.9 L606.7 5.2 L608.0 6.5 L609.3 8.0 L610.5 9.6 L611.7 11.2 L612.8 12.9 L613.9 14.6 L614.9 16.5 L615.9 18.3 L616.8 20.2 L617.7 22.2 L618.6 24.1 L619.4 26.1 L620.1 28.1 L620.9 30.1 L621.5 32.1 L622.2 34.1 L622.8 36.1 L623.3 38.1 L623.9 40.0 L624.4 42.0 L624.8 44.0 L625.2 45.9 L625.6 47.9 L626.0 49.9 L626.3 51.8 L626.6 53.8 L626.9 55.7 L627.1 57.7 L627.3 59.6 L627.5 61.6 L627.7 63.5 L627.9 65.5 L628.0 67.4 L628.1 69.4 L628.2 71.4 L628.3 73.3 L628.4 75.3 L628.4 77.2 L628.5 79.2 L628.5 81.2 L628.5 83.2 L628.5 85.2 L628.5 87.2 L628.5 89.2 L628.5 91.2 L628.5 93.2 L628.5 95.2 L628.4 97.2 L628.4 99.3 L628.4 101.3 L628.4 103.4 L628.3 105.4 L628.3 107.5 L628.3 109.6 L628.2 111.6 L628.2 113.7 L628.1 115.8 L628.0 117.9 L627.9 119.9 L627.9 122.0 L627.7 124.1 L627.6 126.2 L627.5 128.2 L627.3 130.3 L627.1 132.4 L626.9 134.4 L626.7 136.5 L626.4 138.5 L626.1 140.5 L625.8 142.5 L625.5 144.5 L625.1 146.5 L624.7 148.5 L624.3 150.5 L623.9 152.4 L623.4 154.3 L622.8 156.2 L622.3 158.1 L621.6 160.0 L621.0 161.8 L620.3 163.7 L619.6 165.5 L618.8 167.3 L618.0 169.0 L617.1 170.8 L616.2 172.5 L615.2 174.1 L614.2 175.8 L613.2 177.4 L612.0 179.0 L610.9 180.6 L609.6 182.1 L608.3 183.6 L607.0 185.1 L605.6 186.5 L604.1 187.9 L602.6 189.2 L601.0 190.5 L599.4 191.8 L597.7 193.0 L596.0 194.1 L594.2 195.2 L592.4 196.2 L590.5 197.1 L588.7 198.0 L586.8 198.7 L584.8 199.4 L582.9 199.9 L580.9 200.3 L579.0 200.7 L577.0 200.9 L575.0 201.0 L573.1 200.9 L571.1 200.7 L569.1 200.5 L567.1 200.1 L565.2 199.6 L563.2 199.0 L561.3 198.4 L559.4 197.6 L557.5 196.8 L555.6 195.9 L553.7 195.0 L551.9 194.0 L550.1 193.0 L548.3 191.9 L546.5 190.8 L544.8 189.6 L543.1 188.4 L541.4 187.2 L539.8 186.0 L538.2 184.8 L536.6 183.5 L535.1 182.2 L533.6 180.8 L532.1 179.5 L530.6 178.1 L529.2 176.7 L527.9 175.2 L526.5 173.8 L525.2 172.3 L523.9 170.7 L522.7 169.2 L521.5 167.6 L520.4 166.0 L519.2 164.4 L518.1 162.7 L517.1 161.0 L516.1 159.3 L515.1 157.6 L514.2 155.8 L513.3 154.0 L512.4 152.2 L511.6 150.3 L510.8 148.4 L510.1 146.5 L509.4 144.6 L508.7 142.7 L508.1 140.7 L507.6 138.8 L507.0 136.8 L506.5 134.8 L506.1 132.8 L505.7 130.8 L505.4 128.8 L505.1 126.8 L504.8 124.8 L504.6 122.8 L504.4 120.8 L504.3 118.8 L504.2 116.8 L504.1 114.8 L504.1 112.8 L504.2 110.8 L504.2 108.8 L504.3 106.8 L504.5 104.8 L504.7 102.9 L504.9 100.9 L505.2 98.9 L505.5 97.0 L505.8 95.0 L506.1 93.0 L506.5 91.1 L507.0 89.1 L507.4 87.2 L507.9 85.3 L508.4 83.3 L509.0 81.4 L509.5 79.5 L510.1 77.6 L510.8 75.7 L511.4 73.8 L512.1 71.9 L512.8 70.0 L513.5 68.1 L514.3 66.3 L515.0 64.4 L515.8 62.6 L516.6 60.7 L517.5 58.9 L518.4 57.1 L519.2 55.3 L520.2 53.5 L521.1 51.7 L522.1 49.9 L523.0 48.2 L524.1 46.4 L525.1 44.7 L526.2 43.0 L527.2 41.3 L528.4 39.6 L529.5 38.0 L530.7 36.4 L531.9 34.7 L533.1 33.2 L534.3 31.6 L535.6 30.0 L536.9 28.5 L538.2 27.0 L539.6 25.5 L541.0 24.1 L542.4 22.6 L543.8 21.2 L545.3 19.9 L546.8 18.5 L548.3 17.2 L549.9 15.9 L551.5 14.6 L553.1 13.4 L554.7 12.2 L556.4 11.0 L558.1 9.9 L559.8 8.8 L561.6 7.7 L563.4 6.7 L565.2 5.7 L567.1 4.7 L569.0 3.8 L570.9 2.9 L572.9 2.1 L574.8 1.2 L576.8 0.5 L578.8 -0.2 L580.9 -0.8 L582.9 -1.3 L584.9 -1.7 L586.8 -2.0 L588.8 -2.2 L590.7 -2.2 L592.5 -2.1 Z"/>
<path fill="#00FFFF" stroke="#000" stroke-width="1.1" d="M580.3 21.9 L582.1 22.2 L583.9 22.7 L585.7 23.3 L587.4 24.0 L589.1 24.8 L590.8 25.8 L592.4 26.8 L594.0 27.9 L595.5 29.1 L597.0 30.5 L598.4 31.8 L599.7 33.3 L601.0 34.8 L602.2 36.4 L603.4 38.1 L604.4 39.8 L605.5 41.5 L606.4 43.3 L607.3 45.2 L608.2 47.0 L609.0 48.9 L609.7 50.8 L610.4 52.8 L611.1 54.7 L611.7 56.6 L612.2 58.6 L612.7 60.5 L613.2 62.5 L613.6 64.5 L614.0 66.5 L614.3 68.5 L614.6 70.5 L614.9 72.5 L615.1 74.5 L615.3 76.6 L615.5 78.6 L615.6 80.6 L615.7 82.7 L615.8 84.7 L615.9 86.8 L615.9 88.9 L616.0 90.9 L616.0 93.0 L616.0 95.1 L615.9 97.2 L615.9 99.3 L615.9 101.4 L615.8 103.4 L615.7 105.5 L615.6 107.6 L615.5 109.7 L615.4 111.8 L615.2 113.9 L615.0 116.0 L614.8 118.0 L614.5 120.1 L614.2 122.1 L613.8 124.1 L613.4 126.1 L613.0 128.1 L612.5 130.0 L612.0 132.0 L611.3 133.9 L610.7 135.7 L610.0 137.6 L609.2 139.4 L608.3 141.2 L607.4 143.0 L606.4 144.7 L605.3 146.3 L604.1 148.0 L602.9 149.6 L601.6 151.1 L600.2 152.6 L598.7 154.1 L597.2 155.5 L595.7 156.8 L594.0 158.1 L592.4 159.3 L590.6 160.4 L588.9 161.5 L587.1 162.5 L585.3 163.4 L583.4 164.3 L581.5 165.0 L579.6 165.7 L577.7 166.3 L575.8 166.8 L573.9 167.2 L571.9 167.5 L570.0 167.7 L568.1 167.8 L566.2 167.8 L564.3 167.7 L562.4 167.5 L560.6 167.1 L558.7 166.7 L556.9 166.2 L555.2 165.5 L553.4 164.8 L551.7 164.0 L550.0 163.1 L548.3 162.1 L546.6 161.0 L545.0 159.8 L543.5 158.6 L541.9 157.3 L540.4 156.0 L538.9 154.5 L537.5 153.1 L536.1 151.5 L534.7 149.9 L533.4 148.3 L532.2 146.6 L530.9 144.8 L529.8 143.0 L528.6 141.2 L527.5 139.4 L526.5 137.5 L525.5 135.6 L524.6 133.6 L523.7 131.7 L522.9 129.7 L522.1 127.7 L521.4 125.7 L520.7 123.7 L520.1 121.7 L519.6 119.7 L519.1 117.7 L518.7 115.7 L518.3 113.7 L518.0 111.6 L517.8 109.6 L517.6 107.6 L517.5 105.7 L517.4 103.7 L517.4 101.7 L517.4 99.7 L517.5 97.7 L517.6 95.7 L517.7 93.8 L518.0 91.8 L518.2 89.9 L518.5 87.9 L518.9 86.0 L519.2 84.0 L519.7 82.1 L520.1 80.2 L520.6 78.3 L521.2 76.4 L521.7 74.5 L522.3 72.6 L523.0 70.7 L523.6 68.8 L524.4 67.0 L525.1 65.1 L525.9 63.3 L526.8 61.5 L527.6 59.7 L528.6 57.9 L529.6 56.1 L530.6 54.3 L531.7 52.6 L532.8 50.8 L534.0 49.1 L535.2 47.4 L536.6 45.7 L537.9 44.1 L539.3 42.4 L540.8 40.8 L542.3 39.3 L543.9 37.7 L545.5 36.2 L547.1 34.8 L548.8 33.4 L550.6 32.0 L552.3 30.7 L554.1 29.5 L555.9 28.3 L557.7 27.3 L559.6 26.3 L561.5 25.4 L563.3 24.5 L565.2 23.8 L567.1 23.2 L569.0 22.6 L570.9 22.2 L572.8 21.9 L574.7 21.7 L576.6 21.7 L578.4 21.7 L580.3 21.9 Z"/>
<path fill="#FF00FF" stroke="#000" stroke-width="1.1" d="M573.1 41.6 L575.1 41.8 L577.1 42.2 L579.1 42.7 L581.0 43.4 L582.8 44.2 L584.6 45.2 L586.3 46.2 L587.9 47.4 L589.5 48.8 L590.9 50.2 L592.2 51.7 L593.3 53.3 L594.3 55.0 L595.3 56.8 L596.1 58.6 L596.8 60.5 L597.5 62.4 L598.1 64.4 L598.6 66.4 L599.2 68.4 L599.6 70.4 L600.1 72.4 L600.6 74.3 L601.0 76.3 L601.4 78.3 L601.8 80.3 L602.1 82.3 L602.4 84.3 L602.6 86.3 L602.8 88.3 L602.9 90.3 L602.9 92.4 L602.9 94.4 L602.8 96.5 L602.6 98.6 L602.3 100.7 L601.9 102.8 L601.5 104.9 L601.0 107.0 L600.4 109.1 L599.8 111.2 L599.1 113.2 L598.3 115.2 L597.5 117.2 L596.6 119.2 L595.6 121.1 L594.6 122.9 L593.5 124.7 L592.4 126.4 L591.2 128.1 L589.9 129.7 L588.6 131.3 L587.3 132.7 L585.9 134.1 L584.4 135.4 L582.9 136.5 L581.4 137.6 L579.8 138.6 L578.2 139.5 L576.5 140.2 L574.8 140.9 L573.1 141.4 L571.3 141.8 L569.5 142.0 L567.6 142.2 L565.7 142.1 L563.8 142.0 L561.9 141.6 L559.9 141.2 L558.0 140.6 L556.0 139.9 L554.1 139.0 L552.2 138.1 L550.3 137.0 L548.5 135.9 L546.7 134.6 L545.0 133.3 L543.3 131.8 L541.7 130.3 L540.2 128.8 L538.8 127.1 L537.5 125.4 L536.4 123.7 L535.3 121.9 L534.4 120.0 L533.6 118.2 L532.9 116.2 L532.3 114.3 L531.9 112.4 L531.6 110.4 L531.3 108.4 L531.1 106.4 L531.0 104.3 L530.9 102.3 L530.9 100.2 L530.9 98.2 L530.9 96.1 L531.0 94.1 L531.1 92.0 L531.2 90.0 L531.4 87.9 L531.6 85.9 L531.9 83.9 L532.2 81.9 L532.6 79.9 L533.1 77.9 L533.6 75.9 L534.1 74.0 L534.7 72.1 L535.4 70.2 L536.2 68.3 L537.0 66.5 L538.0 64.7 L539.0 62.9 L540.0 61.1 L541.2 59.4 L542.4 57.8 L543.8 56.1 L545.2 54.5 L546.7 53.0 L548.3 51.5 L550.0 50.1 L551.7 48.8 L553.5 47.6 L555.3 46.4 L557.2 45.4 L559.1 44.5 L561.1 43.6 L563.0 42.9 L565.0 42.4 L567.0 41.9 L569.1 41.7 L571.1 41.5 L573.1 41.6 Z"/>
<path fill="#FF00FF" stroke="#000" stroke-width="1.1" d="M423.5 385.0 L425.5 385.2 L427.4 385.5 L429.3 385.9 L431.2 386.4 L433.0 387.0 L434.8 387.6 L436.6 388.4 L438.4 389.2 L440.1 390.1 L441.8 391.1 L443.4 392.1 L445.0 393.2 L446.5 394.4 L448.0 395.7 L449.5 397.0 L450.9 398.3 L452.2 399.8 L453.5 401.3 L454.8 402.8 L455.9 404.4 L457.0 406.0 L458.1 407.7 L459.1 409.4 L460.0 411.1 L460.8 412.9 L461.6 414.7 L462.3 416.6 L463.0 418.5 L463.6 420.4 L464.1 422.3 L464.6 424.3 L465.0 426.3 L465.4 428.3 L465.7 430.3 L466.0 432.3 L466.3 434.4 L466.5 436.4 L466.6 438.5 L466.7 440.6 L466.8 442.6 L466.9 444.7 L466.9 446.8 L466.9 448.9 L466.9 451.0 L466.8 453.1 L466.8 455.1 L466.6 457.2 L466.5 459.3 L466.3 461.3 L466.1 463.4 L465.9 465.4 L465.6 467.4 L465.3 469.4 L465.0 471.4 L464.6 473.4 L464.2 475.4 L463.7 477.3 L463.2 479.3 L462.7 481.2 L462.1 483.1 L461.4 485.0 L460.7 486.9 L460.0 488.8 L459.2 490.6 L458.4 492.4 L457.5 494.2 L456.6 495.9 L455.6 497.6 L454.5 499.3 L453.4 501.0 L452.2 502.6 L451.0 504.1 L449.7 505.6 L448.4 507.1 L447.0 508.5 L445.6 509.9 L444.1 511.2 L442.6 512.5 L441.1 513.7 L439.5 514.9 L437.8 516.0 L436.1 517.0 L434.4 518.0 L432.7 518.9 L430.9 519.8 L429.1 520.6 L427.3 521.3 L425.4 522.0 L423.5 522.6 L421.6 523.1 L419.7 523.5 L417.7 523.9 L415.8 524.1 L413.8 524.3 L411.8 524.5 L409.8 524.5 L407.8 524.5 L405.8 524.4 L403.8 524.2 L401.8 523.9 L399.7 523.6 L397.7 523.2 L395.8 522.7 L393.8 522.2 L391.8 521.6 L389.9 520.9 L387.9 520.2 L386.0 519.4 L384.2 518.5 L382.3 517.6 L380.5 516.6 L378.7 515.6 L377.0 514.5 L375.3 513.3 L373.6 512.1 L372.0 510.9 L370.4 509.6 L368.9 508.2 L367.5 506.8 L366.0 505.4 L364.7 503.9 L363.4 502.3 L362.2 500.7 L361.0 499.1 L360.0 497.4 L358.9 495.7 L358.0 494.0 L357.1 492.2 L356.3 490.4 L355.5 488.5 L354.8 486.7 L354.2 484.8 L353.6 482.8 L353.1 480.9 L352.7 478.9 L352.3 477.0 L352.0 475.0 L351.7 473.0 L351.5 470.9 L351.3 468.9 L351.2 466.9 L351.2 464.8 L351.2 462.8 L351.2 460.7 L351.3 458.7 L351.5 456.6 L351.7 454.6 L351.9 452.6 L352.2 450.6 L352.5 448.6 L352.9 446.6 L353.3 444.6 L353.8 442.6 L354.3 440.7 L354.9 438.8 L355.5 436.8 L356.1 435.0 L356.8 433.1 L357.6 431.2 L358.3 429.4 L359.2 427.6 L360.0 425.8 L360.9 424.1 L361.9 422.3 L362.9 420.6 L363.9 418.9 L365.0 417.3 L366.2 415.6 L367.3 414.0 L368.5 412.4 L369.8 410.9 L371.1 409.4 L372.4 407.9 L373.8 406.5 L375.3 405.0 L376.7 403.7 L378.3 402.3 L379.8 401.0 L381.4 399.7 L383.1 398.5 L384.7 397.3 L386.5 396.1 L388.2 395.0 L390.0 393.9 L391.9 392.9 L393.8 391.9 L395.7 390.9 L397.6 390.1 L399.6 389.2 L401.5 388.5 L403.5 387.8 L405.5 387.1 L407.5 386.6 L409.5 386.1 L411.5 385.7 L413.6 385.4 L415.6 385.1 L417.6 384.9 L419.6 384.9 L421.6 384.9 L423.5 385.0 Z"/>
<path fill="#00FFFF" stroke="#000" stroke-width="1.1" d="M408.2 406.8 L410.1 406.9 L412.0 407.1 L413.9 407.4 L415.8 407.9 L417.6 408.4 L419.4 409.0 L421.3 409.7 L423.0 410.5 L424.8 411.4 L426.5 412.4 L428.2 413.5 L429.9 414.6 L431.5 415.8 L433.1 417.1 L434.7 418.4 L436.2 419.9 L437.6 421.3 L439.1 422.9 L440.4 424.4 L441.8 426.1 L443.0 427.8 L444.2 429.5 L445.4 431.3 L446.5 433.1 L447.5 434.9 L448.5 436.8 L449.4 438.7 L450.2 440.6 L451.0 442.6 L451.7 444.6 L452.3 446.6 L452.8 448.6 L453.3 450.6 L453.8 452.7 L454.1 454.7 L454.4 456.8 L454.6 458.9 L454.7 460.9 L454.7 463.0 L454.7 465.1 L454.6 467.1 L454.4 469.2 L454.2 471.2 L453.8 473.2 L453.4 475.2 L452.9 477.2 L452.4 479.2 L451.7 481.2 L451.0 483.1 L450.3 485.0 L449.5 486.8 L448.6 488.7 L447.6 490.4 L446.6 492.2 L445.5 493.9 L444.4 495.6 L443.2 497.2 L442.0 498.8 L440.7 500.3 L439.3 501.7 L437.9 503.1 L436.5 504.5 L435.0 505.8 L433.5 507.0 L431.9 508.1 L430.3 509.2 L428.6 510.2 L426.9 511.1 L425.2 512.0 L423.4 512.8 L421.6 513.5 L419.8 514.1 L417.9 514.6 L416.0 515.0 L414.1 515.3 L412.2 515.6 L410.2 515.7 L408.2 515.8 L406.2 515.7 L404.2 515.6 L402.2 515.3 L400.2 515.0 L398.1 514.6 L396.1 514.1 L394.1 513.5 L392.2 512.9 L390.2 512.1 L388.3 511.3 L386.4 510.4 L384.5 509.5 L382.7 508.4 L380.9 507.3 L379.2 506.2 L377.6 504.9 L375.9 503.7 L374.4 502.3 L372.9 500.9 L371.5 499.4 L370.2 497.9 L368.9 496.3 L367.7 494.7 L366.6 493.0 L365.6 491.3 L364.6 489.5 L363.7 487.7 L362.9 485.9 L362.2 484.0 L361.5 482.1 L360.9 480.2 L360.4 478.2 L360.0 476.2 L359.6 474.2 L359.3 472.2 L359.1 470.2 L358.9 468.1 L358.8 466.0 L358.8 464.0 L358.8 461.9 L358.9 459.8 L359.1 457.8 L359.4 455.7 L359.7 453.6 L360.1 451.6 L360.5 449.6 L361.1 447.5 L361.7 445.5 L362.3 443.5 L363.0 441.6 L363.8 439.6 L364.6 437.7 L365.5 435.8 L366.5 434.0 L367.5 432.2 L368.6 430.4 L369.7 428.7 L370.9 427.0 L372.2 425.4 L373.5 423.8 L374.8 422.2 L376.2 420.7 L377.7 419.3 L379.2 418.0 L380.8 416.7 L382.4 415.4 L384.1 414.3 L385.8 413.2 L387.5 412.1 L389.3 411.2 L391.1 410.3 L393.0 409.6 L394.8 408.9 L396.7 408.3 L398.6 407.8 L400.5 407.4 L402.5 407.1 L404.4 406.8 L406.3 406.7 L408.2 406.8 Z"/>
<path fill="#FFFF00" stroke="#000" stroke-width="1.1" d="M404.3 419.5 L406.2 419.5 L408.2 419.7 L410.1 420.1 L412.0 420.5 L413.9 421.0 L415.7 421.7 L417.6 422.5 L419.4 423.4 L421.2 424.3 L422.9 425.4 L424.7 426.6 L426.3 427.8 L428.0 429.2 L429.5 430.6 L431.1 432.0 L432.6 433.6 L434.0 435.2 L435.3 436.9 L436.6 438.6 L437.8 440.4 L438.9 442.2 L440.0 444.1 L441.0 446.0 L441.9 448.0 L442.7 449.9 L443.4 452.0 L444.1 454.0 L444.6 456.0 L445.1 458.1 L445.5 460.1 L445.8 462.2 L446.0 464.3 L446.1 466.4 L446.2 468.4 L446.1 470.5 L446.0 472.5 L445.7 474.5 L445.4 476.5 L445.0 478.4 L444.4 480.3 L443.8 482.2 L443.1 484.1 L442.3 485.8 L441.4 487.6 L440.3 489.2 L439.2 490.9 L438.0 492.4 L436.6 493.9 L435.2 495.3 L433.7 496.7 L432.1 497.9 L430.4 499.1 L428.7 500.3 L426.9 501.3 L425.1 502.3 L423.1 503.2 L421.2 504.0 L419.2 504.7 L417.2 505.3 L415.2 505.8 L413.1 506.3 L411.0 506.7 L409.0 506.9 L406.9 507.1 L404.8 507.2 L402.8 507.1 L400.7 507.0 L398.7 506.8 L396.7 506.4 L394.8 506.0 L392.9 505.5 L391.1 504.8 L389.3 504.0 L387.5 503.2 L385.8 502.2 L384.2 501.1 L382.6 500.0 L381.1 498.7 L379.7 497.4 L378.3 496.0 L377.0 494.5 L375.7 493.0 L374.5 491.4 L373.4 489.7 L372.3 488.0 L371.3 486.2 L370.4 484.4 L369.6 482.5 L368.8 480.6 L368.2 478.7 L367.6 476.7 L367.0 474.7 L366.6 472.7 L366.2 470.6 L366.0 468.6 L365.8 466.5 L365.7 464.4 L365.7 462.3 L365.7 460.2 L365.9 458.2 L366.2 456.1 L366.5 454.0 L367.0 452.0 L367.5 450.0 L368.2 448.0 L368.9 446.1 L369.8 444.1 L370.7 442.3 L371.7 440.4 L372.8 438.6 L374.0 436.9 L375.3 435.2 L376.6 433.6 L378.0 432.1 L379.5 430.6 L381.0 429.2 L382.6 427.8 L384.2 426.6 L385.9 425.4 L387.6 424.3 L389.4 423.4 L391.2 422.5 L393.0 421.7 L394.8 421.0 L396.7 420.5 L398.6 420.1 L400.5 419.7 L402.4 419.5 L404.3 419.5 Z"/>
<path fill="#FF4500" stroke="#000" stroke-width="1.1" d="M404.1 434.8 L406.1 434.8 L408.0 435.1 L410.0 435.4 L411.9 436.0 L413.8 436.7 L415.7 437.5 L417.6 438.5 L419.4 439.6 L421.2 440.8 L422.9 442.1 L424.6 443.6 L426.2 445.1 L427.7 446.7 L429.2 448.4 L430.5 450.1 L431.8 451.9 L433.0 453.8 L434.0 455.7 L435.0 457.6 L435.8 459.6 L436.4 461.6 L437.0 463.5 L437.3 465.5 L437.6 467.5 L437.6 469.5 L437.5 471.4 L437.3 473.3 L436.9 475.2 L436.3 477.0 L435.6 478.8 L434.7 480.5 L433.7 482.2 L432.6 483.8 L431.4 485.3 L430.1 486.8 L428.7 488.1 L427.2 489.4 L425.6 490.6 L423.9 491.7 L422.2 492.7 L420.4 493.6 L418.6 494.4 L416.7 495.0 L414.8 495.6 L412.8 496.0 L410.9 496.2 L408.9 496.4 L406.9 496.3 L404.9 496.2 L402.9 495.9 L400.9 495.4 L399.0 494.9 L397.1 494.2 L395.2 493.4 L393.4 492.5 L391.6 491.4 L389.9 490.3 L388.2 489.1 L386.6 487.8 L385.1 486.4 L383.7 484.9 L382.4 483.4 L381.2 481.8 L380.1 480.1 L379.1 478.4 L378.2 476.6 L377.5 474.8 L376.9 472.9 L376.4 471.0 L376.1 469.0 L376.0 467.1 L376.0 465.1 L376.2 463.1 L376.6 461.1 L377.0 459.1 L377.6 457.2 L378.4 455.2 L379.2 453.3 L380.2 451.4 L381.2 449.6 L382.4 447.9 L383.7 446.2 L385.1 444.6 L386.5 443.1 L388.0 441.7 L389.6 440.4 L391.3 439.2 L393.0 438.1 L394.8 437.2 L396.6 436.4 L398.4 435.7 L400.3 435.3 L402.2 434.9 L404.1 434.8 Z"/>
<path fill="#FFFFFF" stroke="#000" stroke-width="1.1" d="M433.9 468.5 L432.7 467.2 L431.4 465.8 L430.1 464.3 L428.8 462.7 L427.4 461.2 L426.0 459.6 L424.6 458.0 L423.1 456.4 L421.5 454.9 L419.9 453.4 L418.2 452.1 L416.5 450.8 L414.7 449.7 L412.8 448.7 L410.9 447.9 L408.9 447.3 L407.0 446.9 L405.0 446.8 L403.0 446.9 L401.1 447.3 L399.2 448.0 L397.4 448.8 L395.6 449.8 L393.9 451.0 L392.3 452.4 L390.8 453.9 L389.5 455.5 L388.3 457.2 L387.2 459.0 L386.3 460.9 L385.7 462.8 L385.2 464.8 L385.0 466.8 L385.0 468.8 L385.2 470.8 L385.7 472.7 L386.4 474.6 L387.3 476.5 L388.3 478.3 L389.5 480.0 L390.9 481.6 L392.4 483.0 L394.0 484.4 L395.8 485.6 L397.6 486.7 L399.4 487.6 L401.4 488.3 L403.3 488.8 L405.3 489.1 L407.3 489.2 L409.3 489.0 L411.3 488.6 L413.2 488.1 L415.1 487.3 L417.0 486.4 L418.8 485.3 L420.6 484.1 L422.3 482.8 L424.0 481.4 L425.6 479.9 L427.1 478.3 L428.5 476.7 L429.8 475.1 L431.0 473.4 L432.1 471.7 L433.0 470.1 L433.9 468.5 Z"/>
<path fill="#FF4500" stroke="#000" stroke-width="1.1" d="M688.2 -30.0 L725.1 -0.0 L726.8 1.1 L728.4 2.2 L730.1 3.4 L731.7 4.6 L733.2 5.9 L734.8 7.2 L736.3 8.5 L737.7 9.8 L739.2 11.2 L740.6 12.6 L742.0 14.1 L743.4 15.6 L744.7 17.1 L746.0 18.6 L747.3 20.1 L748.5 21.7 L749.8 23.3 L751.0 24.9 L752.1 26.6 L753.3 28.2 L754.4 29.9 L755.5 31.6 L756.6 33.3 L757.7 35.0 L758.8 36.8 L759.8 38.5 L760.8 40.3 L761.8 42.0 L762.8 43.8 L763.7 45.6 L764.7 47.4 L765.6 49.2 L766.5 51.0 L767.4 52.9 L768.3 54.7 L769.2 56.5 L770.0 58.3 L770.9 60.2 L771.7 62.0 L772.6 63.8 L773.4 65.6 L774.2 67.5 L775.0 69.3 L775.8 71.1 L776.5 72.9 L777.3 74.7 L778.0 76.5 L778.6 78.3 L779.3 80.2 L779.9 82.0 L780.4 83.9 L780.9 85.7 L781.3 87.6 L781.7 89.5 L782.0 91.4 L782.3 93.3 L782.5 95.3 L782.7 97.2 L782.9 99.2 L783.1 101.1 L783.2 103.1 L783.3 105.1 L783.4 107.1 L783.5 109.2 L783.5 111.2 L783.6 113.2 L783.6 115.3 L783.7 117.3 L783.7 119.4 L783.7 121.5 L783.6 123.5 L783.5 125.6 L783.5 127.6 L783.3 129.7 L783.2 131.7 L783.0 133.8 L782.7 135.8 L782.5 137.8 L782.2 139.8 L781.9 141.8 L781.5 143.8 L781.1 145.8 L780.7 147.8 L780.2 149.8 L779.7 151.7 L779.2 153.7 L778.6 155.6 L778.0 157.5 L777.4 159.4 L776.7 161.3 L776.0 163.2 L775.3 165.0 L774.6 166.9 L773.8 168.7 L772.9 170.5 L772.1 172.3 L771.2 174.1 L770.3 175.8 L769.3 177.6 L768.4 179.3 L767.3 181.0 L766.3 182.7 L765.2 184.3 L764.1 185.9 L763.0 187.6 L761.8 189.2 L760.6 190.7 L759.4 192.3 L758.1 193.8 L756.8 195.3 L755.5 196.8 L754.2 198.2 L752.8 199.6 L751.4 201.0 L749.9 202.4 L748.4 203.7 L746.9 205.1 L745.4 206.3 L743.8 207.6 L742.3 208.8 L740.6 210.0 L739.0 211.2 L737.3 212.3 L735.6 213.4 L733.9 214.5 L732.1 215.5 L730.3 216.5 L728.5 217.5 L726.6 218.4 L724.8 219.3 L722.9 220.2 L720.9 220.9 L719.0 221.7 L717.1 222.4 L715.1 223.0 L713.1 223.6 L711.1 224.1 L709.1 224.5 L707.1 224.9 L705.0 225.2 L703.0 225.4 L700.9 225.5 L698.9 225.6 L696.8 225.5 L694.8 225.4 L692.7 225.2 L690.7 224.8 L688.6 224.4 L686.6 223.9 L684.6 223.3 L682.6 222.7 L680.6 221.9 L678.7 221.1 L676.9 220.2 L675.1 219.2 L673.3 218.2 L671.6 217.1 L670.0 215.9 L668.5 214.7 L667.0 213.4 L665.7 212.1 L664.4 210.7 L663.1 209.3 L662.0 207.8 L660.9 206.3 L659.8 204.7 L658.9 203.1 L657.9 201.4 L657.1 199.7 L656.3 198.0 L655.6 196.2 L654.9 194.4 L654.2 192.6 L653.6 190.7 L653.1 188.8 L652.5 186.9 L652.1 185.0 L651.6 183.0 L651.2 181.1 L650.9 179.1 L650.5 177.0 L650.2 175.0 L649.9 173.0 L649.6 170.9 L649.4 168.9 L649.2 166.8 L649.0 164.8 L648.8 162.7 L648.6 160.6 L648.4 158.6 L648.3 156.5 L648.1 154.4 L647.9 152.4 L647.8 150.3 L647.7 148.3 L647.5 146.2 L647.4 144.2 L647.3 142.1 L647.2 140.1 L647.0 138.1 L646.9 136.0 L646.8 134.0 L646.8 132.0 L646.7 129.9 L646.6 127.9 L646.5 125.9 L646.5 123.9 L646.4 121.9 L646.3 119.9 L646.3 117.8 L646.3 115.8 L646.2 113.8 L646.2 111.8 L646.2 109.8 L646.1 107.8 L646.1 105.8 L646.1 103.8 L646.1 101.8 L646.1 99.8 L646.1 97.8 L646.2 95.8 L646.2 93.9 L646.2 91.9 L646.2 89.9 L646.3 87.9 L646.3 85.9 L646.4 83.9 L646.4 81.9 L646.5 79.9 L646.6 77.9 L646.6 76.0 L646.7 74.0 L646.8 72.0 L646.9 70.0 L647.0 68.0 L647.1 66.0 L647.2 64.0 L647.3 62.1 L647.4 60.1 L647.5 58.1 L647.7 56.1 L647.8 54.1 L647.9 52.1 L648.1 50.1 L648.2 48.1 L648.4 46.1 L648.5 44.1 L648.7 42.2 L648.9 40.2 L649.0 38.2 L649.2 36.2 L649.4 34.2 L649.6 32.2 L649.8 30.2 L650.0 28.1 L650.2 26.1 L650.4 24.1 L650.6 22.1 L650.8 20.1 L651.1 18.1 L651.3 16.1 L651.5 14.1 L651.8 12.0 L652.0 10.0 L652.2 8.0 L652.5 5.9 L652.7 3.9 L653.0 1.9 L653.3 -0.2 L659.5 -30.0 Z"/>
<path fill="#FFFF00" stroke="#000" stroke-width="1.1" d="M688.5 -2.1 L686.7 -1.9 L685.0 -1.4 L683.3 -0.9 L681.6 -0.2 L680.1 0.7 L678.5 1.6 L677.1 2.7 L675.7 3.9 L674.3 5.2 L673.0 6.5 L671.7 8.0 L670.5 9.6 L669.3 11.2 L668.2 12.9 L667.1 14.6 L666.1 16.5 L665.1 18.3 L664.2 20.2 L663.3 22.2 L662.4 24.1 L661.6 26.1 L660.9 28.1 L660.1 30.1 L659.5 32.1 L658.8 34.1 L658.2 36.1 L657.7 38.1 L657.1 40.0 L656.6 42.0 L656.2 44.0 L655.8 45.9 L655.4 47.9 L655.0 49.9 L654.7 51.8 L654.4 53.8 L654.1 55.7 L653.9 57.7 L653.7 59.6 L653.5 61.6 L653.3 63.5 L653.1 65.5 L653.0 67.4 L652.9 69.4 L652.8 71.4 L652.7 73.3 L652.6 75.3 L652.6 77.2 L652.5 79.2 L652.5 81.2 L652.5 83.2 L652.5 85.2 L652.5 87.2 L652.5 89.2 L652.5 91.2 L652.5 93.2 L652.5 95.2 L652.6 97.2 L652.6 99.3 L652.6 101.3 L652.6 103.4 L652.7 105.4 L652.7 107.5 L652.7 109.6 L652.8 111.6 L652.8 113.7 L652.9 115.8 L653.0 117.9 L653.1 119.9 L653.1 122.0 L653.3 124.1 L653.4 126.2 L653.5 128.2 L653.7 130.3 L653.9 132.4 L654.1 134.4 L654.3 136.5 L654.6 138.5 L654.9 140.5 L655.2 142.5 L655.5 144.5 L655.9 146.5 L656.3 148.5 L656.7 150.5 L657.1 152.4 L657.6 154.3 L658.2 156.2 L658.7 158.1 L659.4 160.0 L660.0 161.8 L660.7 163.7 L661.4 165.5 L662.2 167.3 L663.0 169.0 L663.9 170.8 L664.8 172.5 L665.8 174.1 L666.8 175.8 L667.8 177.4 L669.0 179.0 L670.1 180.6 L671.4 182.1 L672.7 183.6 L674.0 185.1 L675.4 186.5 L676.9 187.9 L678.4 189.2 L680.0 190.5 L681.6 191.8 L683.3 193.0 L685.0 194.1 L686.8 195.2 L688.6 196.2 L690.5 197.1 L692.3 198.0 L694.2 198.7 L696.2 199.4 L698.1 199.9 L700.1 200.3 L702.0 200.7 L704.0 200.9 L706.0 201.0 L707.9 200.9 L709.9 200.7 L711.9 200.5 L713.9 200.1 L715.8 199.6 L717.8 199.0 L719.7 198.4 L721.6 197.6 L723.5 196.8 L725.4 195.9 L727.3 195.0 L729.1 194.0 L730.9 193.0 L732.7 191.9 L734.5 190.8 L736.2 189.6 L737.9 188.4 L739.6 187.2 L741.2 186.0 L742.8 184.8 L744.4 183.5 L745.9 182.2 L747.4 180.8 L748.9 179.5 L750.4 178.1 L751.8 176.7 L753.1 175.2 L754.5 173.8 L755.8 172.3 L757.1 170.7 L758.3 169.2 L759.5 167.6 L760.6 166.0 L761.8 164.4 L762.9 162.7 L763.9 161.0 L764.9 159.3 L765.9 157.6 L766.8 155.8 L767.7 154.0 L768.6 152.2 L769.4 150.3 L770.2 148.4 L770.9 146.5 L771.6 144.6 L772.3 142.7 L772.9 140.7 L773.4 138.8 L774.0 136.8 L774.5 134.8 L774.9 132.8 L775.3 130.8 L775.6 128.8 L775.9 126.8 L776.2 124.8 L776.4 122.8 L776.6 120.8 L776.7 118.8 L776.8 116.8 L776.9 114.8 L776.9 112.8 L776.8 110.8 L776.8 108.8 L776.7 106.8 L776.5 104.8 L776.3 102.9 L776.1 100.9 L775.8 98.9 L775.5 97.0 L775.2 95.0 L774.9 93.0 L774.5 91.1 L774.0 89.1 L773.6 87.2 L773.1 85.3 L772.6 83.3 L772.0 81.4 L771.5 79.5 L770.9 77.6 L770.2 75.7 L769.6 73.8 L768.9 71.9 L768.2 70.0 L767.5 68.1 L766.7 66.3 L766.0 64.4 L765.2 62.6 L764.4 60.7 L763.5 58.9 L762.6 57.1 L761.8 55.3 L760.8 53.5 L759.9 51.7 L758.9 49.9 L758.0 48.2 L756.9 46.4 L755.9 44.7 L754.8 43.0 L753.8 41.3 L752.6 39.6 L751.5 38.0 L750.3 36.4 L749.1 34.7 L747.9 33.2 L746.7 31.6 L745.4 30.0 L744.1 28.5 L742.8 27.0 L741.4 25.5 L740.0 24.1 L738.6 22.6 L737.2 21.2 L735.7 19.9 L734.2 18.5 L732.7 17.2 L731.1 15.9 L729.5 14.6 L727.9 13.4 L726.3 12.2 L724.6 11.0 L722.9 9.9 L721.2 8.8 L719.4 7.7 L717.6 6.7 L715.8 5.7 L713.9 4.7 L712.0 3.8 L710.1 2.9 L708.1 2.1 L706.2 1.2 L704.2 0.5 L702.2 -0.2 L700.1 -0.8 L698.1 -1.3 L696.1 -1.7 L694.2 -2.0 L692.2 -2.2 L690.3 -2.2 L688.5 -2.1 Z"/>
<path fill="#00FFFF" stroke="#000" stroke-width="1.1" d="M700.7 21.9 L698.9 22.2 L697.1 22.7 L695.3 23.3 L693.6 24.0 L691.9 24.8 L690.2 25.8 L688.6 26.8 L687.0 27.9 L685.5 29.1 L684.0 30.5 L682.6 31.8 L681.3 33.3 L680.0 34.8 L678.8 36.4 L677.6 38.1 L676.6 39.8 L675.5 41.5 L674.6 43.3 L673.7 45.2 L672.8 47.0 L672.0 48.9 L671.3 50.8 L670.6 52.8 L669.9 54.7 L669.3 56.6 L668.8 58.6 L668.3 60.5 L667.8 62.5 L667.4 64.5 L667.0 66.5 L666.7 68.5 L666.4 70.5 L666.1 72.5 L665.9 74.5 L665.7 76.6 L665.5 78.6 L665.4 80.6 L665.3 82.7 L665.2 84.7 L665.1 86.8 L665.1 88.9 L665.0 90.9 L665.0 93.0 L665.0 95.1 L665.1 97.2 L665.1 99.3 L665.1 101.4 L665.2 103.4 L665.3 105.5 L665.4 107.6 L665.5 109.7 L665.6 111.8 L665.8 113.9 L666.0 116.0 L666.2 118.0 L666.5 120.1 L666.8 122.1 L667.2 124.1 L667.6 126.1 L668.0 128.1 L668.5 130.0 L669.0 132.0 L669.7 133.9 L670.3 135.7 L671.0 137.6 L671.8 139.4 L672.7 141.2 L673.6 143.0 L674.6 144.7 L675.7 146.3 L676.9 148.0 L678.1 149.6 L679.4 151.1 L680.8 152.6 L682.3 154.1 L683.8 155.5 L685.3 156.8 L687.0 158.1 L688.6 159.3 L690.4 160.4 L692.1 161.5 L693.9 162.5 L695.7 163.4 L697.6 164.3 L699.5 165.0 L701.4 165.7 L703.3 166.3 L705.2 166.8 L707.1 167.2 L709.1 167.5 L711.0 167.7 L712.9 167.8 L714.8 167.8 L716.7 167.7 L718.6 167.5 L720.4 167.1 L722.3 166.7 L724.1 166.2 L725.8 165.5 L727.6 164.8 L729.3 164.0 L731.0 163.1 L732.7 162.1 L734.4 161.0 L736.0 159.8 L737.5 158.6 L739.1 157.3 L740.6 156.0 L742.1 154.5 L743.5 153.1 L744.9 151.5 L746.3 149.9 L747.6 148.3 L748.8 146.6 L750.1 144.8 L751.2 143.0 L752.4 141.2 L753.5 139.4 L754.5 137.5 L755.5 135.6 L756.4 133.6 L757.3 131.7 L758.1 129.7 L758.9 127.7 L759.6 125.7 L760.3 123.7 L760.9 121.7 L761.4 119.7 L761.9 117.7 L762.3 115.7 L762.7 113.7 L763.0 111.6 L763.2 109.6 L763.4 107.6 L763.5 105.7 L763.6 103.7 L763.6 101.7 L763.6 99.7 L763.5 97.7 L763.4 95.7 L763.3 93.8 L763.0 91.8 L762.8 89.9 L762.5 87.9 L762.1 86.0 L761.8 84.0 L761.3 82.1 L760.9 80.2 L760.4 78.3 L759.8 76.4 L759.3 74.5 L758.7 72.6 L758.0 70.7 L757.4 68.8 L756.6 67.0 L755.9 65.1 L755.1 63.3 L754.2 61.5 L753.4 59.7 L752.4 57.9 L751.4 56.1 L750.4 54.3 L749.3 52.6 L748.2 50.8 L747.0 49.1 L745.8 47.4 L744.4 45.7 L743.1 44.1 L741.7 42.4 L740.2 40.8 L738.7 39.3 L737.1 37.7 L735.5 36.2 L733.9 34.8 L732.2 33.4 L730.4 32.0 L728.7 30.7 L726.9 29.5 L725.1 28.3 L723.3 27.3 L721.4 26.3 L719.5 25.4 L717.7 24.5 L715.8 23.8 L713.9 23.2 L712.0 22.6 L710.1 22.2 L708.2 21.9 L706.3 21.7 L704.4 21.7 L702.6 21.7 L700.7 21.9 Z"/>
<path fill="#FF00FF" stroke="#000" stroke-width="1.1" d="M707.9 41.6 L705.9 41.8 L703.9 42.2 L701.9 42.7 L700.0 43.4 L698.2 44.2 L696.4 45.2 L694.7 46.2 L693.1 47.4 L691.5 48.8 L690.1 50.2 L688.8 51.7 L687.7 53.3 L686.7 55.0 L685.7 56.8 L684.9 58.6 L684.2 60.5 L683.5 62.4 L682.9 64.4 L682.4 66.4 L681.8 68.4 L681.4 70.4 L680.9 72.4 L680.4 74.3 L680.0 76.3 L679.6 78.3 L679.2 80.3 L678.9 82.3 L678.6 84.3 L678.4 86.3 L678.2 88.3 L678.1 90.3 L678.1 92.4 L678.1 94.4 L678.2 96.5 L678.4 98.6 L678.7 100.7 L679.1 102.8 L679.5 104.9 L680.0 107.0 L680.6 109.1 L681.2 111.2 L681.9 113.2 L682.7 115.2 L683.5 117.2 L684.4 119.2 L685.4 121.1 L686.4 122.9 L687.5 124.7 L688.6 126.4 L689.8 128.1 L691.1 129.7 L692.4 131.3 L693.7 132.7 L695.1 134.1 L696.6 135.4 L698.1 136.5 L699.6 137.6 L701.2 138.6 L702.8 139.5 L704.5 140.2 L706.2 140.9 L707.9 141.4 L709.7 141.8 L711.5 142.0 L713.4 142.2 L715.3 142.1 L717.2 142.0 L719.1 141.6 L721.1 141.2 L723.0 140.6 L725.0 139.9 L726.9 139.0 L728.8 138.1 L730.7 137.0 L732.5 135.9 L734.3 134.6 L736.0 133.3 L737.7 131.8 L739.3 130.3 L740.8 128.8 L742.2 127.1 L743.5 125.4 L744.6 123.7 L745.7 121.9 L746.6 120.0 L747.4 118.2 L748.1 116.2 L748.7 114.3 L749.1 112.4 L749.4 110.4 L749.7 108.4 L749.9 106.4 L750.0 104.3 L750.1 102.3 L750.1 100.2 L750.1 98.2 L750.1 96.1 L750.0 94.1 L749.9 92.0 L749.8 90.0 L749.6 87.9 L749.4 85.9 L749.1 83.9 L748.8 81.9 L748.4 79.9 L747.9 77.9 L747.4 75.9 L746.9 74.0 L746.3 72.1 L745.6 70.2 L744.8 68.3 L744.0 66.5 L743.0 64.7 L742.0 62.9 L741.0 61.1 L739.8 59.4 L738.6 57.8 L737.2 56.1 L735.8 54.5 L734.3 53.0 L732.7 51.5 L731.0 50.1 L729.3 48.8 L727.5 47.6 L725.7 46.4 L723.8 45.4 L721.9 44.5 L719.9 43.6 L718.0 42.9 L716.0 42.4 L714.0 41.9 L711.9 41.7 L709.9 41.5 L707.9 41.6 Z"/>
<path fill="#FF00FF" stroke="#000" stroke-width="1.1" d="M857.5 385.0 L855.5 385.2 L853.6 385.5 L851.7 385.9 L849.8 386.4 L848.0 387.0 L846.2 387.6 L844.4 388.4 L842.6 389.2 L840.9 390.1 L839.2 391.1 L837.6 392.1 L836.0 393.2 L834.5 394.4 L833.0 395.7 L831.5 397.0 L830.1 398.3 L828.8 399.8 L827.5 401.3 L826.2 402.8 L825.1 404.4 L824.0 406.0 L822.9 407.7 L821.9 409.4 L821.0 411.1 L820.2 412.9 L819.4 414.7 L818.7 416.6 L818.0 418.5 L817.4 420.4 L816.9 422.3 L816.4 424.3 L816.0 426.3 L815.6 428.3 L815.3 430.3 L815.0 432.3 L814.7 434.4 L814.5 436.4 L814.4 438.5 L814.3 440.6 L814.2 442.6 L814.1 444.7 L814.1 446.8 L814.1 448.9 L814.1 451.0 L814.2 453.1 L814.2 455.1 L814.4 457.2 L814.5 459.3 L814.7 461.3 L814.9 463.4 L815.1 465.4 L815.4 467.4 L815.7 469.4 L816.0 471.4 L816.4 473.4 L816.8 475.4 L817.3 477.3 L817.8 479.3 L818.3 481.2 L818.9 483.1 L819.6 485.0 L820.3 486.9 L821.0 488.8 L821.8 490.6 L822.6 492.4 L823.5 494.2 L824.4 495.9 L825.4 497.6 L826.5 499.3 L827.6 501.0 L828.8 502.6 L830.0 504.1 L831.3 505.6 L832.6 507.1 L834.0 508.5 L835.4 509.9 L836.9 511.2 L838.4 512.5 L839.9 513.7 L841.5 514.9 L843.2 516.0 L844.9 517.0 L846.6 518.0 L848.3 518.9 L850.1 519.8 L851.9 520.6 L853.7 521.3 L855.6 522.0 L857.5 522.6 L859.4 523.1 L861.3 523.5 L863.3 523.9 L865.2 524.1 L867.2 524.3 L869.2 524.5 L871.2 524.5 L873.2 524.5 L875.2 524.4 L877.2 524.2 L879.2 523.9 L881.3 523.6 L883.3 523.2 L885.2 522.7 L887.2 522.2 L889.2 521.6 L891.1 520.9 L893.1 520.2 L895.0 519.4 L896.8 518.5 L898.7 517.6 L900.5 516.6 L902.3 515.6 L904.0 514.5 L905.7 513.3 L907.4 512.1 L909.0 510.9 L910.6 509.6 L912.1 508.2 L913.5 506.8 L915.0 505.4 L916.3 503.9 L917.6 502.3 L918.8 500.7 L920.0 499.1 L921.0 497.4 L922.1 495.7 L923.0 494.0 L923.9 492.2 L924.7 490.4 L925.5 488.5 L926.2 486.7 L926.8 484.8 L927.4 482.8 L927.9 480.9 L928.3 478.9 L928.7 477.0 L929.0 475.0 L929.3 473.0 L929.5 470.9 L929.7 468.9 L929.8 466.9 L929.8 464.8 L929.8 462.8 L929.8 460.7 L929.7 458.7 L929.5 456.6 L929.3 454.6 L929.1 452.6 L928.8 450.6 L928.5 448.6 L928.1 446.6 L927.7 444.6 L927.2 442.6 L926.7 440.7 L926.1 438.8 L925.5 436.8 L924.9 435.0 L924.2 433.1 L923.4 431.2 L922.7 429.4 L921.8 427.6 L921.0 425.8 L920.1 424.1 L919.1 422.3 L918.1 420.6 L917.1 418.9 L916.0 417.3 L914.8 415.6 L913.7 414.0 L912.5 412.4 L911.2 410.9 L909.9 409.4 L908.6 407.9 L907.2 406.5 L905.7 405.0 L904.3 403.7 L902.7 402.3 L901.2 401.0 L899.6 399.7 L897.9 398.5 L896.3 397.3 L894.5 396.1 L892.8 395.0 L891.0 393.9 L889.1 392.9 L887.2 391.9 L885.3 390.9 L883.4 390.1 L881.4 389.2 L879.5 388.5 L877.5 387.8 L875.5 387.1 L873.5 386.6 L871.5 386.1 L869.5 385.7 L867.4 385.4 L865.4 385.1 L863.4 384.9 L861.4 384.9 L859.4 384.9 L857.5 385.0 Z"/>
<path fill="#00FFFF" stroke="#000" stroke-width="1.1" d="M872.8 406.8 L870.9 406.9 L869.0 407.1 L867.1 407.4 L865.2 407.9 L863.4 408.4 L861.6 409.0 L859.7 409.7 L858.0 410.5 L856.2 411.4 L854.5 412.4 L852.8 413.5 L851.1 414.6 L849.5 415.8 L847.9 417.1 L846.3 418.4 L844.8 419.9 L843.4 421.3 L841.9 422.9 L840.6 424.4 L839.2 426.1 L838.0 427.8 L836.8 429.5 L835.6 431.3 L834.5 433.1 L833.5 434.9 L832.5 436.8 L831.6 438.7 L830.8 440.6 L830.0 442.6 L829.3 444.6 L828.7 446.6 L828.2 448.6 L827.7 450.6 L827.2 452.7 L826.9 454.7 L826.6 456.8 L826.4 458.9 L826.3 460.9 L826.3 463.0 L826.3 465.1 L826.4 467.1 L826.6 469.2 L826.8 471.2 L827.2 473.2 L827.6 475.2 L828.1 477.2 L828.6 479.2 L829.3 481.2 L830.0 483.1 L830.7 485.0 L831.5 486.8 L832.4 488.7 L833.4 490.4 L834.4 492.2 L835.5 493.9 L836.6 495.6 L837.8 497.2 L839.0 498.8 L840.3 500.3 L841.7 501.7 L843.1 503.1 L844.5 504.5 L846.0 505.8 L847.5 507.0 L849.1 508.1 L850.7 509.2 L852.4 510.2 L854.1 511.1 L855.8 512.0 L857.6 512.8 L859.4 513.5 L861.2 514.1 L863.1 514.6 L865.0 515.0 L866.9 515.3 L868.8 515.6 L870.8 515.7 L872.8 515.8 L874.8 515.7 L876.8 515.6 L878.8 515.3 L880.8 515.0 L882.9 514.6 L884.9 514.1 L886.9 513.5 L888.8 512.9 L890.8 512.1 L892.7 511.3 L894.6 510.4 L896.5 509.5 L898.3 508.4 L900.1 507.3 L901.8 506.2 L903.4 504.9 L905.1 503.7 L906.6 502.3 L908.1 500.9 L909.5 499.4 L910.8 497.9 L912.1 496.3 L913.3 494.7 L914.4 493.0 L915.4 491.3 L916.4 489.5 L917.3 487.7 L918.1 485.9 L918.8 484.0 L919.5 482.1 L920.1 480.2 L920.6 478.2 L921.0 476.2 L921.4 474.2 L921.7 472.2 L921.9 470.2 L922.1 468.1 L922.2 466.0 L922.2 464.0 L922.2 461.9 L922.1 459.8 L921.9 457.8 L921.6 455.7 L921.3 453.6 L920.9 451.6 L920.5 449.6 L919.9 447.5 L919.3 445.5 L918.7 443.5 L918.0 441.6 L917.2 439.6 L916.4 437.7 L915.5 435.8 L914.5 434.0 L913.5 432.2 L912.4 430.4 L911.3 428.7 L910.1 427.0 L908.8 425.4 L907.5 423.8 L906.2 422.2 L904.8 420.7 L903.3 419.3 L901.8 418.0 L900.2 416.7 L898.6 415.4 L896.9 414.3 L895.2 413.2 L893.5 412.1 L891.7 411.2 L889.9 410.3 L888.0 409.6 L886.2 408.9 L884.3 408.3 L882.4 407.8 L880.5 407.4 L878.5 407.1 L876.6 406.8 L874.7 406.7 L872.8 406.8 Z"/>
<path fill="#FFFF00" stroke="#000" stroke-width="1.1" d="M876.7 419.5 L874.8 419.5 L872.8 419.7 L870.9 420.1 L869.0 420.5 L867.1 421.0 L865.3 421.7 L863.4 422.5 L861.6 423.4 L859.8 424.3 L858.1 425.4 L856.3 426.6 L854.7 427.8 L853.0 429.2 L851.5 430.6 L849.9 432.0 L848.4 433.6 L847.0 435.2 L845.7 436.9 L844.4 438.6 L843.2 440.4 L842.1 442.2 L841.0 444.1 L840.0 446.0 L839.1 448.0 L838.3 449.9 L837.6 452.0 L836.9 454.0 L836.4 456.0 L835.9 458.1 L835.5 460.1 L835.2 462.2 L835.0 464.3 L834.9 466.4 L834.8 468.4 L834.9 470.5 L835.0 472.5 L835.3 474.5 L835.6 476.5 L836.0 478.4 L836.6 480.3 L837.2 482.2 L837.9 484.1 L838.7 485.8 L839.6 487.6 L840.7 489.2 L841.8 490.9 L843.0 492.4 L844.4 493.9 L845.8 495.3 L847.3 496.7 L848.9 497.9 L850.6 499.1 L852.3 500.3 L854.1 501.3 L855.9 502.3 L857.9 503.2 L859.8 504.0 L861.8 504.7 L863.8 505.3 L865.8 505.8 L867.9 506.3 L870.0 506.7 L872.0 506.9 L874.1 507.1 L876.2 507.2 L878.2 507.1 L880.3 507.0 L882.3 506.8 L884.3 506.4 L886.2 506.0 L888.1 505.5 L889.9 504.8 L891.7 504.0 L893.5 503.2 L895.2 502.2 L896.8 501.1 L898.4 500.0 L899.9 498.7 L901.3 497.4 L902.7 496.0 L904.0 494.5 L905.3 493.0 L906.5 491.4 L907.6 489.7 L908.7 488.0 L909.7 486.2 L910.6 484.4 L911.4 482.5 L912.2 480.6 L912.8 478.7 L913.4 476.7 L914.0 474.7 L914.4 472.7 L914.8 470.6 L915.0 468.6 L915.2 466.5 L915.3 464.4 L915.3 462.3 L915.3 460.2 L915.1 458.2 L914.8 456.1 L914.5 454.0 L914.0 452.0 L913.5 450.0 L912.8 448.0 L912.1 446.1 L911.2 444.1 L910.3 442.3 L909.3 440.4 L908.2 438.6 L907.0 436.9 L905.7 435.2 L904.4 433.6 L903.0 432.1 L901.5 430.6 L900.0 429.2 L898.4 427.8 L896.8 426.6 L895.1 425.4 L893.4 424.3 L891.6 423.4 L889.8 422.5 L888.0 421.7 L886.2 421.0 L884.3 420.5 L882.4 420.1 L880.5 419.7 L878.6 419.5 L876.7 419.5 Z"/>
<path fill="#FF4500" stroke="#000" stroke-width="1.1" d="M876.9 434.8 L874.9 434.8 L873.0 435.1 L871.0 435.4 L869.1 436.0 L867.2 436.7 L865.3 437.5 L863.4 438.5 L861.6 439.6 L859.8 440.8 L858.1 442.1 L856.4 443.6 L854.8 445.1 L853.3 446.7 L851.8 448.4 L850.5 450.1 L849.2 451.9 L848.0 453.8 L847.0 455.7 L846.0 457.6 L845.2 459.6 L844.6 461.6 L844.0 463.5 L843.7 465.5 L843.4 467.5 L843.4 469.5 L843.5 471.4 L843.7 473.3 L844.1 475.2 L844.7 477.0 L845.4 478.8 L846.3 480.5 L847.3 482.2 L848.4 483.8 L849.6 485.3 L850.9 486.8 L852.3 488.1 L853.8 489.4 L855.4 490.6 L857.1 491.7 L858.8 492.7 L860.6 493.6 L862.4 494.4 L864.3 495.0 L866.2 495.6 L868.2 496.0 L870.1 496.2 L872.1 496.4 L874.1 496.3 L876.1 496.2 L878.1 495.9 L880.1 495.4 L882.0 494.9 L883.9 494.2 L885.8 493.4 L887.6 492.5 L889.4 491.4 L891.1 490.3 L892.8 489.1 L894.4 487.8 L895.9 486.4 L897.3 484.9 L898.6 483.4 L899.8 481.8 L900.9 480.1 L901.9 478.4 L902.8 476.6 L903.5 474.8 L904.1 472.9 L904.6 471.0 L904.9 469.0 L905.0 467.1 L905.0 465.1 L904.8 463.1 L904.4 461.1 L904.0 459.1 L903.4 457.2 L902.6 455.2 L901.8 453.3 L900.8 451.4 L899.8 449.6 L898.6 447.9 L897.3 446.2 L895.9 444.6 L894.5 443.1 L893.0 441.7 L891.4 440.4 L889.7 439.2 L888.0 438.1 L886.2 437.2 L884.4 436.4 L882.6 435.7 L880.7 435.3 L878.8 434.9 L876.9 434.8 Z"/>
<path fill="#FFFFFF" stroke="#000" stroke-width="1.1" d="M847.1 468.5 L848.3 467.2 L849.6 465.8 L850.9 464.3 L852.2 462.7 L853.6 461.2 L855.0 459.6 L856.4 458.0 L857.9 456.4 L859.5 454.9 L861.1 453.4 L862.8 452.1 L864.5 450.8 L866.3 449.7 L868.2 448.7 L870.1 447.9 L872.1 447.3 L874.0 446.9 L876.0 446.8 L878.0 446.9 L879.9 447.3 L881.8 448.0 L883.6 448.8 L885.4 449.8 L887.1 451.0 L888.7 452.4 L890.2 453.9 L891.5 455.5 L892.7 457.2 L893.8 459.0 L894.7 460.9 L895.3 462.8 L895.8 464.8 L896.0 466.8 L896.0 468.8 L895.8 470.8 L895.3 472.7 L894.6 474.6 L893.7 476.5 L892.7 478.3 L891.5 480.0 L890.1 481.6 L888.6 483.0 L887.0 484.4 L885.2 485.6 L883.4 486.7 L881.6 487.6 L879.6 488.3 L877.7 488.8 L875.7 489.1 L873.7 489.2 L871.7 489.0 L869.7 488.6 L867.8 488.1 L865.9 487.3 L864.0 486.4 L862.2 485.3 L860.4 484.1 L858.7 482.8 L857.0 481.4 L855.4 479.9 L853.9 478.3 L852.5 476.7 L851.2 475.1 L850.0 473.4 L848.9 471.7 L848.0 470.1 L847.1 468.5 Z"/>
<g stroke="#000" stroke-width="1.3" fill="none">
<path d="M640.5 0 V701"/>
<path d="M320 349.5 H962" stroke="#333"/>
<path d="M640.5 109.8 L433.3 468.5 L847.7 468.5 Z"/>
</g>
  </g>
  <path d="M319.6 0 V701.2 H961.3 V0" fill="none" stroke="#444" stroke-width="1.3"/>
  <g stroke="#4093dc" stroke-width="1.9" stroke-dasharray="5.9 4.06" fill="none">
    <path d="M321 -1.96 V730"/>
    <path d="M965 -1.96 V730"/>
    <path d="M303.7 705 H976"/>
  </g>
  <g font-family="Liberation Sans" font-size="13.8" fill="#fff">
    <rect x="320" y="227" width="60" height="28" fill="#3e92db"/>
    <text x="326.5" y="246">5mm</text>
    <rect x="904" y="255" width="60" height="28" fill="#3e92db"/>
    <text x="910" y="274">4mm</text>
    <rect x="641" y="676" width="60" height="28" fill="#3e92db"/>
    <text x="647" y="695">8mm</text>
  </g>
</svg>
</div>
<div id="sb">
  <svg width="15" height="736" style="position:absolute;left:0;top:0">
    <path d="M3 6.8 L7.6 -1.2 L12.2 6.8 Z" fill="#8a8a8a"/>
    <rect x="3" y="174" width="9" height="543" rx="4.5" fill="#8a8a8a"/>
    <path d="M3 725 L7.5 731.5 L12 725 Z" fill="#8a8a8a"/>
  </svg>
</div>
</body></html>
